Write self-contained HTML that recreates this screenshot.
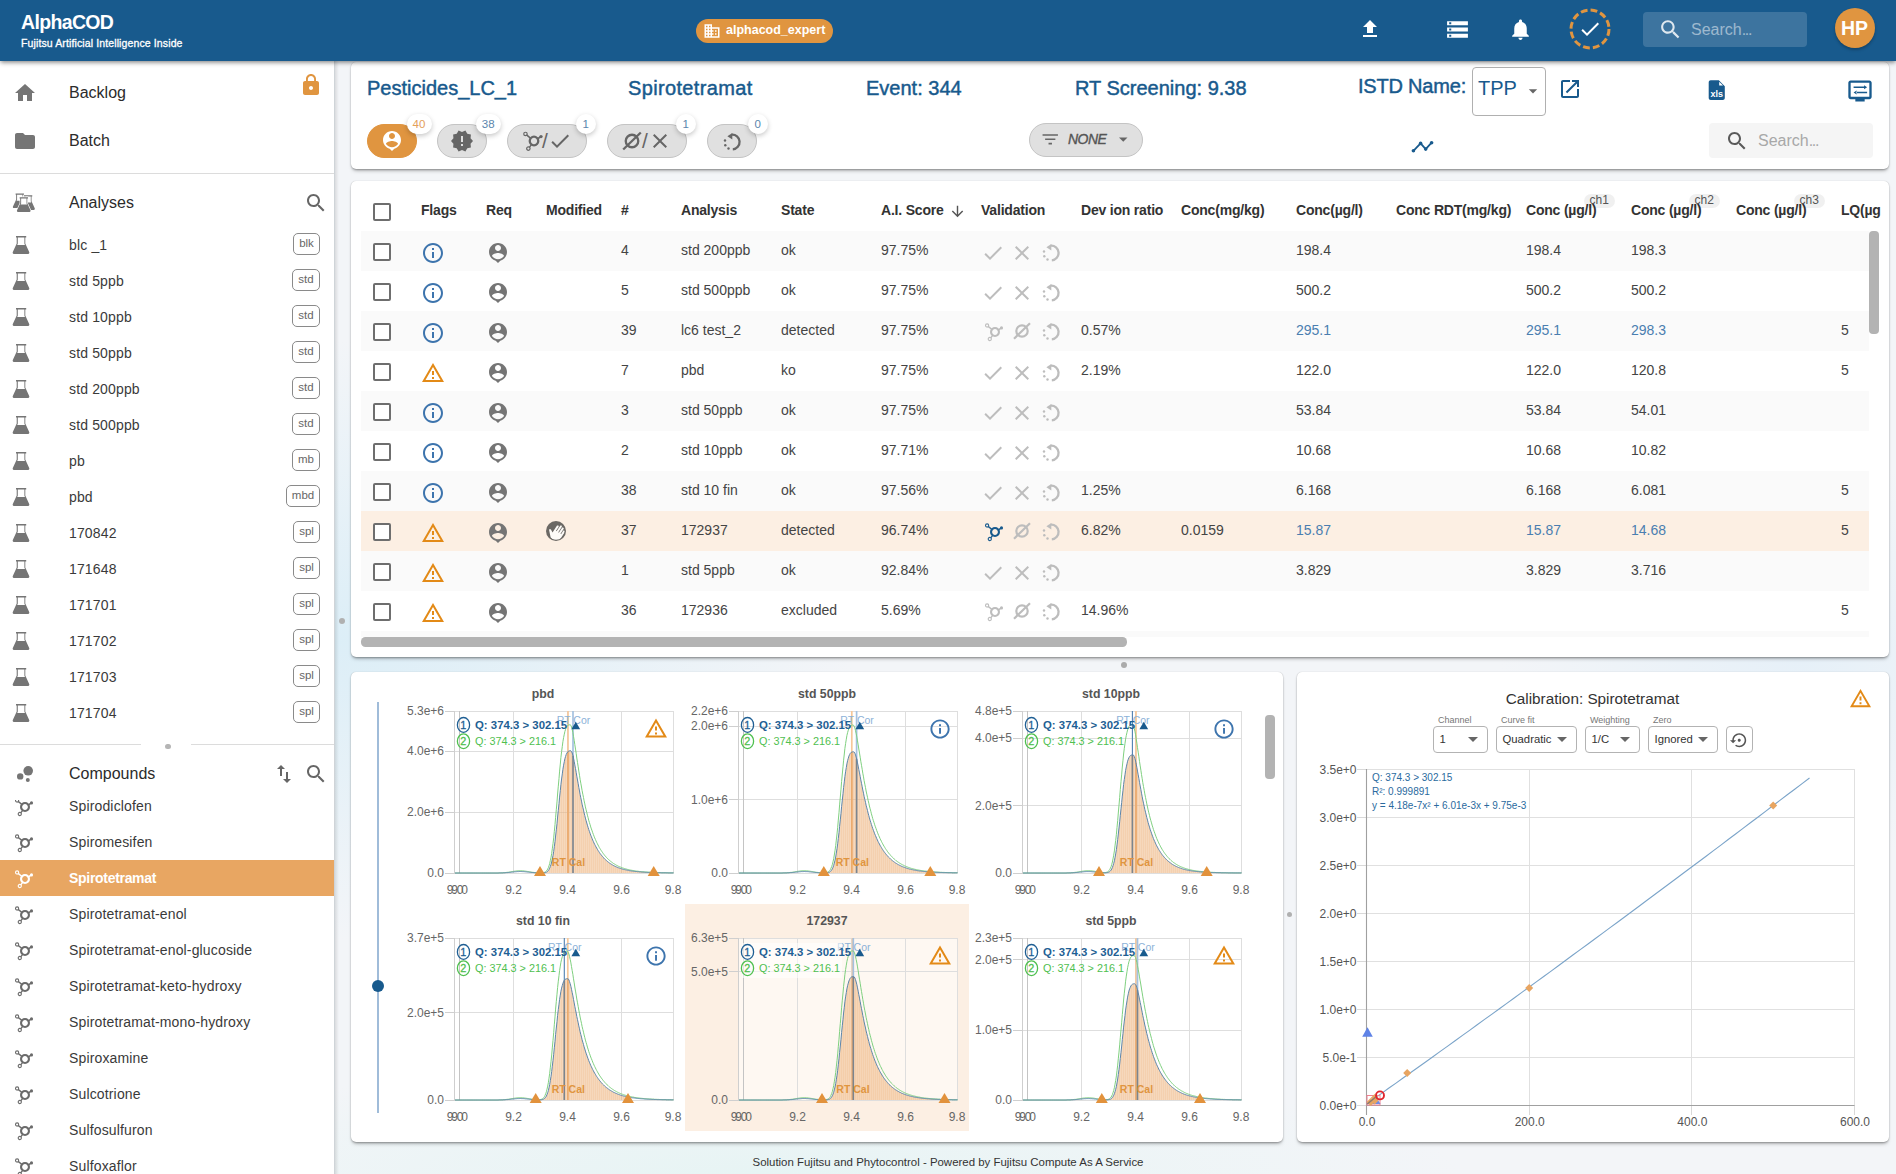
<!DOCTYPE html><html><head><meta charset="utf-8"><title>AlphaCOD</title><style>
*{box-sizing:border-box;margin:0;padding:0}
html,body{width:1896px;height:1174px;overflow:hidden}
body{position:relative;font-family:"Liberation Sans",sans-serif;color:#333;
 background:#f3f5f8;
 background-image:radial-gradient(ellipse 520px 300px at 335px 640px,#dceef7 0%,rgba(220,238,247,0) 100%),radial-gradient(ellipse 700px 110px at 760px 1174px,#e7f4f4 0%,rgba(231,244,244,0) 100%),radial-gradient(ellipse 300px 200px at 1800px 660px,#e6f0f8 0%,rgba(230,240,248,0) 100%)}
.abs,.t,.ic,.box{position:absolute}
.t{white-space:nowrap;line-height:20px;height:20px;margin-top:-10px}
.card{position:absolute;background:#fff;border-radius:5px;box-shadow:0 3px 4px -2px rgba(0,0,0,.38),0 1px 2px 0 rgba(0,0,0,.2),0 0 1px rgba(0,0,0,.22)}
#hdr{position:absolute;left:0;top:0;width:1896px;height:61px;background:#185a8d;box-shadow:0 2px 4px -1px rgba(0,0,0,.35),0 2px 5px 0 rgba(0,0,0,.2);z-index:5}
#side{position:absolute;left:0;top:60px;width:335px;height:1114px;background:#fff;border-right:1px solid #cfd4d8;overflow:hidden}
#grip{position:absolute;left:335px;top:60px;width:4px;height:1114px;background:linear-gradient(90deg,rgba(0,0,0,.10),rgba(0,0,0,0))}
.nav{font-size:16px;color:#2b2b2b;padding-top:1.2px}
.li{font-size:14px;color:#3a3a3a;letter-spacing:.15px}
.tag{position:absolute;height:22px;border:1px solid #8a8a8a;border-radius:5px;font-size:11.5px;color:#666;text-align:center;line-height:19px;background:#fff}
.h1{font-size:20px;color:#185a8d;font-weight:normal;-webkit-text-stroke:.45px #185a8d;line-height:28px;height:28px;margin-top:-14px}
.chip{position:absolute;height:33.5px;border-radius:17px;background:#e0e0e0;border:1px solid #c4c4c4}
.badge{position:absolute;width:20px;height:20px;border-radius:10px;background:#fff;box-shadow:0 2px 5px rgba(0,0,0,.22);font-size:11.5px;text-align:center;line-height:20px;color:#5b86ad}
.th{font-size:14px;font-weight:bold;color:#333;letter-spacing:-.2px}
.td{font-size:14px;color:#444}
.lnk{color:#4a7eb0}
.row{position:absolute;left:361px;width:1508px;height:40px}
.cb{position:absolute;width:18px;height:18px;border:2px solid #6e6e6e;border-radius:2px;background:#fff}
.sup{position:absolute;height:14px;border-radius:7px;background:rgba(0,0,0,.06);font-size:12px;line-height:13px;color:#555;padding:0 6px}
svg text{font-family:"Liberation Sans",sans-serif}
.sel{position:absolute;height:27px;border:1px solid #b3b3b3;border-radius:4px;background:#fff;font-size:11.3px;color:#333;line-height:25px;padding-left:5.5px}
.lbl{font-size:9px;color:#777}
</style></head><body>
<div id="hdr">
<div class="t " style="left:21px;top:22px;font-size:19.5px;font-weight:bold;color:#fff;letter-spacing:-.65px;line-height:24px;height:24px;margin-top:-12px;">AlphaCOD</div>
<div class="t " style="left:21px;top:42.6px;font-size:10.5px;color:#fff;-webkit-text-stroke:.3px #fff;letter-spacing:.12px;">Fujitsu Artificial Intelligence Inside</div>
<div class="abs" style="left:696px;top:18.5px;width:137px;height:24px;border-radius:12px;background:#e09540"></div>
<svg class="ic" style="left:703.30px;top:21.80px" width="18" height="18" viewBox="0 0 24 24" ><path fill="#fff" d="M12 7V3H2v18h20V7H12zM6 19H4v-2h2v2zm0-4H4v-2h2v2zm0-4H4V9h2v2zm0-4H4V5h2v2zm4 12H8v-2h2v2zm0-4H8v-2h2v2zm0-4H8V9h2v2zm0-4H8V5h2v2zm10 12h-8v-2h2v-2h-2v-2h2v-2h-2V9h8v10zm-2-8h-2v2h2v-2zm0 4h-2v2h2v-2z"/></svg>
<div class="t " style="left:726px;top:30px;font-size:12.5px;font-weight:bold;color:#fff;">alphacod_expert</div>
<svg class="ic" style="left:1358.00px;top:17.00px" width="24" height="24" viewBox="0 0 24 24" ><path fill="#fff" d="M9 16h6v-6h4l-7-7-7 7h4zm-4 2h14v2H5z"/></svg>
<svg class="ic" style="left:1445.00px;top:16.50px" width="25" height="25" viewBox="0 0 24 24" ><path fill="#fff" d="M2 20h20v-4H2v4zm2-3h2v2H4v-2zM2 4v4h20V4H2zm4 3H4V5h2v2zm-4 7h20v-4H2v4zm2-3h2v2H4v-2z"/></svg>
<svg class="ic" style="left:1508.00px;top:16.50px" width="25" height="25" viewBox="0 0 24 24" ><path fill="#fff" d="M12 22c1.1 0 2-.9 2-2h-4c0 1.1.89 2 2 2zm6-6v-5c0-3.07-1.64-5.64-4.5-6.32V4c0-.83-.67-1.5-1.5-1.5s-1.5.67-1.5 1.5v.68C7.63 5.36 6 7.92 6 11v5l-2 2v1h16v-1l-2-2z"/></svg>
<svg class="ic" style="left:1568px;top:7px" width="44" height="44" viewBox="0 0 44 44"><circle cx="22" cy="22" r="19" fill="none" stroke="#e09540" stroke-width="3" stroke-dasharray="6.8 3.15"/></svg>
<svg class="ic" style="left:1578.00px;top:17.00px" width="24" height="24" viewBox="0 0 24 24" ><path fill="#fff" d="M9 16.17L4.83 12l-1.42 1.41L9 19 21 7l-1.41-1.41z"/></svg>
<div class="abs" style="left:1643px;top:12px;width:164px;height:35px;border-radius:4px;background:rgba(255,255,255,.16)"></div>
<svg class="ic" style="left:1658.00px;top:16.50px" width="25" height="25" viewBox="0 0 24 24" ><path fill="#dfe8ef" d="M15.5 14h-.79l-.28-.27C15.41 12.59 16 11.11 16 9.5 16 5.91 13.09 3 9.5 3S3 5.91 3 9.5 5.91 16 9.5 16c1.61 0 3.09-.59 4.23-1.57l.27.28v.79l5 4.99L20.49 19l-4.99-5zm-6 0C7.01 14 5 11.99 5 9.5S7.01 5 9.5 5 14 7.01 14 9.5 11.99 14 9.5 14z"/></svg>
<div class="t " style="left:1691px;top:29.5px;font-size:16px;color:rgba(255,255,255,.5);">Search<span style="letter-spacing:-1.3px">...</span></div>
<div class="abs" style="left:1834.5px;top:7.5px;width:40.5px;height:40.5px;border-radius:21px;box-shadow:0 2px 3px rgba(0,0,0,.25);background:#e09540"></div>
<div class="t " style="left:1834px;top:27.5px;font-size:19.5px;font-weight:bold;color:#fff;width:41px;text-align:center;line-height:24px;height:24px;margin-top:-12px;">HP</div>
</div>
<div id="side"><div class="abs" style="left:0;top:-60px;width:335px;height:1174px">
<svg class="ic" style="left:13.00px;top:81.00px" width="24" height="24" viewBox="0 0 24 24" ><path fill="#757575" d="M10 20v-6h4v6h5v-8h3L12 3 2 12h3v8z"/></svg>
<div class="t nav" style="left:69px;top:92px;">Backlog</div>
<svg class="ic" style="left:299.00px;top:72.90px" width="24" height="24" viewBox="0 0 24 24" ><path fill="#e09540" d="M18 8h-1V6c0-2.76-2.24-5-5-5S7 3.24 7 6v2H6c-1.1 0-2 .9-2 2v10c0 1.1.9 2 2 2h12c1.1 0 2-.9 2-2V10c0-1.1-.9-2-2-2zm-6 9c-1.1 0-2-.9-2-2s.9-2 2-2 2 .9 2 2-.9 2-2 2zm3.1-9H8.9V6c0-1.71 1.39-3.1 3.1-3.1 1.71 0 3.1 1.39 3.1 3.1v2z"/></svg>
<svg class="ic" style="left:13.00px;top:128.50px" width="24" height="24" viewBox="0 0 24 24" ><path fill="#757575" d="M10 4H4c-1.1 0-1.99.9-1.99 2L2 18c0 1.1.9 2 2 2h16c1.1 0 2-.9 2-2V8c0-1.1-.9-2-2-2h-8l-2-2z"/></svg>
<div class="t nav" style="left:69px;top:140px;">Batch</div>
<div class="abs" style="left:0;top:173px;width:335px;height:1px;background:#dcdcdc"></div>
<svg class="ic" style="left:8px;top:188px" width="30" height="28" viewBox="0 0 30 28"><g stroke-linejoin="round"><path transform="translate(1.86,2.86) scale(.82)" fill="#757575" fill-rule="evenodd" d="M7 3.1h10.2v1.5h-.9v5.9l3.9 8.6c.4.9-.1 1.900-1 1.900H4.800c-.9 0-1.400-1-1-1.900l3.900-8.600V4.600H7zM8.800 4.600v6.100L8.200 12.100h7.800l-.6-1.400V4.600z"/><path transform="translate(10.16,4.66) scale(.82)" fill="#fff" stroke="#fff" stroke-width="1.3" d="M7 3.1h10.2v1.5h-.9v5.9l3.9 8.6c.4.9-.1 1.900-1 1.900H4.800c-.9 0-1.400-1-1-1.900l3.900-8.600V4.600H7z"/><path transform="translate(10.16,4.66) scale(.82)" fill="#757575" fill-rule="evenodd" d="M7 3.1h10.2v1.5h-.9v5.9l3.9 8.6c.4.9-.1 1.900-1 1.900H4.800c-.9 0-1.400-1-1-1.900l3.900-8.600V4.600H7zM8.800 4.600v6.100L8.200 12.100h7.800l-.6-1.400V4.600z"/><path transform="translate(5.91,6.66) scale(.82)" fill="#fff" stroke="#fff" stroke-width="1.5" d="M7 3.1h10.2v1.5h-.9v5.9l3.9 8.6c.4.9-.1 1.900-1 1.900H4.800c-.9 0-1.400-1-1-1.900l3.900-8.600V4.600H7z"/><path transform="translate(5.91,6.66) scale(.82)" fill="#757575" fill-rule="evenodd" d="M7 3.1h10.2v1.5h-.9v5.9l3.9 8.6c.4.9-.1 1.900-1 1.900H4.800c-.9 0-1.400-1-1-1.900l3.900-8.600V4.600H7zM8.800 4.600v6.100L8.200 12.100h7.800l-.6-1.400V4.600z"/></g></svg>
<div class="t nav" style="left:69px;top:202px;">Analyses</div>
<svg class="ic" style="left:303.80px;top:190.80px" width="24" height="24" viewBox="0 0 24 24" ><path fill="#666" d="M15.5 14h-.79l-.28-.27C15.41 12.59 16 11.11 16 9.5 16 5.91 13.09 3 9.5 3S3 5.91 3 9.5 5.91 16 9.5 16c1.61 0 3.09-.59 4.23-1.57l.27.28v.79l5 4.99L20.49 19l-4.99-5zm-6 0C7.01 14 5 11.99 5 9.5S7.01 5 9.5 5 14 7.01 14 9.5 11.99 14 9.5 14z"/></svg>
<svg class="ic" style="left:8.90px;top:233.10px" width="24" height="24" viewBox="0 0 24 24"><path fill="#757575" fill-rule="evenodd" d="M7 3.1h10.2v1.5h-.9v5.9l3.9 8.6c.4.9-.1 1.900-1 1.900H4.800c-.9 0-1.400-1-1-1.900l3.900-8.600V4.600H7zM8.800 4.600v6.100L8.200 12.100h7.800l-.6-1.400V4.600z"/></svg>
<div class="t li" style="left:69px;top:244.5px;">blc _1</div>
<div class="tag" style="left:293px;top:232.5px;width:27px">blk</div>
<svg class="ic" style="left:8.90px;top:269.10px" width="24" height="24" viewBox="0 0 24 24"><path fill="#757575" fill-rule="evenodd" d="M7 3.1h10.2v1.5h-.9v5.9l3.9 8.6c.4.9-.1 1.900-1 1.900H4.800c-.9 0-1.400-1-1-1.900l3.900-8.600V4.600H7zM8.800 4.600v6.100L8.200 12.100h7.800l-.6-1.400V4.600z"/></svg>
<div class="t li" style="left:69px;top:280.5px;">std 5ppb</div>
<div class="tag" style="left:292px;top:268.5px;width:28px">std</div>
<svg class="ic" style="left:8.90px;top:305.10px" width="24" height="24" viewBox="0 0 24 24"><path fill="#757575" fill-rule="evenodd" d="M7 3.1h10.2v1.5h-.9v5.9l3.9 8.6c.4.9-.1 1.900-1 1.900H4.800c-.9 0-1.400-1-1-1.900l3.900-8.600V4.600H7zM8.800 4.600v6.100L8.200 12.100h7.800l-.6-1.400V4.600z"/></svg>
<div class="t li" style="left:69px;top:316.5px;">std 10ppb</div>
<div class="tag" style="left:292px;top:304.5px;width:28px">std</div>
<svg class="ic" style="left:8.90px;top:341.10px" width="24" height="24" viewBox="0 0 24 24"><path fill="#757575" fill-rule="evenodd" d="M7 3.1h10.2v1.5h-.9v5.9l3.9 8.6c.4.9-.1 1.900-1 1.900H4.800c-.9 0-1.400-1-1-1.900l3.900-8.600V4.600H7zM8.800 4.600v6.100L8.200 12.100h7.800l-.6-1.400V4.600z"/></svg>
<div class="t li" style="left:69px;top:352.5px;">std 50ppb</div>
<div class="tag" style="left:292px;top:340.5px;width:28px">std</div>
<svg class="ic" style="left:8.90px;top:377.10px" width="24" height="24" viewBox="0 0 24 24"><path fill="#757575" fill-rule="evenodd" d="M7 3.1h10.2v1.5h-.9v5.9l3.9 8.6c.4.9-.1 1.900-1 1.900H4.800c-.9 0-1.400-1-1-1.900l3.900-8.600V4.600H7zM8.800 4.600v6.100L8.200 12.100h7.800l-.6-1.400V4.600z"/></svg>
<div class="t li" style="left:69px;top:388.5px;">std 200ppb</div>
<div class="tag" style="left:292px;top:376.5px;width:28px">std</div>
<svg class="ic" style="left:8.90px;top:413.10px" width="24" height="24" viewBox="0 0 24 24"><path fill="#757575" fill-rule="evenodd" d="M7 3.1h10.2v1.5h-.9v5.9l3.9 8.6c.4.9-.1 1.900-1 1.900H4.800c-.9 0-1.400-1-1-1.900l3.900-8.600V4.600H7zM8.800 4.600v6.100L8.200 12.100h7.800l-.6-1.400V4.600z"/></svg>
<div class="t li" style="left:69px;top:424.5px;">std 500ppb</div>
<div class="tag" style="left:292px;top:412.5px;width:28px">std</div>
<svg class="ic" style="left:8.90px;top:449.10px" width="24" height="24" viewBox="0 0 24 24"><path fill="#757575" fill-rule="evenodd" d="M7 3.1h10.2v1.5h-.9v5.9l3.9 8.6c.4.9-.1 1.900-1 1.900H4.800c-.9 0-1.400-1-1-1.900l3.900-8.600V4.600H7zM8.800 4.600v6.100L8.200 12.100h7.800l-.6-1.400V4.600z"/></svg>
<div class="t li" style="left:69px;top:460.5px;">pb</div>
<div class="tag" style="left:292px;top:448.5px;width:28px">mb</div>
<svg class="ic" style="left:8.90px;top:485.10px" width="24" height="24" viewBox="0 0 24 24"><path fill="#757575" fill-rule="evenodd" d="M7 3.1h10.2v1.5h-.9v5.9l3.9 8.6c.4.9-.1 1.900-1 1.900H4.800c-.9 0-1.400-1-1-1.900l3.900-8.600V4.600H7zM8.800 4.600v6.100L8.200 12.100h7.800l-.6-1.400V4.600z"/></svg>
<div class="t li" style="left:69px;top:496.5px;">pbd</div>
<div class="tag" style="left:286px;top:484.5px;width:34px">mbd</div>
<svg class="ic" style="left:8.90px;top:521.10px" width="24" height="24" viewBox="0 0 24 24"><path fill="#757575" fill-rule="evenodd" d="M7 3.1h10.2v1.5h-.9v5.9l3.9 8.6c.4.9-.1 1.900-1 1.900H4.800c-.9 0-1.400-1-1-1.900l3.900-8.600V4.600H7zM8.800 4.600v6.100L8.200 12.100h7.800l-.6-1.400V4.600z"/></svg>
<div class="t li" style="left:69px;top:532.5px;">170842</div>
<div class="tag" style="left:293px;top:520.5px;width:27px">spl</div>
<svg class="ic" style="left:8.90px;top:557.10px" width="24" height="24" viewBox="0 0 24 24"><path fill="#757575" fill-rule="evenodd" d="M7 3.1h10.2v1.5h-.9v5.9l3.9 8.6c.4.9-.1 1.900-1 1.900H4.800c-.9 0-1.400-1-1-1.900l3.900-8.600V4.600H7zM8.800 4.600v6.100L8.200 12.100h7.800l-.6-1.400V4.600z"/></svg>
<div class="t li" style="left:69px;top:568.5px;">171648</div>
<div class="tag" style="left:293px;top:556.5px;width:27px">spl</div>
<svg class="ic" style="left:8.90px;top:593.10px" width="24" height="24" viewBox="0 0 24 24"><path fill="#757575" fill-rule="evenodd" d="M7 3.1h10.2v1.5h-.9v5.9l3.9 8.6c.4.9-.1 1.900-1 1.900H4.800c-.9 0-1.400-1-1-1.900l3.900-8.600V4.600H7zM8.800 4.600v6.100L8.200 12.100h7.800l-.6-1.400V4.600z"/></svg>
<div class="t li" style="left:69px;top:604.5px;">171701</div>
<div class="tag" style="left:293px;top:592.5px;width:27px">spl</div>
<svg class="ic" style="left:8.90px;top:629.10px" width="24" height="24" viewBox="0 0 24 24"><path fill="#757575" fill-rule="evenodd" d="M7 3.1h10.2v1.5h-.9v5.9l3.9 8.6c.4.9-.1 1.900-1 1.900H4.800c-.9 0-1.400-1-1-1.900l3.900-8.600V4.600H7zM8.800 4.600v6.100L8.200 12.100h7.800l-.6-1.400V4.600z"/></svg>
<div class="t li" style="left:69px;top:640.5px;">171702</div>
<div class="tag" style="left:293px;top:628.5px;width:27px">spl</div>
<svg class="ic" style="left:8.90px;top:665.10px" width="24" height="24" viewBox="0 0 24 24"><path fill="#757575" fill-rule="evenodd" d="M7 3.1h10.2v1.5h-.9v5.9l3.9 8.6c.4.9-.1 1.900-1 1.900H4.800c-.9 0-1.400-1-1-1.900l3.900-8.600V4.600H7zM8.800 4.600v6.100L8.200 12.100h7.800l-.6-1.400V4.600z"/></svg>
<div class="t li" style="left:69px;top:676.5px;">171703</div>
<div class="tag" style="left:293px;top:664.5px;width:27px">spl</div>
<svg class="ic" style="left:8.90px;top:701.10px" width="24" height="24" viewBox="0 0 24 24"><path fill="#757575" fill-rule="evenodd" d="M7 3.1h10.2v1.5h-.9v5.9l3.9 8.6c.4.9-.1 1.900-1 1.900H4.800c-.9 0-1.400-1-1-1.900l3.900-8.600V4.600H7zM8.800 4.600v6.100L8.200 12.100h7.800l-.6-1.400V4.600z"/></svg>
<div class="t li" style="left:69px;top:712.5px;">171704</div>
<div class="tag" style="left:293px;top:700.5px;width:27px">spl</div>
<div class="abs" style="left:0;top:744px;width:335px;height:1px;background:#dcdcdc"></div>
<div class="abs" style="left:141px;top:740px;width:50px;height:12px;background:#fff"></div>
<div class="abs" style="left:165px;top:743.8px;width:5.5px;height:5.5px;border-radius:3px;background:#b5b5b5"></div>
<svg class="ic" style="left:13px;top:762px" width="24" height="24" viewBox="0 0 24 24" fill="#757575"><circle cx="7.200" cy="14.400" r="3.200"/><circle cx="14.800" cy="18" r="2"/><circle cx="15.200" cy="8.800" r="4.800"/></svg>
<div class="t nav" style="left:69px;top:773px;">Compounds</div>
<svg class="ic" style="left:272.00px;top:762.00px" width="24" height="24" viewBox="0 0 24 24" ><path fill="#666" d="M16 17.01V10h-2v7.01h-3L15 21l4-3.99h-3zM9 3L5 6.99h3V14h2V6.99h3L9 3z"/></svg>
<svg class="ic" style="left:303.85px;top:761.80px" width="24" height="24" viewBox="0 0 24 24" ><path fill="#666" d="M15.5 14h-.79l-.28-.27C15.41 12.59 16 11.11 16 9.5 16 5.91 13.09 3 9.5 3S3 5.91 3 9.5 5.91 16 9.5 16c1.61 0 3.09-.59 4.23-1.57l.27.28v.79l5 4.99L20.49 19l-4.99-5zm-6 0C7.01 14 5 11.99 5 9.5S7.01 5 9.5 5 14 7.01 14 9.5 11.99 14 9.5 14z"/></svg>
<svg class="ic" style="left:12.80px;top:794.90px;overflow:visible" width="24" height="24" viewBox="0 0 24 24" fill="none" stroke="#6b6b6b"><g transform="translate(12 12) scale(1)"><circle cx="0" cy="0" r="3.95" stroke-width="2.1"/><path d="M-6.9 -5.6L-3.3 -2.7M-4.3 5.9L-2.5 3.6" stroke-width="1.4"/><path d="M3.4 -2.1L6.5 -4.1" stroke-width="1.6"/><circle cx="-7.9" cy="-6.5" r="1.6" stroke-width="1.1"/><circle cx="6.5" cy="-4.1" r="1.55" fill="#6b6b6b" stroke="none"/><circle cx="-5.2" cy="7.0" r="1.6" stroke-width="1.1"/></g></svg>
<div class="t li" style="left:69px;top:806px;">Spirodiclofen</div>
<svg class="ic" style="left:12.80px;top:830.90px;overflow:visible" width="24" height="24" viewBox="0 0 24 24" fill="none" stroke="#6b6b6b"><g transform="translate(12 12) scale(1)"><circle cx="0" cy="0" r="3.95" stroke-width="2.1"/><path d="M-6.9 -5.6L-3.3 -2.7M-4.3 5.9L-2.5 3.6" stroke-width="1.4"/><path d="M3.4 -2.1L6.5 -4.1" stroke-width="1.6"/><circle cx="-7.9" cy="-6.5" r="1.6" stroke-width="1.1"/><circle cx="6.5" cy="-4.1" r="1.55" fill="#6b6b6b" stroke="none"/><circle cx="-5.2" cy="7.0" r="1.6" stroke-width="1.1"/></g></svg>
<div class="t li" style="left:69px;top:842px;">Spiromesifen</div>
<div class="abs" style="left:0;top:860px;width:335px;height:36px;background:#e8a662"></div>
<svg class="ic" style="left:12.80px;top:866.90px;overflow:visible" width="24" height="24" viewBox="0 0 24 24" fill="none" stroke="#fff"><g transform="translate(12 12) scale(1)"><circle cx="0" cy="0" r="3.95" stroke-width="2.1"/><path d="M-6.9 -5.6L-3.3 -2.7M-4.3 5.9L-2.5 3.6" stroke-width="1.4"/><path d="M3.4 -2.1L6.5 -4.1" stroke-width="1.6"/><circle cx="-7.9" cy="-6.5" r="1.6" stroke-width="1.1"/><circle cx="6.5" cy="-4.1" r="1.55" fill="#fff" stroke="none"/><circle cx="-5.2" cy="7.0" r="1.6" stroke-width="1.1"/></g></svg>
<div class="t li" style="left:69px;top:878px;color:#fff;font-weight:bold;letter-spacing:-.3px;">Spirotetramat</div>
<svg class="ic" style="left:12.80px;top:902.90px;overflow:visible" width="24" height="24" viewBox="0 0 24 24" fill="none" stroke="#6b6b6b"><g transform="translate(12 12) scale(1)"><circle cx="0" cy="0" r="3.95" stroke-width="2.1"/><path d="M-6.9 -5.6L-3.3 -2.7M-4.3 5.9L-2.5 3.6" stroke-width="1.4"/><path d="M3.4 -2.1L6.5 -4.1" stroke-width="1.6"/><circle cx="-7.9" cy="-6.5" r="1.6" stroke-width="1.1"/><circle cx="6.5" cy="-4.1" r="1.55" fill="#6b6b6b" stroke="none"/><circle cx="-5.2" cy="7.0" r="1.6" stroke-width="1.1"/></g></svg>
<div class="t li" style="left:69px;top:914px;">Spirotetramat-enol</div>
<svg class="ic" style="left:12.80px;top:938.90px;overflow:visible" width="24" height="24" viewBox="0 0 24 24" fill="none" stroke="#6b6b6b"><g transform="translate(12 12) scale(1)"><circle cx="0" cy="0" r="3.95" stroke-width="2.1"/><path d="M-6.9 -5.6L-3.3 -2.7M-4.3 5.9L-2.5 3.6" stroke-width="1.4"/><path d="M3.4 -2.1L6.5 -4.1" stroke-width="1.6"/><circle cx="-7.9" cy="-6.5" r="1.6" stroke-width="1.1"/><circle cx="6.5" cy="-4.1" r="1.55" fill="#6b6b6b" stroke="none"/><circle cx="-5.2" cy="7.0" r="1.6" stroke-width="1.1"/></g></svg>
<div class="t li" style="left:69px;top:950px;">Spirotetramat-enol-glucoside</div>
<svg class="ic" style="left:12.80px;top:974.90px;overflow:visible" width="24" height="24" viewBox="0 0 24 24" fill="none" stroke="#6b6b6b"><g transform="translate(12 12) scale(1)"><circle cx="0" cy="0" r="3.95" stroke-width="2.1"/><path d="M-6.9 -5.6L-3.3 -2.7M-4.3 5.9L-2.5 3.6" stroke-width="1.4"/><path d="M3.4 -2.1L6.5 -4.1" stroke-width="1.6"/><circle cx="-7.9" cy="-6.5" r="1.6" stroke-width="1.1"/><circle cx="6.5" cy="-4.1" r="1.55" fill="#6b6b6b" stroke="none"/><circle cx="-5.2" cy="7.0" r="1.6" stroke-width="1.1"/></g></svg>
<div class="t li" style="left:69px;top:986px;">Spirotetramat-keto-hydroxy</div>
<svg class="ic" style="left:12.80px;top:1010.90px;overflow:visible" width="24" height="24" viewBox="0 0 24 24" fill="none" stroke="#6b6b6b"><g transform="translate(12 12) scale(1)"><circle cx="0" cy="0" r="3.95" stroke-width="2.1"/><path d="M-6.9 -5.6L-3.3 -2.7M-4.3 5.9L-2.5 3.6" stroke-width="1.4"/><path d="M3.4 -2.1L6.5 -4.1" stroke-width="1.6"/><circle cx="-7.9" cy="-6.5" r="1.6" stroke-width="1.1"/><circle cx="6.5" cy="-4.1" r="1.55" fill="#6b6b6b" stroke="none"/><circle cx="-5.2" cy="7.0" r="1.6" stroke-width="1.1"/></g></svg>
<div class="t li" style="left:69px;top:1022px;">Spirotetramat-mono-hydroxy</div>
<svg class="ic" style="left:12.80px;top:1046.90px;overflow:visible" width="24" height="24" viewBox="0 0 24 24" fill="none" stroke="#6b6b6b"><g transform="translate(12 12) scale(1)"><circle cx="0" cy="0" r="3.95" stroke-width="2.1"/><path d="M-6.9 -5.6L-3.3 -2.7M-4.3 5.9L-2.5 3.6" stroke-width="1.4"/><path d="M3.4 -2.1L6.5 -4.1" stroke-width="1.6"/><circle cx="-7.9" cy="-6.5" r="1.6" stroke-width="1.1"/><circle cx="6.5" cy="-4.1" r="1.55" fill="#6b6b6b" stroke="none"/><circle cx="-5.2" cy="7.0" r="1.6" stroke-width="1.1"/></g></svg>
<div class="t li" style="left:69px;top:1058px;">Spiroxamine</div>
<svg class="ic" style="left:12.80px;top:1082.90px;overflow:visible" width="24" height="24" viewBox="0 0 24 24" fill="none" stroke="#6b6b6b"><g transform="translate(12 12) scale(1)"><circle cx="0" cy="0" r="3.95" stroke-width="2.1"/><path d="M-6.9 -5.6L-3.3 -2.7M-4.3 5.9L-2.5 3.6" stroke-width="1.4"/><path d="M3.4 -2.1L6.5 -4.1" stroke-width="1.6"/><circle cx="-7.9" cy="-6.5" r="1.6" stroke-width="1.1"/><circle cx="6.5" cy="-4.1" r="1.55" fill="#6b6b6b" stroke="none"/><circle cx="-5.2" cy="7.0" r="1.6" stroke-width="1.1"/></g></svg>
<div class="t li" style="left:69px;top:1094px;">Sulcotrione</div>
<svg class="ic" style="left:12.80px;top:1118.90px;overflow:visible" width="24" height="24" viewBox="0 0 24 24" fill="none" stroke="#6b6b6b"><g transform="translate(12 12) scale(1)"><circle cx="0" cy="0" r="3.95" stroke-width="2.1"/><path d="M-6.9 -5.6L-3.3 -2.7M-4.3 5.9L-2.5 3.6" stroke-width="1.4"/><path d="M3.4 -2.1L6.5 -4.1" stroke-width="1.6"/><circle cx="-7.9" cy="-6.5" r="1.6" stroke-width="1.1"/><circle cx="6.5" cy="-4.1" r="1.55" fill="#6b6b6b" stroke="none"/><circle cx="-5.2" cy="7.0" r="1.6" stroke-width="1.1"/></g></svg>
<div class="t li" style="left:69px;top:1130px;">Sulfosulfuron</div>
<svg class="ic" style="left:12.80px;top:1154.90px;overflow:visible" width="24" height="24" viewBox="0 0 24 24" fill="none" stroke="#6b6b6b"><g transform="translate(12 12) scale(1)"><circle cx="0" cy="0" r="3.95" stroke-width="2.1"/><path d="M-6.9 -5.6L-3.3 -2.7M-4.3 5.9L-2.5 3.6" stroke-width="1.4"/><path d="M3.4 -2.1L6.5 -4.1" stroke-width="1.6"/><circle cx="-7.9" cy="-6.5" r="1.6" stroke-width="1.1"/><circle cx="6.5" cy="-4.1" r="1.55" fill="#6b6b6b" stroke="none"/><circle cx="-5.2" cy="7.0" r="1.6" stroke-width="1.1"/></g></svg>
<div class="t li" style="left:69px;top:1166px;">Sulfoxaflor</div>
<div class="abs" style="left:0;top:788px;width:60px;height:12.4px;background:#fff"></div>
</div></div>
<div id="grip"></div>
<div class="abs" style="left:339px;top:618px;width:5.5px;height:5.5px;border-radius:3px;background:#b0b0b0"></div>
<div class="card" style="left:351px;top:62px;width:1538px;height:107px"></div>
<div class="t h1" style="left:367px;top:88px;">Pesticides_LC_1</div>
<div class="t h1" style="left:628px;top:88px;letter-spacing:.35px;">Spirotetramat</div>
<div class="t h1" style="left:866px;top:88px;">Event: 344</div>
<div class="t h1" style="left:1075px;top:88px;">RT Screening: 9.38</div>
<div class="t h1" style="left:1358px;top:86.4px;letter-spacing:-.2px;">ISTD Name:</div>
<div class="abs" style="left:1472px;top:67px;width:74px;height:49px;border:1px solid #b0b0b0;border-radius:4px;background:#fff"></div>
<div class="t h1" style="left:1478px;top:87.6px;-webkit-text-stroke:0;">TPP</div>
<svg class="ic" style="left:1522.50px;top:81.00px" width="20" height="20" viewBox="0 0 24 24" ><path fill="#666" d="M7 10l5 5 5-5z"/></svg>
<svg class="ic" style="left:1558.00px;top:76.80px" width="24" height="24" viewBox="0 0 24 24" ><path fill="#185a8d" d="M19 19H5V5h7V3H5c-1.11 0-2 .9-2 2v14c0 1.1.89 2 2 2h14c1.1 0 2-.9 2-2v-7h-2v7zM14 3v2h3.59l-9.83 9.83 1.41 1.41L19 6.41V10h2V3h-7z"/></svg>
<svg class="ic" style="left:1705px;top:78.100px" width="24" height="24" viewBox="0 0 24 24"><path fill="#185a8d" d="M5.700 2.200h8.100l6 6v11.800c0 1.100-.9 2-2 2H5.700c-1.100 0-2-.9-2-2V4.200c0-1.100.9-2 2-2z"/><path fill="#fff" d="M14.200 3.800v3.800H18z"/><text x="11.800" y="19" font-size="9" font-weight="bold" fill="#fff" text-anchor="middle">xls</text></svg>
<svg class="ic" style="left:1845.700px;top:76.700px" width="28" height="28" viewBox="0 0 24 24"><path fill="#185a8d" d="M20 3H4c-1.110 0-2 .89-2 2v12c0 1.100.89 2 2 2h4v2h8v-2h4c1.100 0 2-.9 2-2V5c0-1.110-.9-2-2-2zm0 14H4V5h16v12z"/><path fill="#185a8d" d="M6.500 8.100h9v1.300h-9zM15.500 7l2.600 1.750-2.600 1.750zM8.500 12.600h9.600v1.300H8.500zM9.100 11.500l-2.600 1.750 2.600 1.750z"/></svg>
<div class="chip" style="left:367px;top:124px;height:34px;width:50px;background:#e09540;border-color:#e09540;"></div>
<svg class="ic" style="left:380.00px;top:128.90px" width="24" height="24" viewBox="0 0 24 24" ><path fill="#fff" d="M12 2c-4.97 0-9 4.03-9 9 0 4.17 2.84 7.67 6.69 8.69L12 22l2.31-2.31C18.16 18.67 21 15.17 21 11c0-4.97-4.03-9-9-9zm0 2c1.66 0 3 1.34 3 3s-1.34 3-3 3-3-1.34-3-3 1.34-3 3-3zm0 14.3c-2.5 0-4.71-1.28-6-3.22.03-1.99 4-3.08 6-3.08 1.99 0 5.97 1.09 6 3.08-1.29 1.94-3.5 3.22-6 3.22z"/></svg>
<div class="badge" style="left:406.5px;top:114px;width:25px;color:#e3a05a">40</div>
<div class="chip" style="left:437px;top:124px;height:34px;width:50px;"></div>
<svg class="ic" style="left:450.00px;top:129.20px" width="24" height="24" viewBox="0 0 24 24" ><path fill="#666" d="M23 12l-2.44-2.78.34-3.68-3.61-.82-1.89-3.18L12 3 8.6 1.54 6.71 4.72l-3.61.81.34 3.68L1 12l2.44 2.78-.34 3.69 3.61.82 1.89 3.18L12 21l3.4 1.46 1.89-3.18 3.61-.82-.34-3.68L23 12zm-10 5h-2v-2h2v2zm0-4h-2V7h2v6z"/></svg>
<div class="badge" style="left:475.7px;top:114px;width:25px;color:#5b86ad">38</div>
<div class="chip" style="left:507px;top:124px;height:34px;width:80px;"></div>
<svg class="ic" style="left:521.90px;top:129.30px;overflow:visible" width="24" height="24" viewBox="0 0 24 24" fill="none" stroke="#666"><g transform="translate(12 12) scale(1.08)"><circle cx="0" cy="0" r="3.95" stroke-width="2.1"/><path d="M-6.9 -5.6L-3.3 -2.7M-4.3 5.9L-2.5 3.6" stroke-width="1.4"/><path d="M3.4 -2.1L6.5 -4.1" stroke-width="1.6"/><circle cx="-7.9" cy="-6.5" r="1.6" stroke-width="1.1"/><circle cx="6.5" cy="-4.1" r="1.55" fill="#666" stroke="none"/><circle cx="-5.2" cy="7.0" r="1.6" stroke-width="1.1"/></g></svg>
<div class="t " style="left:542px;top:141px;font-size:21px;color:#666;">/</div>
<svg class="ic" style="left:548.30px;top:128.70px" width="24" height="24" viewBox="0 0 24 24" ><path fill="#666" d="M9 16.17L4.83 12l-1.42 1.41L9 19 21 7l-1.41-1.41z"/></svg>
<div class="badge" style="left:575.7px;top:114px;width:20px;color:#5b86ad">1</div>
<div class="chip" style="left:607px;top:124px;height:34px;width:80px;"></div>
<svg class="ic" style="left:620.40px;top:129.30px;overflow:visible" width="24" height="24" viewBox="0 0 24 24" fill="none" stroke="#666" stroke-width="2.1"><g transform="translate(12 12) scale(1.1)"><circle cx="0" cy="0" r="5.7"/><path d="M-8 7.7L8 -7.7"/></g></svg>
<div class="t " style="left:642px;top:141px;font-size:21px;color:#666;">/</div>
<svg class="ic" style="left:648.00px;top:129.00px" width="24" height="24" viewBox="0 0 24 24" ><path fill="#666" d="M19 6.41L17.59 5 12 10.59 6.41 5 5 6.41 10.59 12 5 17.59 6.41 19 12 13.41 17.59 19 19 17.59 13.41 12z"/></svg>
<div class="badge" style="left:675.7px;top:114px;width:20px;color:#5b86ad">1</div>
<div class="chip" style="left:707px;top:124px;height:34px;width:50px;"></div>
<svg class="ic" style="left:720.10px;top:130.10px;overflow:visible" width="24" height="24" viewBox="0 0 24 24"><g transform="translate(12 12) scale(1)" fill="#666"><path d="M-0.3 -7.3A7.3 7.3 0 1 1 0.8 7.3" fill="none" stroke="#666" stroke-width="2.3"/><path d="M-4.6 -5.7L0.3 -9.0L0.3 -2.6Z"/><circle cx="-7.0" cy="-1.5" r="1.2"/><circle cx="-6.7" cy="3.3" r="1.2"/><circle cx="-3.5" cy="6.5" r="1.2"/></g></svg>
<div class="badge" style="left:747.7px;top:114px;width:20px;color:#5b86ad">0</div>
<div class="chip" style="left:1029px;top:123px;height:33.7px;width:114px;"></div>
<svg class="ic" style="left:1039.85px;top:129.35px" width="20.5" height="20.5" viewBox="0 0 24 24" ><path fill="#666" d="M10 18h4v-2h-4v2zM3 6v2h18V6H3zm3 7h12v-2H6v2z"/></svg>
<div class="t " style="left:1068px;top:138.6px;font-size:14px;font-style:italic;color:#555;-webkit-text-stroke:.35px #555;letter-spacing:-.55px;">NONE</div>
<svg class="ic" style="left:1113.45px;top:129.45px" width="20.5" height="20.5" viewBox="0 0 24 24" ><path fill="#666" d="M7 10l5 5 5-5z"/></svg>
<svg class="ic" style="left:1408px;top:136px" width="30" height="20" viewBox="1408 136 30 20"><path d="M1413.400 150.800L1420.600 143.400L1425.700 149.100L1431.600 142.700" fill="none" stroke="#185a8d" stroke-width="1.800"/><g fill="#185a8d"><circle cx="1413.400" cy="150.800" r="1.800"/><circle cx="1420.600" cy="143.400" r="1.800"/><circle cx="1425.700" cy="149.100" r="1.800"/><circle cx="1431.600" cy="142.700" r="1.800"/></g></svg>
<div class="abs" style="left:1709px;top:123px;width:164px;height:35px;border-radius:4px;background:#f5f5f5"></div>
<svg class="ic" style="left:1725.00px;top:128.50px" width="24" height="24" viewBox="0 0 24 24" ><path fill="#5a5a5a" d="M15.5 14h-.79l-.28-.27C15.41 12.59 16 11.11 16 9.5 16 5.91 13.09 3 9.5 3S3 5.91 3 9.5 5.91 16 9.5 16c1.61 0 3.09-.59 4.23-1.57l.27.28v.79l5 4.99L20.49 19l-4.99-5zm-6 0C7.01 14 5 11.99 5 9.5S7.01 5 9.5 5 14 7.01 14 9.5 11.99 14 9.5 14z"/></svg>
<div class="t " style="left:1758px;top:141px;font-size:16px;color:#a8a8a8;">Search<span style="letter-spacing:-1.3px">...</span></div>
<div class="card" style="left:351px;top:181px;width:1538px;height:476px;overflow:hidden"></div>
<div class="cb" style="left:373px;top:203px"></div>
<div class="t th" style="left:421px;top:210px;">Flags</div>
<div class="t th" style="left:486px;top:210px;">Req</div>
<div class="t th" style="left:546px;top:210px;">Modified</div>
<div class="t th" style="left:621px;top:210px;">#</div>
<div class="t th" style="left:681px;top:210px;">Analysis</div>
<div class="t th" style="left:781px;top:210px;">State</div>
<div class="t th" style="left:881px;top:210px;">A.I. Score</div>
<div class="t th" style="left:981px;top:210px;">Validation</div>
<div class="t th" style="left:1081px;top:210px;">Dev ion ratio</div>
<div class="t th" style="left:1181px;top:210px;">Conc(mg/kg)</div>
<div class="t th" style="left:1296px;top:210px;">Conc(µg/l)</div>
<div class="t th" style="left:1396px;top:210px;">Conc RDT(mg/kg)</div>
<div class="t th" style="left:1526px;top:210px;">Conc (µg/l)</div>
<div class="t th" style="left:1631px;top:210px;">Conc (µg/l)</div>
<div class="t th" style="left:1736px;top:210px;">Conc (µg/l)</div>
<div class="t th" style="left:1841px;top:210px;">LQ(µg</div>
<svg class="ic" style="left:948.50px;top:202.50px" width="17" height="17" viewBox="0 0 24 24" ><path fill="#555" d="M20 12l-1.41-1.41L13 16.17V4h-2v12.17l-5.58-5.59L4 12l8 8 8-8z"/></svg>
<div class="sup" style="left:1583.5px;top:194px">ch1</div>
<div class="sup" style="left:1688.5px;top:194px">ch2</div>
<div class="sup" style="left:1793.5px;top:194px">ch3</div>
<div class="row" style="top:231px;background:#fafafa"></div>
<div class="cb" style="left:373px;top:242.8px"></div>
<svg class="ic" style="left:421.00px;top:240.50px" width="24" height="24" viewBox="0 0 24 24" ><path fill="#3d74ad" d="M11 17h2v-6h-2v6zm1-15C6.48 2 2 6.48 2 12s4.48 10 10 10 10-4.48 10-10S17.52 2 12 2zm0 18c-4.41 0-8-3.59-8-8s3.59-8 8-8 8 3.59 8 8-3.59 8-8 8zM11 9h2V7h-2v2z"/></svg>
<svg class="ic" style="left:486.00px;top:240.95px" width="24" height="24" viewBox="0 0 24 24" ><path fill="#757575" d="M12 2c-4.97 0-9 4.03-9 9 0 4.17 2.84 7.67 6.69 8.69L12 22l2.31-2.31C18.16 18.67 21 15.17 21 11c0-4.97-4.03-9-9-9zm0 2c1.66 0 3 1.34 3 3s-1.34 3-3 3-3-1.34-3-3 1.34-3 3-3zm0 14.3c-2.5 0-4.71-1.28-6-3.22.03-1.99 4-3.08 6-3.08 1.99 0 5.97 1.09 6 3.08-1.29 1.94-3.5 3.22-6 3.22z"/></svg>
<div class="t td" style="left:621px;top:250px;">4</div>
<div class="t td" style="left:681px;top:250px;">std 200ppb</div>
<div class="t td" style="left:781px;top:250px;">ok</div>
<div class="t td" style="left:881px;top:250px;">97.75%</div>
<svg class="ic" style="left:981.00px;top:240.70px" width="24" height="24" viewBox="0 0 24 24" ><path fill="#bdbdbd" d="M9 16.17L4.83 12l-1.42 1.41L9 19 21 7l-1.41-1.41z"/></svg>
<svg class="ic" style="left:1010.00px;top:240.90px" width="24" height="24" viewBox="0 0 24 24" ><path fill="#bdbdbd" d="M19 6.41L17.59 5 12 10.59 6.41 5 5 6.41 10.59 12 5 17.59 6.41 19 12 13.41 17.59 19 19 17.59 13.41 12z"/></svg>
<svg class="ic" style="left:1039.40px;top:241.30px;overflow:visible" width="24" height="24" viewBox="0 0 24 24"><g transform="translate(12 12) scale(1)" fill="#bdbdbd"><path d="M-0.3 -7.3A7.3 7.3 0 1 1 0.8 7.3" fill="none" stroke="#bdbdbd" stroke-width="2.3"/><path d="M-4.6 -5.7L0.3 -9.0L0.3 -2.6Z"/><circle cx="-7.0" cy="-1.5" r="1.2"/><circle cx="-6.7" cy="3.3" r="1.2"/><circle cx="-3.5" cy="6.5" r="1.2"/></g></svg>
<div class="t td" style="left:1081px;top:250px;"></div>
<div class="t td" style="left:1181px;top:250px;"></div>
<div class="t td" style="left:1296px;top:250px;">198.4</div>
<div class="t td" style="left:1526px;top:250px;">198.4</div>
<div class="t td" style="left:1631px;top:250px;">198.3</div>
<div class="t td" style="left:1841px;top:250px;"></div>
<div class="row" style="top:271px;background:#fff"></div>
<div class="cb" style="left:373px;top:282.8px"></div>
<svg class="ic" style="left:421.00px;top:280.50px" width="24" height="24" viewBox="0 0 24 24" ><path fill="#3d74ad" d="M11 17h2v-6h-2v6zm1-15C6.48 2 2 6.48 2 12s4.48 10 10 10 10-4.48 10-10S17.52 2 12 2zm0 18c-4.41 0-8-3.59-8-8s3.59-8 8-8 8 3.59 8 8-3.59 8-8 8zM11 9h2V7h-2v2z"/></svg>
<svg class="ic" style="left:486.00px;top:280.95px" width="24" height="24" viewBox="0 0 24 24" ><path fill="#757575" d="M12 2c-4.97 0-9 4.03-9 9 0 4.17 2.84 7.67 6.69 8.69L12 22l2.31-2.31C18.16 18.67 21 15.17 21 11c0-4.97-4.03-9-9-9zm0 2c1.66 0 3 1.34 3 3s-1.34 3-3 3-3-1.34-3-3 1.34-3 3-3zm0 14.3c-2.5 0-4.71-1.28-6-3.22.03-1.99 4-3.08 6-3.08 1.99 0 5.97 1.09 6 3.08-1.29 1.94-3.5 3.22-6 3.22z"/></svg>
<div class="t td" style="left:621px;top:290px;">5</div>
<div class="t td" style="left:681px;top:290px;">std 500ppb</div>
<div class="t td" style="left:781px;top:290px;">ok</div>
<div class="t td" style="left:881px;top:290px;">97.75%</div>
<svg class="ic" style="left:981.00px;top:280.70px" width="24" height="24" viewBox="0 0 24 24" ><path fill="#bdbdbd" d="M9 16.17L4.83 12l-1.42 1.41L9 19 21 7l-1.41-1.41z"/></svg>
<svg class="ic" style="left:1010.00px;top:280.90px" width="24" height="24" viewBox="0 0 24 24" ><path fill="#bdbdbd" d="M19 6.41L17.59 5 12 10.59 6.41 5 5 6.41 10.59 12 5 17.59 6.41 19 12 13.41 17.59 19 19 17.59 13.41 12z"/></svg>
<svg class="ic" style="left:1039.40px;top:281.30px;overflow:visible" width="24" height="24" viewBox="0 0 24 24"><g transform="translate(12 12) scale(1)" fill="#bdbdbd"><path d="M-0.3 -7.3A7.3 7.3 0 1 1 0.8 7.3" fill="none" stroke="#bdbdbd" stroke-width="2.3"/><path d="M-4.6 -5.7L0.3 -9.0L0.3 -2.6Z"/><circle cx="-7.0" cy="-1.5" r="1.2"/><circle cx="-6.7" cy="3.3" r="1.2"/><circle cx="-3.5" cy="6.5" r="1.2"/></g></svg>
<div class="t td" style="left:1081px;top:290px;"></div>
<div class="t td" style="left:1181px;top:290px;"></div>
<div class="t td" style="left:1296px;top:290px;">500.2</div>
<div class="t td" style="left:1526px;top:290px;">500.2</div>
<div class="t td" style="left:1631px;top:290px;">500.2</div>
<div class="t td" style="left:1841px;top:290px;"></div>
<div class="row" style="top:311px;background:#fafafa"></div>
<div class="cb" style="left:373px;top:322.8px"></div>
<svg class="ic" style="left:421.00px;top:320.50px" width="24" height="24" viewBox="0 0 24 24" ><path fill="#3d74ad" d="M11 17h2v-6h-2v6zm1-15C6.48 2 2 6.48 2 12s4.48 10 10 10 10-4.48 10-10S17.52 2 12 2zm0 18c-4.41 0-8-3.59-8-8s3.59-8 8-8 8 3.59 8 8-3.59 8-8 8zM11 9h2V7h-2v2z"/></svg>
<svg class="ic" style="left:486.00px;top:320.95px" width="24" height="24" viewBox="0 0 24 24" ><path fill="#757575" d="M12 2c-4.97 0-9 4.03-9 9 0 4.17 2.84 7.67 6.69 8.69L12 22l2.31-2.31C18.16 18.67 21 15.17 21 11c0-4.97-4.03-9-9-9zm0 2c1.66 0 3 1.34 3 3s-1.34 3-3 3-3-1.34-3-3 1.34-3 3-3zm0 14.3c-2.5 0-4.71-1.28-6-3.22.03-1.99 4-3.08 6-3.08 1.99 0 5.97 1.09 6 3.08-1.29 1.94-3.5 3.22-6 3.22z"/></svg>
<div class="t td" style="left:621px;top:330px;">39</div>
<div class="t td" style="left:681px;top:330px;">lc6 test_2</div>
<div class="t td" style="left:781px;top:330px;">detected</div>
<div class="t td" style="left:881px;top:330px;">97.75%</div>
<svg class="ic" style="left:982.90px;top:319.70px;overflow:visible" width="24" height="24" viewBox="0 0 24 24" fill="none" stroke="#bdbdbd"><g transform="translate(12 12) scale(1)"><circle cx="0" cy="0" r="3.95" stroke-width="2.1"/><path d="M-6.9 -5.6L-3.3 -2.7M-4.3 5.9L-2.5 3.6" stroke-width="1.4"/><path d="M3.4 -2.1L6.5 -4.1" stroke-width="1.6"/><circle cx="-7.9" cy="-6.5" r="1.6" stroke-width="1.1"/><circle cx="6.5" cy="-4.1" r="1.55" fill="#bdbdbd" stroke="none"/><circle cx="-5.2" cy="7.0" r="1.6" stroke-width="1.1"/></g></svg>
<svg class="ic" style="left:1010.30px;top:319.30px;overflow:visible" width="24" height="24" viewBox="0 0 24 24" fill="none" stroke="#bdbdbd" stroke-width="2.2"><g transform="translate(12 12) scale(1)"><circle cx="0" cy="0" r="5.7"/><path d="M-8 7.7L8 -7.7"/></g></svg>
<svg class="ic" style="left:1039.40px;top:319.50px;overflow:visible" width="24" height="24" viewBox="0 0 24 24"><g transform="translate(12 12) scale(1)" fill="#bdbdbd"><path d="M-0.3 -7.3A7.3 7.3 0 1 1 0.8 7.3" fill="none" stroke="#bdbdbd" stroke-width="2.3"/><path d="M-4.6 -5.7L0.3 -9.0L0.3 -2.6Z"/><circle cx="-7.0" cy="-1.5" r="1.2"/><circle cx="-6.7" cy="3.3" r="1.2"/><circle cx="-3.5" cy="6.5" r="1.2"/></g></svg>
<div class="t td" style="left:1081px;top:330px;">0.57%</div>
<div class="t td" style="left:1181px;top:330px;"></div>
<div class="t td lnk" style="left:1296px;top:330px;">295.1</div>
<div class="t td lnk" style="left:1526px;top:330px;">295.1</div>
<div class="t td lnk" style="left:1631px;top:330px;">298.3</div>
<div class="t td" style="left:1841px;top:330px;">5</div>
<div class="row" style="top:351px;background:#fff"></div>
<div class="cb" style="left:373px;top:362.8px"></div>
<svg class="ic" style="left:421.00px;top:360.90px" width="24" height="24" viewBox="0 0 24 24" ><path fill="#e38a17" d="M12 5.99L19.53 19H4.47L12 5.99M12 2L1 21h22L12 2zm1 14h-2v2h2v-2zm0-6h-2v4h2v-4z"/></svg>
<svg class="ic" style="left:486.00px;top:360.95px" width="24" height="24" viewBox="0 0 24 24" ><path fill="#757575" d="M12 2c-4.97 0-9 4.03-9 9 0 4.17 2.84 7.67 6.69 8.69L12 22l2.31-2.31C18.16 18.67 21 15.17 21 11c0-4.97-4.03-9-9-9zm0 2c1.66 0 3 1.34 3 3s-1.34 3-3 3-3-1.34-3-3 1.34-3 3-3zm0 14.3c-2.5 0-4.71-1.28-6-3.22.03-1.99 4-3.08 6-3.08 1.99 0 5.97 1.09 6 3.08-1.29 1.94-3.5 3.22-6 3.22z"/></svg>
<div class="t td" style="left:621px;top:370px;">7</div>
<div class="t td" style="left:681px;top:370px;">pbd</div>
<div class="t td" style="left:781px;top:370px;">ko</div>
<div class="t td" style="left:881px;top:370px;">97.75%</div>
<svg class="ic" style="left:981.00px;top:360.70px" width="24" height="24" viewBox="0 0 24 24" ><path fill="#bdbdbd" d="M9 16.17L4.83 12l-1.42 1.41L9 19 21 7l-1.41-1.41z"/></svg>
<svg class="ic" style="left:1010.00px;top:360.90px" width="24" height="24" viewBox="0 0 24 24" ><path fill="#bdbdbd" d="M19 6.41L17.59 5 12 10.59 6.41 5 5 6.41 10.59 12 5 17.59 6.41 19 12 13.41 17.59 19 19 17.59 13.41 12z"/></svg>
<svg class="ic" style="left:1039.40px;top:361.30px;overflow:visible" width="24" height="24" viewBox="0 0 24 24"><g transform="translate(12 12) scale(1)" fill="#bdbdbd"><path d="M-0.3 -7.3A7.3 7.3 0 1 1 0.8 7.3" fill="none" stroke="#bdbdbd" stroke-width="2.3"/><path d="M-4.6 -5.7L0.3 -9.0L0.3 -2.6Z"/><circle cx="-7.0" cy="-1.5" r="1.2"/><circle cx="-6.7" cy="3.3" r="1.2"/><circle cx="-3.5" cy="6.5" r="1.2"/></g></svg>
<div class="t td" style="left:1081px;top:370px;">2.19%</div>
<div class="t td" style="left:1181px;top:370px;"></div>
<div class="t td" style="left:1296px;top:370px;">122.0</div>
<div class="t td" style="left:1526px;top:370px;">122.0</div>
<div class="t td" style="left:1631px;top:370px;">120.8</div>
<div class="t td" style="left:1841px;top:370px;">5</div>
<div class="row" style="top:391px;background:#fafafa"></div>
<div class="cb" style="left:373px;top:402.8px"></div>
<svg class="ic" style="left:421.00px;top:400.50px" width="24" height="24" viewBox="0 0 24 24" ><path fill="#3d74ad" d="M11 17h2v-6h-2v6zm1-15C6.48 2 2 6.48 2 12s4.48 10 10 10 10-4.48 10-10S17.52 2 12 2zm0 18c-4.41 0-8-3.59-8-8s3.59-8 8-8 8 3.59 8 8-3.59 8-8 8zM11 9h2V7h-2v2z"/></svg>
<svg class="ic" style="left:486.00px;top:400.95px" width="24" height="24" viewBox="0 0 24 24" ><path fill="#757575" d="M12 2c-4.97 0-9 4.03-9 9 0 4.17 2.84 7.67 6.69 8.69L12 22l2.31-2.31C18.16 18.67 21 15.17 21 11c0-4.97-4.03-9-9-9zm0 2c1.66 0 3 1.34 3 3s-1.34 3-3 3-3-1.34-3-3 1.34-3 3-3zm0 14.3c-2.5 0-4.71-1.28-6-3.22.03-1.99 4-3.08 6-3.08 1.99 0 5.97 1.09 6 3.08-1.29 1.94-3.5 3.22-6 3.22z"/></svg>
<div class="t td" style="left:621px;top:410px;">3</div>
<div class="t td" style="left:681px;top:410px;">std 50ppb</div>
<div class="t td" style="left:781px;top:410px;">ok</div>
<div class="t td" style="left:881px;top:410px;">97.75%</div>
<svg class="ic" style="left:981.00px;top:400.70px" width="24" height="24" viewBox="0 0 24 24" ><path fill="#bdbdbd" d="M9 16.17L4.83 12l-1.42 1.41L9 19 21 7l-1.41-1.41z"/></svg>
<svg class="ic" style="left:1010.00px;top:400.90px" width="24" height="24" viewBox="0 0 24 24" ><path fill="#bdbdbd" d="M19 6.41L17.59 5 12 10.59 6.41 5 5 6.41 10.59 12 5 17.59 6.41 19 12 13.41 17.59 19 19 17.59 13.41 12z"/></svg>
<svg class="ic" style="left:1039.40px;top:401.30px;overflow:visible" width="24" height="24" viewBox="0 0 24 24"><g transform="translate(12 12) scale(1)" fill="#bdbdbd"><path d="M-0.3 -7.3A7.3 7.3 0 1 1 0.8 7.3" fill="none" stroke="#bdbdbd" stroke-width="2.3"/><path d="M-4.6 -5.7L0.3 -9.0L0.3 -2.6Z"/><circle cx="-7.0" cy="-1.5" r="1.2"/><circle cx="-6.7" cy="3.3" r="1.2"/><circle cx="-3.5" cy="6.5" r="1.2"/></g></svg>
<div class="t td" style="left:1081px;top:410px;"></div>
<div class="t td" style="left:1181px;top:410px;"></div>
<div class="t td" style="left:1296px;top:410px;">53.84</div>
<div class="t td" style="left:1526px;top:410px;">53.84</div>
<div class="t td" style="left:1631px;top:410px;">54.01</div>
<div class="t td" style="left:1841px;top:410px;"></div>
<div class="row" style="top:431px;background:#fff"></div>
<div class="cb" style="left:373px;top:442.8px"></div>
<svg class="ic" style="left:421.00px;top:440.50px" width="24" height="24" viewBox="0 0 24 24" ><path fill="#3d74ad" d="M11 17h2v-6h-2v6zm1-15C6.48 2 2 6.48 2 12s4.48 10 10 10 10-4.48 10-10S17.52 2 12 2zm0 18c-4.41 0-8-3.59-8-8s3.59-8 8-8 8 3.59 8 8-3.59 8-8 8zM11 9h2V7h-2v2z"/></svg>
<svg class="ic" style="left:486.00px;top:440.95px" width="24" height="24" viewBox="0 0 24 24" ><path fill="#757575" d="M12 2c-4.97 0-9 4.03-9 9 0 4.17 2.84 7.67 6.69 8.69L12 22l2.31-2.31C18.16 18.67 21 15.17 21 11c0-4.97-4.03-9-9-9zm0 2c1.66 0 3 1.34 3 3s-1.34 3-3 3-3-1.34-3-3 1.34-3 3-3zm0 14.3c-2.5 0-4.71-1.28-6-3.22.03-1.99 4-3.08 6-3.08 1.99 0 5.97 1.09 6 3.08-1.29 1.94-3.5 3.22-6 3.22z"/></svg>
<div class="t td" style="left:621px;top:450px;">2</div>
<div class="t td" style="left:681px;top:450px;">std 10ppb</div>
<div class="t td" style="left:781px;top:450px;">ok</div>
<div class="t td" style="left:881px;top:450px;">97.71%</div>
<svg class="ic" style="left:981.00px;top:440.70px" width="24" height="24" viewBox="0 0 24 24" ><path fill="#bdbdbd" d="M9 16.17L4.83 12l-1.42 1.41L9 19 21 7l-1.41-1.41z"/></svg>
<svg class="ic" style="left:1010.00px;top:440.90px" width="24" height="24" viewBox="0 0 24 24" ><path fill="#bdbdbd" d="M19 6.41L17.59 5 12 10.59 6.41 5 5 6.41 10.59 12 5 17.59 6.41 19 12 13.41 17.59 19 19 17.59 13.41 12z"/></svg>
<svg class="ic" style="left:1039.40px;top:441.30px;overflow:visible" width="24" height="24" viewBox="0 0 24 24"><g transform="translate(12 12) scale(1)" fill="#bdbdbd"><path d="M-0.3 -7.3A7.3 7.3 0 1 1 0.8 7.3" fill="none" stroke="#bdbdbd" stroke-width="2.3"/><path d="M-4.6 -5.7L0.3 -9.0L0.3 -2.6Z"/><circle cx="-7.0" cy="-1.5" r="1.2"/><circle cx="-6.7" cy="3.3" r="1.2"/><circle cx="-3.5" cy="6.5" r="1.2"/></g></svg>
<div class="t td" style="left:1081px;top:450px;"></div>
<div class="t td" style="left:1181px;top:450px;"></div>
<div class="t td" style="left:1296px;top:450px;">10.68</div>
<div class="t td" style="left:1526px;top:450px;">10.68</div>
<div class="t td" style="left:1631px;top:450px;">10.82</div>
<div class="t td" style="left:1841px;top:450px;"></div>
<div class="row" style="top:471px;background:#fafafa"></div>
<div class="cb" style="left:373px;top:482.8px"></div>
<svg class="ic" style="left:421.00px;top:480.50px" width="24" height="24" viewBox="0 0 24 24" ><path fill="#3d74ad" d="M11 17h2v-6h-2v6zm1-15C6.48 2 2 6.48 2 12s4.48 10 10 10 10-4.48 10-10S17.52 2 12 2zm0 18c-4.41 0-8-3.59-8-8s3.59-8 8-8 8 3.59 8 8-3.59 8-8 8zM11 9h2V7h-2v2z"/></svg>
<svg class="ic" style="left:486.00px;top:480.95px" width="24" height="24" viewBox="0 0 24 24" ><path fill="#757575" d="M12 2c-4.97 0-9 4.03-9 9 0 4.17 2.84 7.67 6.69 8.69L12 22l2.31-2.31C18.16 18.67 21 15.17 21 11c0-4.97-4.03-9-9-9zm0 2c1.66 0 3 1.34 3 3s-1.34 3-3 3-3-1.34-3-3 1.34-3 3-3zm0 14.3c-2.5 0-4.71-1.28-6-3.22.03-1.99 4-3.08 6-3.08 1.99 0 5.97 1.09 6 3.08-1.29 1.94-3.5 3.22-6 3.22z"/></svg>
<div class="t td" style="left:621px;top:490px;">38</div>
<div class="t td" style="left:681px;top:490px;">std 10 fin</div>
<div class="t td" style="left:781px;top:490px;">ok</div>
<div class="t td" style="left:881px;top:490px;">97.56%</div>
<svg class="ic" style="left:981.00px;top:480.70px" width="24" height="24" viewBox="0 0 24 24" ><path fill="#bdbdbd" d="M9 16.17L4.83 12l-1.42 1.41L9 19 21 7l-1.41-1.41z"/></svg>
<svg class="ic" style="left:1010.00px;top:480.90px" width="24" height="24" viewBox="0 0 24 24" ><path fill="#bdbdbd" d="M19 6.41L17.59 5 12 10.59 6.41 5 5 6.41 10.59 12 5 17.59 6.41 19 12 13.41 17.59 19 19 17.59 13.41 12z"/></svg>
<svg class="ic" style="left:1039.40px;top:481.30px;overflow:visible" width="24" height="24" viewBox="0 0 24 24"><g transform="translate(12 12) scale(1)" fill="#bdbdbd"><path d="M-0.3 -7.3A7.3 7.3 0 1 1 0.8 7.3" fill="none" stroke="#bdbdbd" stroke-width="2.3"/><path d="M-4.6 -5.7L0.3 -9.0L0.3 -2.6Z"/><circle cx="-7.0" cy="-1.5" r="1.2"/><circle cx="-6.7" cy="3.3" r="1.2"/><circle cx="-3.5" cy="6.5" r="1.2"/></g></svg>
<div class="t td" style="left:1081px;top:490px;">1.25%</div>
<div class="t td" style="left:1181px;top:490px;"></div>
<div class="t td" style="left:1296px;top:490px;">6.168</div>
<div class="t td" style="left:1526px;top:490px;">6.168</div>
<div class="t td" style="left:1631px;top:490px;">6.081</div>
<div class="t td" style="left:1841px;top:490px;">5</div>
<div class="row" style="top:511px;background:#fcefe3"></div>
<div class="cb" style="left:373px;top:522.8px"></div>
<svg class="ic" style="left:421.00px;top:520.90px" width="24" height="24" viewBox="0 0 24 24" ><path fill="#e38a17" d="M12 5.99L19.53 19H4.47L12 5.99M12 2L1 21h22L12 2zm1 14h-2v2h2v-2zm0-6h-2v4h2v-4z"/></svg>
<svg class="ic" style="left:486.00px;top:520.95px" width="24" height="24" viewBox="0 0 24 24" ><path fill="#757575" d="M12 2c-4.97 0-9 4.03-9 9 0 4.17 2.84 7.67 6.69 8.69L12 22l2.31-2.31C18.16 18.67 21 15.17 21 11c0-4.97-4.03-9-9-9zm0 2c1.66 0 3 1.34 3 3s-1.34 3-3 3-3-1.34-3-3 1.34-3 3-3zm0 14.3c-2.5 0-4.71-1.28-6-3.22.03-1.99 4-3.08 6-3.08 1.99 0 5.97 1.09 6 3.08-1.29 1.94-3.5 3.22-6 3.22z"/></svg>
<div class="t td" style="left:621px;top:530px;">37</div>
<div class="t td" style="left:681px;top:530px;">172937</div>
<div class="t td" style="left:781px;top:530px;">detected</div>
<div class="t td" style="left:881px;top:530px;">96.74%</div>
<svg class="ic" style="left:982.90px;top:519.70px;overflow:visible" width="24" height="24" viewBox="0 0 24 24" fill="none" stroke="#185a8d"><g transform="translate(12 12) scale(1)"><circle cx="0" cy="0" r="3.95" stroke-width="2.1"/><path d="M-6.9 -5.6L-3.3 -2.7M-4.3 5.9L-2.5 3.6" stroke-width="1.4"/><path d="M3.4 -2.1L6.5 -4.1" stroke-width="1.6"/><circle cx="-7.9" cy="-6.5" r="1.6" stroke-width="1.1"/><circle cx="6.5" cy="-4.1" r="1.55" fill="#185a8d" stroke="none"/><circle cx="-5.2" cy="7.0" r="1.6" stroke-width="1.1"/></g></svg>
<svg class="ic" style="left:1010.30px;top:519.30px;overflow:visible" width="24" height="24" viewBox="0 0 24 24" fill="none" stroke="#bdbdbd" stroke-width="2.2"><g transform="translate(12 12) scale(1)"><circle cx="0" cy="0" r="5.7"/><path d="M-8 7.7L8 -7.7"/></g></svg>
<svg class="ic" style="left:1039.40px;top:519.50px;overflow:visible" width="24" height="24" viewBox="0 0 24 24"><g transform="translate(12 12) scale(1)" fill="#bdbdbd"><path d="M-0.3 -7.3A7.3 7.3 0 1 1 0.8 7.3" fill="none" stroke="#bdbdbd" stroke-width="2.3"/><path d="M-4.6 -5.7L0.3 -9.0L0.3 -2.6Z"/><circle cx="-7.0" cy="-1.5" r="1.2"/><circle cx="-6.7" cy="3.3" r="1.2"/><circle cx="-3.5" cy="6.5" r="1.2"/></g></svg>
<div class="t td" style="left:1081px;top:530px;">6.82%</div>
<div class="t td" style="left:1181px;top:530px;">0.0159</div>
<div class="t td lnk" style="left:1296px;top:530px;">15.87</div>
<div class="t td lnk" style="left:1526px;top:530px;">15.87</div>
<div class="t td lnk" style="left:1631px;top:530px;">14.68</div>
<div class="t td" style="left:1841px;top:530px;">5</div>
<div class="row" style="top:551px;background:#fafafa"></div>
<div class="cb" style="left:373px;top:562.8px"></div>
<svg class="ic" style="left:421.00px;top:560.90px" width="24" height="24" viewBox="0 0 24 24" ><path fill="#e38a17" d="M12 5.99L19.53 19H4.47L12 5.99M12 2L1 21h22L12 2zm1 14h-2v2h2v-2zm0-6h-2v4h2v-4z"/></svg>
<svg class="ic" style="left:486.00px;top:560.95px" width="24" height="24" viewBox="0 0 24 24" ><path fill="#757575" d="M12 2c-4.97 0-9 4.03-9 9 0 4.17 2.84 7.67 6.69 8.69L12 22l2.31-2.31C18.16 18.67 21 15.17 21 11c0-4.97-4.03-9-9-9zm0 2c1.66 0 3 1.34 3 3s-1.34 3-3 3-3-1.34-3-3 1.34-3 3-3zm0 14.3c-2.5 0-4.71-1.28-6-3.22.03-1.99 4-3.08 6-3.08 1.99 0 5.97 1.09 6 3.08-1.29 1.94-3.5 3.22-6 3.22z"/></svg>
<div class="t td" style="left:621px;top:570px;">1</div>
<div class="t td" style="left:681px;top:570px;">std 5ppb</div>
<div class="t td" style="left:781px;top:570px;">ok</div>
<div class="t td" style="left:881px;top:570px;">92.84%</div>
<svg class="ic" style="left:981.00px;top:560.70px" width="24" height="24" viewBox="0 0 24 24" ><path fill="#bdbdbd" d="M9 16.17L4.83 12l-1.42 1.41L9 19 21 7l-1.41-1.41z"/></svg>
<svg class="ic" style="left:1010.00px;top:560.90px" width="24" height="24" viewBox="0 0 24 24" ><path fill="#bdbdbd" d="M19 6.41L17.59 5 12 10.59 6.41 5 5 6.41 10.59 12 5 17.59 6.41 19 12 13.41 17.59 19 19 17.59 13.41 12z"/></svg>
<svg class="ic" style="left:1039.40px;top:561.30px;overflow:visible" width="24" height="24" viewBox="0 0 24 24"><g transform="translate(12 12) scale(1)" fill="#bdbdbd"><path d="M-0.3 -7.3A7.3 7.3 0 1 1 0.8 7.3" fill="none" stroke="#bdbdbd" stroke-width="2.3"/><path d="M-4.6 -5.7L0.3 -9.0L0.3 -2.6Z"/><circle cx="-7.0" cy="-1.5" r="1.2"/><circle cx="-6.7" cy="3.3" r="1.2"/><circle cx="-3.5" cy="6.5" r="1.2"/></g></svg>
<div class="t td" style="left:1081px;top:570px;"></div>
<div class="t td" style="left:1181px;top:570px;"></div>
<div class="t td" style="left:1296px;top:570px;">3.829</div>
<div class="t td" style="left:1526px;top:570px;">3.829</div>
<div class="t td" style="left:1631px;top:570px;">3.716</div>
<div class="t td" style="left:1841px;top:570px;"></div>
<div class="row" style="top:591px;background:#fff"></div>
<div class="cb" style="left:373px;top:602.8px"></div>
<svg class="ic" style="left:421.00px;top:600.90px" width="24" height="24" viewBox="0 0 24 24" ><path fill="#e38a17" d="M12 5.99L19.53 19H4.47L12 5.99M12 2L1 21h22L12 2zm1 14h-2v2h2v-2zm0-6h-2v4h2v-4z"/></svg>
<svg class="ic" style="left:486.00px;top:600.95px" width="24" height="24" viewBox="0 0 24 24" ><path fill="#757575" d="M12 2c-4.97 0-9 4.03-9 9 0 4.17 2.84 7.67 6.69 8.69L12 22l2.31-2.31C18.16 18.67 21 15.17 21 11c0-4.97-4.03-9-9-9zm0 2c1.66 0 3 1.34 3 3s-1.34 3-3 3-3-1.34-3-3 1.34-3 3-3zm0 14.3c-2.5 0-4.71-1.28-6-3.22.03-1.99 4-3.08 6-3.08 1.99 0 5.97 1.09 6 3.08-1.29 1.94-3.5 3.22-6 3.22z"/></svg>
<div class="t td" style="left:621px;top:610px;">36</div>
<div class="t td" style="left:681px;top:610px;">172936</div>
<div class="t td" style="left:781px;top:610px;">excluded</div>
<div class="t td" style="left:881px;top:610px;">5.69%</div>
<svg class="ic" style="left:982.90px;top:599.70px;overflow:visible" width="24" height="24" viewBox="0 0 24 24" fill="none" stroke="#bdbdbd"><g transform="translate(12 12) scale(1)"><circle cx="0" cy="0" r="3.95" stroke-width="2.1"/><path d="M-6.9 -5.6L-3.3 -2.7M-4.3 5.9L-2.5 3.6" stroke-width="1.4"/><path d="M3.4 -2.1L6.5 -4.1" stroke-width="1.6"/><circle cx="-7.9" cy="-6.5" r="1.6" stroke-width="1.1"/><circle cx="6.5" cy="-4.1" r="1.55" fill="#bdbdbd" stroke="none"/><circle cx="-5.2" cy="7.0" r="1.6" stroke-width="1.1"/></g></svg>
<svg class="ic" style="left:1010.30px;top:599.30px;overflow:visible" width="24" height="24" viewBox="0 0 24 24" fill="none" stroke="#bdbdbd" stroke-width="2.2"><g transform="translate(12 12) scale(1)"><circle cx="0" cy="0" r="5.7"/><path d="M-8 7.7L8 -7.7"/></g></svg>
<svg class="ic" style="left:1039.40px;top:599.50px;overflow:visible" width="24" height="24" viewBox="0 0 24 24"><g transform="translate(12 12) scale(1)" fill="#bdbdbd"><path d="M-0.3 -7.3A7.3 7.3 0 1 1 0.8 7.3" fill="none" stroke="#bdbdbd" stroke-width="2.3"/><path d="M-4.6 -5.7L0.3 -9.0L0.3 -2.6Z"/><circle cx="-7.0" cy="-1.5" r="1.2"/><circle cx="-6.7" cy="3.3" r="1.2"/><circle cx="-3.5" cy="6.5" r="1.2"/></g></svg>
<div class="t td" style="left:1081px;top:610px;">14.96%</div>
<div class="t td" style="left:1181px;top:610px;"></div>
<div class="t td" style="left:1296px;top:610px;"></div>
<div class="t td" style="left:1526px;top:610px;"></div>
<div class="t td" style="left:1631px;top:610px;"></div>
<div class="t td" style="left:1841px;top:610px;">5</div>
<svg class="ic" style="left:544px;top:518.800px" width="24" height="24" viewBox="-12 -12 24 24"><defs><clipPath id="hc"><circle r="8.700"/></clipPath></defs><circle r="10" fill="#6b6864"/><g clip-path="url(#hc)"><g transform="translate(.2 .8) rotate(33) scale(.67) translate(-12 -12)"><path fill="#fdfbf8" d="M23 5.500V20c0 2.200-1.800 4-4 4h-7.300c-1.080 0-2.100-.43-2.850-1.190L1 14.830s1.260-1.230 1.300-1.250c.22-.19.49-.29.79-.29.22 0 .42.060.6.16.040.010 4.310 2.460 4.310 2.460V4c0-.83.67-1.500 1.500-1.500S11 3.170 11 4v7h1V1.500c0-.83.67-1.500 1.500-1.500S15 .67 15 1.500V11h1V2.500c0-.83.67-1.500 1.500-1.500s1.500.67 1.500 1.500V11h1V5.500c0-.83.67-1.500 1.500-1.500s1.500.67 1.500 1.500z"/></g></g></svg>
<div class="abs" style="left:1869px;top:231px;width:19px;height:405px;background:#fff"></div>
<div class="abs" style="left:1869px;top:231px;width:10px;height:103px;border-radius:4px;background:#b3b3b3"></div>
<div class="abs" style="left:361px;top:631px;width:1508px;height:6px;background:#fafafa"></div>
<div class="abs" style="left:361px;top:637px;width:766px;height:10px;border-radius:4.500px;background:#b3b3b3"></div>
<div class="abs" style="left:1121.200px;top:662.100px;width:5.700px;height:5.700px;border-radius:3px;background:#ababab"></div>
<div class="abs" style="left:1287px;top:911.500px;width:5px;height:5px;border-radius:3px;background:#b0b0b0"></div>
<div class="card" style="left:351px;top:672px;width:932px;height:470px"></div>
<div class="abs" style="left:377.250px;top:702px;width:1.600px;height:411px;background:#a0bcd9"></div>
<div class="abs" style="left:372px;top:980px;width:12px;height:12px;border-radius:6px;background:#185a8d"></div>
<div class="abs" style="left:1265px;top:715px;width:10px;height:64px;border-radius:4px;background:#b3b3b3"></div>
<div class="abs" style="left:685px;top:904px;width:284px;height:227px;background:#fcefe3"></div>
<svg class="ic" width="0" height="0" style="left:0;top:0"><defs><pattern id="hatch" width="2" height="4" patternUnits="userSpaceOnUse"><rect x="0" y="0" width="1" height="4" fill="#e8a96e"/></pattern></defs></svg>
<svg class="ic" style="left:385px;top:677px;overflow:visible" width="284" height="227" viewBox="0 0 284 227"><path d="M74.5 34.0V196.0M128.5 34.0V196.0M182.5 34.0V196.0M236.5 34.0V196.0M288.5 34.0V196.0M70.0 34.5H288.5M70.0 74.5H288.5M70.0 135.5H288.5M70.0 196.5H288.5M70.0 34.5H288.5" stroke="#dedede" stroke-width="1" fill="none"/><path d="M69.5 34.0V196.0M60.0 34.5H70.0M60.0 74.5H70.0M60.0 135.5H70.0M60.0 196.5H70.0M60.0 34.5H70.0" stroke="#cfcfcf" stroke-width="1" fill="none"/><path d="M74.5 34.0V196.0" stroke="#c4c4c4" stroke-width="1" fill="none"/><g font-size="12" fill="#666" text-anchor="end"><text x="59.0" y="38.4">5.3e+6</text><text x="59.0" y="78.1">4.0e+6</text><text x="59.0" y="139.3">2.0e+6</text><text x="59.0" y="200.4">0.0</text></g><g font-size="12" fill="#666" text-anchor="middle"><text x="70.0" y="217.0">9.0</text><text x="74.5" y="217.0">9.0</text><text x="128.5" y="217.0">9.2</text><text x="182.5" y="217.0">9.4</text><text x="236.5" y="217.0">9.6</text><text x="288.0" y="217.0">9.8</text></g><text x="158.0" y="21.0" font-size="12.3" font-weight="bold" fill="#555" text-anchor="middle">pbd</text><path d="M183.0 34.0V196.0" stroke="#f6c79a" stroke-width="1.7"/><path d="M188.0 34.0V196.0" stroke="#a4c1e0" stroke-width="1.7"/><text x="188.5" y="46.5" font-size="10.5" fill="#8db2d8" text-anchor="middle">RT Cor</text><path d="M155.0 196.0L155.4 195.9 L156.1 195.9 L156.7 195.9 L157.4 195.9 L158.1 195.9 L158.7 195.9 L159.4 195.8 L160.0 195.7 L160.7 195.5 L161.4 195.2 L162.0 194.8 L162.7 194.3 L163.4 193.5 L164.0 192.5 L164.7 191.2 L165.3 189.6 L166.0 187.5 L166.7 185.0 L167.3 182.0 L168.0 178.5 L168.7 174.4 L169.3 169.7 L170.0 164.6 L170.6 159.0 L171.3 152.9 L172.0 146.6 L172.6 140.0 L173.3 133.3 L174.0 126.6 L174.6 120.1 L175.3 113.7 L175.9 107.7 L176.6 102.0 L177.3 96.9 L177.9 92.3 L178.6 88.2 L179.3 84.7 L179.9 81.7 L180.6 79.4 L181.2 77.5 L181.9 76.1 L182.6 75.0 L183.2 74.4 L183.9 74.0 L184.5 73.8 L185.2 73.7 L185.9 73.8 L186.5 74.5 L187.2 76.0 L187.9 78.3 L188.5 81.1 L189.2 84.4 L189.8 87.9 L190.5 91.6 L191.2 95.4 L191.8 99.2 L192.5 103.0 L193.2 106.7 L193.8 110.4 L194.5 114.0 L195.1 117.4 L195.8 120.8 L196.5 124.1 L197.1 127.2 L197.8 130.2 L198.5 133.1 L199.1 135.9 L199.8 138.6 L200.4 141.1 L201.1 143.6 L201.8 146.0 L202.4 148.2 L203.1 150.4 L203.7 152.4 L204.4 154.4 L205.1 156.3 L205.7 158.1 L206.4 159.8 L207.1 161.5 L207.7 163.1 L208.4 164.6 L209.0 166.0 L209.7 167.4 L210.4 168.7 L211.0 169.9 L211.7 171.1 L212.4 172.3 L213.0 173.4 L213.7 174.4 L214.3 175.4 L215.0 176.4 L215.7 177.3 L216.3 178.1 L217.0 178.9 L217.7 179.7 L218.3 180.5 L219.0 181.2 L219.6 181.9 L220.3 182.5 L221.0 183.2 L221.6 183.7 L222.3 184.3 L223.0 184.9 L223.6 185.4 L224.3 185.9 L224.9 186.3 L225.6 186.8 L226.3 187.2 L226.9 187.6 L227.6 188.0 L228.2 188.4 L228.9 188.7 L229.6 189.1 L230.2 189.4 L230.9 189.7 L231.6 190.0 L232.2 190.3 L232.9 190.5 L233.5 190.8 L234.2 191.0 L234.9 191.2 L235.5 191.5 L236.2 191.7 L236.9 191.9 L237.5 192.1 L238.2 192.3 L238.8 192.4 L239.5 192.6 L240.2 192.7 L240.8 192.9 L241.5 193.0 L242.2 193.2 L242.8 193.3 L243.5 193.4 L244.1 193.6 L244.8 193.7 L245.5 193.8 L246.1 193.9 L246.8 194.0 L247.4 194.1 L248.1 194.2 L248.8 194.2 L249.4 194.3 L250.1 194.4 L250.8 194.5 L251.4 194.5 L252.1 194.6 L252.7 194.7 L253.4 194.7 L254.1 194.8 L254.7 194.9 L255.4 194.9 L256.1 195.0 L256.7 195.0 L257.4 195.1 L258.0 195.1 L258.7 195.1 L259.4 195.2 L260.0 195.2 L260.7 195.3 L261.4 195.3 L262.0 195.3 L262.7 195.4 L263.3 195.4 L264.0 195.4 L264.7 195.4 L265.3 195.5 L266.0 195.5 L266.7 195.5 L267.3 195.5 L268.0 195.6 L268.6 195.6 L268.7 196.0Z" fill="#eeb27a" fill-opacity=".5"/><path d="M155.0 196.0L155.4 195.9 L156.1 195.9 L156.7 195.9 L157.4 195.9 L158.1 195.9 L158.7 195.9 L159.4 195.8 L160.0 195.7 L160.7 195.5 L161.4 195.2 L162.0 194.8 L162.7 194.3 L163.4 193.5 L164.0 192.5 L164.7 191.2 L165.3 189.6 L166.0 187.5 L166.7 185.0 L167.3 182.0 L168.0 178.5 L168.7 174.4 L169.3 169.7 L170.0 164.6 L170.6 159.0 L171.3 152.9 L172.0 146.6 L172.6 140.0 L173.3 133.3 L174.0 126.6 L174.6 120.1 L175.3 113.7 L175.9 107.7 L176.6 102.0 L177.3 96.9 L177.9 92.3 L178.6 88.2 L179.3 84.7 L179.9 81.7 L180.6 79.4 L181.2 77.5 L181.9 76.1 L182.6 75.0 L183.2 74.4 L183.9 74.0 L184.5 73.8 L185.2 73.7 L185.9 73.8 L186.5 74.5 L187.2 76.0 L187.9 78.3 L188.5 81.1 L189.2 84.4 L189.8 87.9 L190.5 91.6 L191.2 95.4 L191.8 99.2 L192.5 103.0 L193.2 106.7 L193.8 110.4 L194.5 114.0 L195.1 117.4 L195.8 120.8 L196.5 124.1 L197.1 127.2 L197.8 130.2 L198.5 133.1 L199.1 135.9 L199.8 138.6 L200.4 141.1 L201.1 143.6 L201.8 146.0 L202.4 148.2 L203.1 150.4 L203.7 152.4 L204.4 154.4 L205.1 156.3 L205.7 158.1 L206.4 159.8 L207.1 161.5 L207.7 163.1 L208.4 164.6 L209.0 166.0 L209.7 167.4 L210.4 168.7 L211.0 169.9 L211.7 171.1 L212.4 172.3 L213.0 173.4 L213.7 174.4 L214.3 175.4 L215.0 176.4 L215.7 177.3 L216.3 178.1 L217.0 178.9 L217.7 179.7 L218.3 180.5 L219.0 181.2 L219.6 181.9 L220.3 182.5 L221.0 183.2 L221.6 183.7 L222.3 184.3 L223.0 184.9 L223.6 185.4 L224.3 185.9 L224.9 186.3 L225.6 186.8 L226.3 187.2 L226.9 187.6 L227.6 188.0 L228.2 188.4 L228.9 188.7 L229.6 189.1 L230.2 189.4 L230.9 189.7 L231.6 190.0 L232.2 190.3 L232.9 190.5 L233.5 190.8 L234.2 191.0 L234.9 191.2 L235.5 191.5 L236.2 191.7 L236.9 191.9 L237.5 192.1 L238.2 192.3 L238.8 192.4 L239.5 192.6 L240.2 192.7 L240.8 192.9 L241.5 193.0 L242.2 193.2 L242.8 193.3 L243.5 193.4 L244.1 193.6 L244.8 193.7 L245.5 193.8 L246.1 193.9 L246.8 194.0 L247.4 194.1 L248.1 194.2 L248.8 194.2 L249.4 194.3 L250.1 194.4 L250.8 194.5 L251.4 194.5 L252.1 194.6 L252.7 194.7 L253.4 194.7 L254.1 194.8 L254.7 194.9 L255.4 194.9 L256.1 195.0 L256.7 195.0 L257.4 195.1 L258.0 195.1 L258.7 195.1 L259.4 195.2 L260.0 195.2 L260.7 195.3 L261.4 195.3 L262.0 195.3 L262.7 195.4 L263.3 195.4 L264.0 195.4 L264.7 195.4 L265.3 195.5 L266.0 195.5 L266.7 195.5 L267.3 195.5 L268.0 195.6 L268.6 195.6 L268.7 196.0Z" fill="url(#hatch)" fill-opacity=".16"/><path d="M183.0 74.6V196.0" stroke="#eaa96d" stroke-width="1.5"/><path d="M188.0 78.8V196.0" stroke="#7b858f" stroke-width="1.5"/><path d="M70.0 196.0 L70.7 196.0 L71.3 196.0 L72.0 196.0 L72.6 196.0 L73.3 196.0 L74.0 196.0 L74.6 196.0 L75.3 196.0 L76.0 196.0 L76.6 196.0 L77.3 196.0 L77.9 196.0 L78.6 196.0 L79.3 196.0 L79.9 196.0 L80.6 196.0 L81.3 196.0 L81.9 196.0 L82.6 196.0 L83.2 196.0 L83.9 196.0 L84.6 196.0 L85.2 196.0 L85.9 196.0 L86.6 196.0 L87.2 196.0 L87.9 196.0 L88.5 196.0 L89.2 196.0 L89.9 196.0 L90.5 196.0 L91.2 196.0 L91.9 196.0 L92.5 196.0 L93.2 196.0 L93.8 196.0 L94.5 196.0 L95.2 196.0 L95.8 196.0 L96.5 196.0 L97.1 196.0 L97.8 196.0 L98.5 196.0 L99.1 196.0 L99.8 196.0 L100.5 196.0 L101.1 196.0 L101.8 196.0 L102.4 196.0 L103.1 196.0 L103.8 196.0 L104.4 196.0 L105.1 196.0 L105.8 196.0 L106.4 196.0 L107.1 196.0 L107.7 196.0 L108.4 196.0 L109.1 196.0 L109.7 196.0 L110.4 196.0 L111.1 196.0 L111.7 196.0 L112.4 196.0 L113.0 195.9 L113.7 195.9 L114.4 195.9 L115.0 195.9 L115.7 195.9 L116.3 195.8 L117.0 195.8 L117.7 195.8 L118.3 195.7 L119.0 195.7 L119.7 195.6 L120.3 195.6 L121.0 195.5 L121.6 195.4 L122.3 195.3 L123.0 195.3 L123.6 195.2 L124.3 195.1 L125.0 195.0 L125.6 194.9 L126.3 194.7 L126.9 194.6 L127.6 194.5 L128.3 194.4 L128.9 194.3 L129.6 194.2 L130.3 194.1 L130.9 194.0 L131.6 193.9 L132.2 193.8 L132.9 193.8 L133.6 193.7 L134.2 193.7 L134.9 193.7 L135.6 193.7 L136.2 193.7 L136.9 193.7 L137.5 193.8 L138.2 193.8 L138.9 193.9 L139.5 194.0 L140.2 194.1 L140.8 194.2 L141.5 194.3 L142.2 194.4 L142.8 194.5 L143.5 194.6 L144.2 194.7 L144.8 194.9 L145.5 195.0 L146.1 195.1 L146.8 195.2 L147.5 195.3 L148.1 195.4 L148.8 195.4 L149.5 195.5 L150.1 195.6 L150.8 195.6 L151.4 195.7 L152.1 195.7 L152.8 195.8 L153.4 195.8 L154.1 195.8 L154.8 195.9 L155.4 195.9 L156.1 195.9 L156.7 195.8 L157.4 195.8 L158.1 195.7 L158.7 195.6 L159.4 195.4 L160.0 195.0 L160.7 194.6 L161.4 194.0 L162.0 193.2 L162.7 192.1 L163.4 190.6 L164.0 188.8 L164.7 186.5 L165.3 183.7 L166.0 180.4 L166.7 176.4 L167.3 171.8 L168.0 166.6 L168.7 160.9 L169.3 154.5 L170.0 147.6 L170.6 140.3 L171.3 132.7 L172.0 124.9 L172.6 117.0 L173.3 109.2 L174.0 101.5 L174.6 94.1 L175.3 87.1 L175.9 80.6 L176.6 74.7 L177.3 69.4 L177.9 64.7 L178.6 60.6 L179.3 57.2 L179.9 54.4 L180.6 52.3 L181.2 50.6 L181.9 49.4 L182.6 48.6 L183.2 48.1 L183.9 47.9 L184.5 47.8 L185.2 47.8 L185.9 48.4 L186.5 50.0 L187.2 52.4 L187.9 55.6 L188.5 59.3 L189.2 63.3 L189.8 67.6 L190.5 72.1 L191.2 76.5 L191.8 81.0 L192.5 85.5 L193.2 89.8 L193.8 94.1 L194.5 98.3 L195.1 102.3 L195.8 106.2 L196.5 110.0 L197.1 113.6 L197.8 117.2 L198.5 120.5 L199.1 123.8 L199.8 126.9 L200.4 129.9 L201.1 132.8 L201.8 135.6 L202.4 138.2 L203.1 140.7 L203.7 143.2 L204.4 145.5 L205.1 147.7 L205.7 149.9 L206.4 151.9 L207.1 153.9 L207.7 155.7 L208.4 157.5 L209.0 159.2 L209.7 160.9 L210.4 162.4 L211.0 163.9 L211.7 165.4 L212.4 166.7 L213.0 168.0 L213.7 169.3 L214.3 170.5 L215.0 171.6 L215.7 172.7 L216.3 173.7 L217.0 174.7 L217.7 175.7 L218.3 176.6 L219.0 177.5 L219.6 178.3 L220.3 179.1 L221.0 179.9 L221.6 180.6 L222.3 181.3 L223.0 181.9 L223.6 182.6 L224.3 183.2 L224.9 183.7 L225.6 184.3 L226.3 184.8 L226.9 185.3 L227.6 185.8 L228.2 186.3 L228.9 186.7 L229.6 187.1 L230.2 187.5 L230.9 187.9 L231.6 188.3 L232.2 188.6 L232.9 188.9 L233.5 189.3 L234.2 189.6 L234.9 189.9 L235.5 190.1 L236.2 190.4 L236.9 190.6 L237.5 190.9 L238.2 191.1 L238.8 191.3 L239.5 191.5 L240.2 191.7 L240.8 191.9 L241.5 192.1 L242.2 192.3 L242.8 192.5 L243.5 192.6 L244.1 192.8 L244.8 192.9 L245.5 193.1 L246.1 193.2 L246.8 193.3 L247.4 193.4 L248.1 193.6 L248.8 193.7 L249.4 193.8 L250.1 193.9 L250.8 194.0 L251.4 194.1 L252.1 194.1 L252.7 194.2 L253.4 194.3 L254.1 194.4 L254.7 194.5 L255.4 194.5 L256.1 194.6 L256.7 194.7 L257.4 194.7 L258.0 194.8 L258.7 194.8 L259.4 194.9 L260.0 194.9 L260.7 195.0 L261.4 195.0 L262.0 195.1 L262.7 195.1 L263.3 195.2 L264.0 195.2 L264.7 195.2 L265.3 195.3 L266.0 195.3 L266.7 195.3 L267.3 195.4 L268.0 195.4 L268.6 195.4 L269.3 195.4 L270.0 195.5 L270.6 195.5 L271.3 195.5 L271.9 195.5 L272.6 195.6 L273.3 195.6 L273.9 195.6 L274.6 195.6 L275.3 195.6 L275.9 195.6 L276.6 195.7 L277.2 195.7 L277.9 195.7 L278.6 195.7 L279.2 195.7 L279.9 195.7 L280.6 195.7 L281.2 195.8 L281.9 195.8 L282.5 195.8 L283.2 195.8 L283.9 195.8 L284.5 195.8 L285.2 195.8 L285.9 195.8 L286.5 195.8 L287.2 195.8 L287.8 195.8 L288.5 195.9" fill="none" stroke="#7fd07f" stroke-width="1"/><path d="M70.0 196.0 L70.7 196.0 L71.3 196.0 L72.0 196.0 L72.6 196.0 L73.3 196.0 L74.0 196.0 L74.6 196.0 L75.3 196.0 L76.0 196.0 L76.6 196.0 L77.3 196.0 L77.9 196.0 L78.6 196.0 L79.3 196.0 L79.9 196.0 L80.6 196.0 L81.3 196.0 L81.9 196.0 L82.6 196.0 L83.2 196.0 L83.9 196.0 L84.6 196.0 L85.2 196.0 L85.9 196.0 L86.6 196.0 L87.2 196.0 L87.9 196.0 L88.5 196.0 L89.2 196.0 L89.9 196.0 L90.5 196.0 L91.2 196.0 L91.9 196.0 L92.5 196.0 L93.2 196.0 L93.8 196.0 L94.5 196.0 L95.2 196.0 L95.8 196.0 L96.5 196.0 L97.1 196.0 L97.8 196.0 L98.5 196.0 L99.1 196.0 L99.8 196.0 L100.5 196.0 L101.1 196.0 L101.8 196.0 L102.4 196.0 L103.1 196.0 L103.8 196.0 L104.4 196.0 L105.1 196.0 L105.8 196.0 L106.4 196.0 L107.1 196.0 L107.7 196.0 L108.4 196.0 L109.1 196.0 L109.7 196.0 L110.4 196.0 L111.1 196.0 L111.7 196.0 L112.4 196.0 L113.0 196.0 L113.7 196.0 L114.4 195.9 L115.0 195.9 L115.7 195.9 L116.3 195.9 L117.0 195.9 L117.7 195.9 L118.3 195.8 L119.0 195.8 L119.7 195.8 L120.3 195.7 L121.0 195.7 L121.6 195.6 L122.3 195.6 L123.0 195.5 L123.6 195.5 L124.3 195.4 L125.0 195.3 L125.6 195.3 L126.3 195.2 L126.9 195.1 L127.6 195.1 L128.3 195.0 L128.9 194.9 L129.6 194.8 L130.3 194.8 L130.9 194.7 L131.6 194.7 L132.2 194.6 L132.9 194.6 L133.6 194.6 L134.2 194.5 L134.9 194.5 L135.6 194.5 L136.2 194.5 L136.9 194.6 L137.5 194.6 L138.2 194.6 L138.9 194.7 L139.5 194.7 L140.2 194.8 L140.8 194.8 L141.5 194.9 L142.2 195.0 L142.8 195.1 L143.5 195.1 L144.2 195.2 L144.8 195.3 L145.5 195.3 L146.1 195.4 L146.8 195.5 L147.5 195.5 L148.1 195.6 L148.8 195.6 L149.5 195.7 L150.1 195.7 L150.8 195.8 L151.4 195.8 L152.1 195.8 L152.8 195.9 L153.4 195.9 L154.1 195.9 L154.8 195.9 L155.4 195.9 L156.1 195.9 L156.7 195.9 L157.4 195.9 L158.1 195.9 L158.7 195.9 L159.4 195.8 L160.0 195.7 L160.7 195.5 L161.4 195.2 L162.0 194.8 L162.7 194.3 L163.4 193.5 L164.0 192.5 L164.7 191.2 L165.3 189.6 L166.0 187.5 L166.7 185.0 L167.3 182.0 L168.0 178.5 L168.7 174.4 L169.3 169.7 L170.0 164.6 L170.6 159.0 L171.3 152.9 L172.0 146.6 L172.6 140.0 L173.3 133.3 L174.0 126.6 L174.6 120.1 L175.3 113.7 L175.9 107.7 L176.6 102.0 L177.3 96.9 L177.9 92.3 L178.6 88.2 L179.3 84.7 L179.9 81.7 L180.6 79.4 L181.2 77.5 L181.9 76.1 L182.6 75.0 L183.2 74.4 L183.9 74.0 L184.5 73.8 L185.2 73.7 L185.9 73.8 L186.5 74.5 L187.2 76.0 L187.9 78.3 L188.5 81.1 L189.2 84.4 L189.8 87.9 L190.5 91.6 L191.2 95.4 L191.8 99.2 L192.5 103.0 L193.2 106.7 L193.8 110.4 L194.5 114.0 L195.1 117.4 L195.8 120.8 L196.5 124.1 L197.1 127.2 L197.8 130.2 L198.5 133.1 L199.1 135.9 L199.8 138.6 L200.4 141.1 L201.1 143.6 L201.8 146.0 L202.4 148.2 L203.1 150.4 L203.7 152.4 L204.4 154.4 L205.1 156.3 L205.7 158.1 L206.4 159.8 L207.1 161.5 L207.7 163.1 L208.4 164.6 L209.0 166.0 L209.7 167.4 L210.4 168.7 L211.0 169.9 L211.7 171.1 L212.4 172.3 L213.0 173.4 L213.7 174.4 L214.3 175.4 L215.0 176.4 L215.7 177.3 L216.3 178.1 L217.0 178.9 L217.7 179.7 L218.3 180.5 L219.0 181.2 L219.6 181.9 L220.3 182.5 L221.0 183.2 L221.6 183.7 L222.3 184.3 L223.0 184.9 L223.6 185.4 L224.3 185.9 L224.9 186.3 L225.6 186.8 L226.3 187.2 L226.9 187.6 L227.6 188.0 L228.2 188.4 L228.9 188.7 L229.6 189.1 L230.2 189.4 L230.9 189.7 L231.6 190.0 L232.2 190.3 L232.9 190.5 L233.5 190.8 L234.2 191.0 L234.9 191.2 L235.5 191.5 L236.2 191.7 L236.9 191.9 L237.5 192.1 L238.2 192.3 L238.8 192.4 L239.5 192.6 L240.2 192.7 L240.8 192.9 L241.5 193.0 L242.2 193.2 L242.8 193.3 L243.5 193.4 L244.1 193.6 L244.8 193.7 L245.5 193.8 L246.1 193.9 L246.8 194.0 L247.4 194.1 L248.1 194.2 L248.8 194.2 L249.4 194.3 L250.1 194.4 L250.8 194.5 L251.4 194.5 L252.1 194.6 L252.7 194.7 L253.4 194.7 L254.1 194.8 L254.7 194.9 L255.4 194.9 L256.1 195.0 L256.7 195.0 L257.4 195.1 L258.0 195.1 L258.7 195.1 L259.4 195.2 L260.0 195.2 L260.7 195.3 L261.4 195.3 L262.0 195.3 L262.7 195.4 L263.3 195.4 L264.0 195.4 L264.7 195.4 L265.3 195.5 L266.0 195.5 L266.7 195.5 L267.3 195.5 L268.0 195.6 L268.6 195.6 L269.3 195.6 L270.0 195.6 L270.6 195.6 L271.3 195.7 L271.9 195.7 L272.6 195.7 L273.3 195.7 L273.9 195.7 L274.6 195.7 L275.3 195.7 L275.9 195.8 L276.6 195.8 L277.2 195.8 L277.9 195.8 L278.6 195.8 L279.2 195.8 L279.9 195.8 L280.6 195.8 L281.2 195.8 L281.9 195.8 L282.5 195.8 L283.2 195.9 L283.9 195.9 L284.5 195.9 L285.2 195.9 L285.9 195.9 L286.5 195.9 L287.2 195.9 L287.8 195.9 L288.5 195.9" fill="none" stroke="#5d86ab" stroke-width="1"/><text x="183.5" y="188.5" font-size="10.5" font-weight="bold" fill="#e09540" text-anchor="middle">RT Cal</text><path d="M149.0 199.0L155.0 189.0L161.0 199.0Z" fill="#e2923c"/><path d="M262.7 199.0L268.7 189.0L274.7 199.0Z" fill="#e2923c"/><ellipse cx="78.5" cy="47.9" rx="6.1" ry="7.4" fill="none" stroke="#1f5f94" stroke-width="1.3"/><text x="78.3" y="51.8" font-size="10.8" fill="#1f5f94" stroke="#1f5f94" stroke-width=".3" text-anchor="middle">1</text><text x="90.0" y="52.0" font-size="11.4" font-weight="bold" fill="#1f5f94">Q: 374.3 &gt; 302.15</text><path d="M190.8 52.2l-4.4 0l4.4 -7.4l4.4 7.4z" fill="#185a8d"/><ellipse cx="78.5" cy="64.2" rx="6.1" ry="7.4" fill="none" stroke="#4fc04f" stroke-width="1.3"/><text x="78.3" y="68.1" font-size="10.8" fill="#4fc04f" stroke="#4fc04f" stroke-width=".3" text-anchor="middle">2</text><text x="90.0" y="68.0" font-size="10.85" fill="#4fc04f">Q: 374.3 &gt; 216.1</text><g transform="translate(259.0,39.5) scale(1)"><path fill="#e38a17" d="M12 5.99L19.53 19H4.47L12 5.99M12 2L1 21h22L12 2zm1 14h-2v2h2v-2zm0-6h-2v4h2v-4z"/></g></svg>
<svg class="ic" style="left:669px;top:677px;overflow:visible" width="284" height="227" viewBox="0 0 284 227"><path d="M74.5 34.0V196.0M128.5 34.0V196.0M182.5 34.0V196.0M236.5 34.0V196.0M288.5 34.0V196.0M70.0 34.5H288.5M70.0 49.5H288.5M70.0 122.5H288.5M70.0 196.5H288.5M70.0 34.5H288.5" stroke="#dedede" stroke-width="1" fill="none"/><path d="M69.5 34.0V196.0M60.0 34.5H70.0M60.0 49.5H70.0M60.0 122.5H70.0M60.0 196.5H70.0M60.0 34.5H70.0" stroke="#cfcfcf" stroke-width="1" fill="none"/><path d="M74.5 34.0V196.0" stroke="#c4c4c4" stroke-width="1" fill="none"/><g font-size="12" fill="#666" text-anchor="end"><text x="59.0" y="38.4">2.2e+6</text><text x="59.0" y="53.1">2.0e+6</text><text x="59.0" y="126.8">1.0e+6</text><text x="59.0" y="200.4">0.0</text></g><g font-size="12" fill="#666" text-anchor="middle"><text x="70.0" y="217.0">9.0</text><text x="74.5" y="217.0">9.0</text><text x="128.5" y="217.0">9.2</text><text x="182.5" y="217.0">9.4</text><text x="236.5" y="217.0">9.6</text><text x="288.0" y="217.0">9.8</text></g><text x="158.0" y="21.0" font-size="12.3" font-weight="bold" fill="#555" text-anchor="middle">std 50ppb</text><path d="M182.8 34.0V196.0" stroke="#f6c79a" stroke-width="1.7"/><path d="M187.6 34.0V196.0" stroke="#a4c1e0" stroke-width="1.7"/><text x="188.1" y="46.5" font-size="10.5" fill="#8db2d8" text-anchor="middle">RT Cor</text><path d="M154.8 196.0L155.4 195.9 L156.1 195.9 L156.7 195.9 L157.4 195.9 L158.1 195.8 L158.7 195.7 L159.4 195.5 L160.0 195.3 L160.7 195.0 L161.4 194.5 L162.0 193.8 L162.7 193.0 L163.4 191.8 L164.0 190.3 L164.7 188.4 L165.3 186.1 L166.0 183.3 L166.7 180.0 L167.3 176.1 L168.0 171.7 L168.7 166.8 L169.3 161.4 L170.0 155.6 L170.6 149.4 L171.3 142.9 L172.0 136.3 L172.6 129.7 L173.3 123.1 L174.0 116.7 L174.6 110.6 L175.3 104.9 L175.9 99.6 L176.6 94.8 L177.3 90.5 L177.9 86.9 L178.6 83.7 L179.3 81.2 L179.9 79.1 L180.6 77.6 L181.2 76.4 L181.9 75.6 L182.6 75.2 L183.2 74.9 L183.9 74.8 L184.5 74.8 L185.2 75.1 L185.9 76.2 L186.5 77.9 L187.2 80.1 L187.9 82.8 L188.5 85.9 L189.2 89.1 L189.8 92.5 L190.5 95.9 L191.2 99.4 L191.8 102.9 L192.5 106.3 L193.2 109.7 L193.8 113.0 L194.5 116.2 L195.1 119.3 L195.8 122.4 L196.5 125.3 L197.1 128.2 L197.8 130.9 L198.5 133.5 L199.1 136.1 L199.8 138.6 L200.4 140.9 L201.1 143.2 L201.8 145.4 L202.4 147.5 L203.1 149.5 L203.7 151.4 L204.4 153.3 L205.1 155.1 L205.7 156.8 L206.4 158.4 L207.1 160.0 L207.7 161.5 L208.4 163.0 L209.0 164.4 L209.7 165.7 L210.4 167.0 L211.0 168.2 L211.7 169.4 L212.4 170.5 L213.0 171.6 L213.7 172.6 L214.3 173.6 L215.0 174.6 L215.7 175.5 L216.3 176.3 L217.0 177.2 L217.7 178.0 L218.3 178.7 L219.0 179.5 L219.6 180.2 L220.3 180.8 L221.0 181.5 L221.6 182.1 L222.3 182.7 L223.0 183.3 L223.6 183.8 L224.3 184.3 L224.9 184.8 L225.6 185.3 L226.3 185.8 L226.9 186.2 L227.6 186.6 L228.2 187.0 L228.9 187.4 L229.6 187.8 L230.2 188.1 L230.9 188.4 L231.6 188.8 L232.2 189.1 L232.9 189.4 L233.5 189.7 L234.2 189.9 L234.9 190.2 L235.5 190.4 L236.2 190.7 L236.9 190.9 L237.5 191.1 L238.2 191.3 L238.8 191.5 L239.5 191.7 L240.2 191.9 L240.8 192.1 L241.5 192.2 L242.2 192.4 L242.8 192.6 L243.5 192.7 L244.1 192.8 L244.8 193.0 L245.5 193.1 L246.1 193.2 L246.8 193.3 L247.4 193.5 L248.1 193.6 L248.8 193.7 L249.4 193.8 L250.1 193.9 L250.8 194.0 L251.4 194.0 L252.1 194.1 L252.7 194.2 L253.4 194.3 L254.1 194.4 L254.7 194.4 L255.4 194.5 L256.1 194.6 L256.7 194.6 L257.4 194.7 L258.0 194.7 L258.7 194.8 L259.4 194.8 L260.0 194.9 L260.7 194.9 L261.3 196.0Z" fill="#eeb27a" fill-opacity=".5"/><path d="M154.8 196.0L155.4 195.9 L156.1 195.9 L156.7 195.9 L157.4 195.9 L158.1 195.8 L158.7 195.7 L159.4 195.5 L160.0 195.3 L160.7 195.0 L161.4 194.5 L162.0 193.8 L162.7 193.0 L163.4 191.8 L164.0 190.3 L164.7 188.4 L165.3 186.1 L166.0 183.3 L166.7 180.0 L167.3 176.1 L168.0 171.7 L168.7 166.8 L169.3 161.4 L170.0 155.6 L170.6 149.4 L171.3 142.9 L172.0 136.3 L172.6 129.7 L173.3 123.1 L174.0 116.7 L174.6 110.6 L175.3 104.9 L175.9 99.6 L176.6 94.8 L177.3 90.5 L177.9 86.9 L178.6 83.7 L179.3 81.2 L179.9 79.1 L180.6 77.6 L181.2 76.4 L181.9 75.6 L182.6 75.2 L183.2 74.9 L183.9 74.8 L184.5 74.8 L185.2 75.1 L185.9 76.2 L186.5 77.9 L187.2 80.1 L187.9 82.8 L188.5 85.9 L189.2 89.1 L189.8 92.5 L190.5 95.9 L191.2 99.4 L191.8 102.9 L192.5 106.3 L193.2 109.7 L193.8 113.0 L194.5 116.2 L195.1 119.3 L195.8 122.4 L196.5 125.3 L197.1 128.2 L197.8 130.9 L198.5 133.5 L199.1 136.1 L199.8 138.6 L200.4 140.9 L201.1 143.2 L201.8 145.4 L202.4 147.5 L203.1 149.5 L203.7 151.4 L204.4 153.3 L205.1 155.1 L205.7 156.8 L206.4 158.4 L207.1 160.0 L207.7 161.5 L208.4 163.0 L209.0 164.4 L209.7 165.7 L210.4 167.0 L211.0 168.2 L211.7 169.4 L212.4 170.5 L213.0 171.6 L213.7 172.6 L214.3 173.6 L215.0 174.6 L215.7 175.5 L216.3 176.3 L217.0 177.2 L217.7 178.0 L218.3 178.7 L219.0 179.5 L219.6 180.2 L220.3 180.8 L221.0 181.5 L221.6 182.1 L222.3 182.7 L223.0 183.3 L223.6 183.8 L224.3 184.3 L224.9 184.8 L225.6 185.3 L226.3 185.8 L226.9 186.2 L227.6 186.6 L228.2 187.0 L228.9 187.4 L229.6 187.8 L230.2 188.1 L230.9 188.4 L231.6 188.8 L232.2 189.1 L232.9 189.4 L233.5 189.7 L234.2 189.9 L234.9 190.2 L235.5 190.4 L236.2 190.7 L236.9 190.9 L237.5 191.1 L238.2 191.3 L238.8 191.5 L239.5 191.7 L240.2 191.9 L240.8 192.1 L241.5 192.2 L242.2 192.4 L242.8 192.6 L243.5 192.7 L244.1 192.8 L244.8 193.0 L245.5 193.1 L246.1 193.2 L246.8 193.3 L247.4 193.5 L248.1 193.6 L248.8 193.7 L249.4 193.8 L250.1 193.9 L250.8 194.0 L251.4 194.0 L252.1 194.1 L252.7 194.2 L253.4 194.3 L254.1 194.4 L254.7 194.4 L255.4 194.5 L256.1 194.6 L256.7 194.6 L257.4 194.7 L258.0 194.7 L258.7 194.8 L259.4 194.8 L260.0 194.9 L260.7 194.9 L261.3 196.0Z" fill="url(#hatch)" fill-opacity=".16"/><path d="M182.8 75.0V196.0" stroke="#eaa96d" stroke-width="1.5"/><path d="M187.6 81.8V196.0" stroke="#7b858f" stroke-width="1.5"/><path d="M70.0 196.0 L70.7 196.0 L71.3 196.0 L72.0 196.0 L72.6 196.0 L73.3 196.0 L74.0 196.0 L74.6 196.0 L75.3 196.0 L76.0 196.0 L76.6 196.0 L77.3 196.0 L77.9 196.0 L78.6 196.0 L79.3 196.0 L79.9 196.0 L80.6 196.0 L81.3 196.0 L81.9 196.0 L82.6 196.0 L83.2 196.0 L83.9 196.0 L84.6 196.0 L85.2 196.0 L85.9 196.0 L86.6 196.0 L87.2 196.0 L87.9 196.0 L88.5 196.0 L89.2 196.0 L89.9 196.0 L90.5 196.0 L91.2 196.0 L91.9 196.0 L92.5 196.0 L93.2 196.0 L93.8 196.0 L94.5 196.0 L95.2 196.0 L95.8 196.0 L96.5 196.0 L97.1 196.0 L97.8 196.0 L98.5 196.0 L99.1 196.0 L99.8 196.0 L100.5 196.0 L101.1 196.0 L101.8 196.0 L102.4 196.0 L103.1 196.0 L103.8 196.0 L104.4 196.0 L105.1 196.0 L105.8 196.0 L106.4 196.0 L107.1 196.0 L107.7 196.0 L108.4 196.0 L109.1 196.0 L109.7 196.0 L110.4 196.0 L111.1 196.0 L111.7 196.0 L112.4 196.0 L113.0 195.9 L113.7 195.9 L114.4 195.9 L115.0 195.9 L115.7 195.9 L116.3 195.8 L117.0 195.8 L117.7 195.8 L118.3 195.7 L119.0 195.7 L119.7 195.6 L120.3 195.6 L121.0 195.5 L121.6 195.4 L122.3 195.4 L123.0 195.3 L123.6 195.2 L124.3 195.1 L125.0 195.0 L125.6 194.9 L126.3 194.7 L126.9 194.6 L127.6 194.5 L128.3 194.4 L128.9 194.3 L129.6 194.2 L130.3 194.1 L130.9 194.0 L131.6 193.9 L132.2 193.8 L132.9 193.8 L133.6 193.7 L134.2 193.7 L134.9 193.7 L135.6 193.7 L136.2 193.7 L136.9 193.7 L137.5 193.8 L138.2 193.8 L138.9 193.9 L139.5 194.0 L140.2 194.1 L140.8 194.2 L141.5 194.3 L142.2 194.4 L142.8 194.5 L143.5 194.6 L144.2 194.7 L144.8 194.9 L145.5 195.0 L146.1 195.1 L146.8 195.2 L147.5 195.3 L148.1 195.4 L148.8 195.4 L149.5 195.5 L150.1 195.6 L150.8 195.6 L151.4 195.7 L152.1 195.7 L152.8 195.8 L153.4 195.8 L154.1 195.8 L154.8 195.8 L155.4 195.8 L156.1 195.8 L156.7 195.7 L157.4 195.6 L158.1 195.4 L158.7 195.2 L159.4 194.8 L160.0 194.2 L160.7 193.5 L161.4 192.5 L162.0 191.2 L162.7 189.5 L163.4 187.4 L164.0 184.8 L164.7 181.7 L165.3 178.0 L166.0 173.6 L166.7 168.7 L167.3 163.1 L168.0 157.0 L168.7 150.3 L169.3 143.1 L170.0 135.7 L170.6 127.9 L171.3 120.1 L172.0 112.2 L172.6 104.5 L173.3 97.0 L174.0 89.8 L174.6 83.2 L175.3 77.0 L175.9 71.4 L176.6 66.5 L177.3 62.2 L177.9 58.6 L178.6 55.6 L179.3 53.2 L179.9 51.4 L180.6 50.0 L181.2 49.1 L181.9 48.5 L182.6 48.2 L183.2 48.0 L183.9 48.0 L184.5 48.2 L185.2 49.3 L185.9 51.1 L186.5 53.7 L187.2 56.7 L187.9 60.2 L188.5 63.9 L189.2 67.9 L189.8 72.0 L190.5 76.1 L191.2 80.2 L191.8 84.3 L192.5 88.3 L193.2 92.3 L193.8 96.2 L194.5 99.9 L195.1 103.6 L195.8 107.2 L196.5 110.6 L197.1 114.0 L197.8 117.2 L198.5 120.3 L199.1 123.3 L199.8 126.2 L200.4 129.0 L201.1 131.7 L201.8 134.3 L202.4 136.8 L203.1 139.2 L203.7 141.5 L204.4 143.7 L205.1 145.8 L205.7 147.8 L206.4 149.8 L207.1 151.7 L207.7 153.5 L208.4 155.2 L209.0 156.9 L209.7 158.5 L210.4 160.0 L211.0 161.5 L211.7 162.9 L212.4 164.3 L213.0 165.6 L213.7 166.8 L214.3 168.0 L215.0 169.2 L215.7 170.3 L216.3 171.4 L217.0 172.4 L217.7 173.3 L218.3 174.3 L219.0 175.2 L219.6 176.0 L220.3 176.9 L221.0 177.6 L221.6 178.4 L222.3 179.1 L223.0 179.8 L223.6 180.5 L224.3 181.1 L224.9 181.8 L225.6 182.3 L226.3 182.9 L226.9 183.5 L227.6 184.0 L228.2 184.5 L228.9 184.9 L229.6 185.4 L230.2 185.8 L230.9 186.3 L231.6 186.7 L232.2 187.1 L232.9 187.4 L233.5 187.8 L234.2 188.1 L234.9 188.4 L235.5 188.8 L236.2 189.1 L236.9 189.3 L237.5 189.6 L238.2 189.9 L238.8 190.1 L239.5 190.4 L240.2 190.6 L240.8 190.8 L241.5 191.1 L242.2 191.3 L242.8 191.5 L243.5 191.6 L244.1 191.8 L244.8 192.0 L245.5 192.2 L246.1 192.3 L246.8 192.5 L247.4 192.6 L248.1 192.8 L248.8 192.9 L249.4 193.0 L250.1 193.1 L250.8 193.3 L251.4 193.4 L252.1 193.5 L252.7 193.6 L253.4 193.7 L254.1 193.8 L254.7 193.9 L255.4 194.0 L256.1 194.1 L256.7 194.1 L257.4 194.2 L258.0 194.3 L258.7 194.4 L259.4 194.4 L260.0 194.5 L260.7 194.6 L261.4 194.6 L262.0 194.7 L262.7 194.7 L263.3 194.8 L264.0 194.8 L264.7 194.9 L265.3 194.9 L266.0 195.0 L266.7 195.0 L267.3 195.1 L268.0 195.1 L268.6 195.1 L269.3 195.2 L270.0 195.2 L270.6 195.2 L271.3 195.3 L271.9 195.3 L272.6 195.3 L273.3 195.4 L273.9 195.4 L274.6 195.4 L275.3 195.4 L275.9 195.5 L276.6 195.5 L277.2 195.5 L277.9 195.5 L278.6 195.5 L279.2 195.6 L279.9 195.6 L280.6 195.6 L281.2 195.6 L281.9 195.6 L282.5 195.6 L283.2 195.7 L283.9 195.7 L284.5 195.7 L285.2 195.7 L285.9 195.7 L286.5 195.7 L287.2 195.7 L287.8 195.7 L288.5 195.8" fill="none" stroke="#7fd07f" stroke-width="1"/><path d="M70.0 196.0 L70.7 196.0 L71.3 196.0 L72.0 196.0 L72.6 196.0 L73.3 196.0 L74.0 196.0 L74.6 196.0 L75.3 196.0 L76.0 196.0 L76.6 196.0 L77.3 196.0 L77.9 196.0 L78.6 196.0 L79.3 196.0 L79.9 196.0 L80.6 196.0 L81.3 196.0 L81.9 196.0 L82.6 196.0 L83.2 196.0 L83.9 196.0 L84.6 196.0 L85.2 196.0 L85.9 196.0 L86.6 196.0 L87.2 196.0 L87.9 196.0 L88.5 196.0 L89.2 196.0 L89.9 196.0 L90.5 196.0 L91.2 196.0 L91.9 196.0 L92.5 196.0 L93.2 196.0 L93.8 196.0 L94.5 196.0 L95.2 196.0 L95.8 196.0 L96.5 196.0 L97.1 196.0 L97.8 196.0 L98.5 196.0 L99.1 196.0 L99.8 196.0 L100.5 196.0 L101.1 196.0 L101.8 196.0 L102.4 196.0 L103.1 196.0 L103.8 196.0 L104.4 196.0 L105.1 196.0 L105.8 196.0 L106.4 196.0 L107.1 196.0 L107.7 196.0 L108.4 196.0 L109.1 196.0 L109.7 196.0 L110.4 196.0 L111.1 196.0 L111.7 196.0 L112.4 196.0 L113.0 196.0 L113.7 196.0 L114.4 195.9 L115.0 195.9 L115.7 195.9 L116.3 195.9 L117.0 195.9 L117.7 195.9 L118.3 195.8 L119.0 195.8 L119.7 195.8 L120.3 195.7 L121.0 195.7 L121.6 195.6 L122.3 195.6 L123.0 195.5 L123.6 195.5 L124.3 195.4 L125.0 195.3 L125.6 195.3 L126.3 195.2 L126.9 195.1 L127.6 195.1 L128.3 195.0 L128.9 194.9 L129.6 194.9 L130.3 194.8 L130.9 194.7 L131.6 194.7 L132.2 194.6 L132.9 194.6 L133.6 194.6 L134.2 194.6 L134.9 194.5 L135.6 194.5 L136.2 194.6 L136.9 194.6 L137.5 194.6 L138.2 194.6 L138.9 194.7 L139.5 194.7 L140.2 194.8 L140.8 194.9 L141.5 194.9 L142.2 195.0 L142.8 195.1 L143.5 195.1 L144.2 195.2 L144.8 195.3 L145.5 195.3 L146.1 195.4 L146.8 195.5 L147.5 195.5 L148.1 195.6 L148.8 195.6 L149.5 195.7 L150.1 195.7 L150.8 195.8 L151.4 195.8 L152.1 195.8 L152.8 195.9 L153.4 195.9 L154.1 195.9 L154.8 195.9 L155.4 195.9 L156.1 195.9 L156.7 195.9 L157.4 195.9 L158.1 195.8 L158.7 195.7 L159.4 195.5 L160.0 195.3 L160.7 195.0 L161.4 194.5 L162.0 193.8 L162.7 193.0 L163.4 191.8 L164.0 190.3 L164.7 188.4 L165.3 186.1 L166.0 183.3 L166.7 180.0 L167.3 176.1 L168.0 171.7 L168.7 166.8 L169.3 161.4 L170.0 155.6 L170.6 149.4 L171.3 142.9 L172.0 136.3 L172.6 129.7 L173.3 123.1 L174.0 116.7 L174.6 110.6 L175.3 104.9 L175.9 99.6 L176.6 94.8 L177.3 90.5 L177.9 86.9 L178.6 83.7 L179.3 81.2 L179.9 79.1 L180.6 77.6 L181.2 76.4 L181.9 75.6 L182.6 75.2 L183.2 74.9 L183.9 74.8 L184.5 74.8 L185.2 75.1 L185.9 76.2 L186.5 77.9 L187.2 80.1 L187.9 82.8 L188.5 85.9 L189.2 89.1 L189.8 92.5 L190.5 95.9 L191.2 99.4 L191.8 102.9 L192.5 106.3 L193.2 109.7 L193.8 113.0 L194.5 116.2 L195.1 119.3 L195.8 122.4 L196.5 125.3 L197.1 128.2 L197.8 130.9 L198.5 133.5 L199.1 136.1 L199.8 138.6 L200.4 140.9 L201.1 143.2 L201.8 145.4 L202.4 147.5 L203.1 149.5 L203.7 151.4 L204.4 153.3 L205.1 155.1 L205.7 156.8 L206.4 158.4 L207.1 160.0 L207.7 161.5 L208.4 163.0 L209.0 164.4 L209.7 165.7 L210.4 167.0 L211.0 168.2 L211.7 169.4 L212.4 170.5 L213.0 171.6 L213.7 172.6 L214.3 173.6 L215.0 174.6 L215.7 175.5 L216.3 176.3 L217.0 177.2 L217.7 178.0 L218.3 178.7 L219.0 179.5 L219.6 180.2 L220.3 180.8 L221.0 181.5 L221.6 182.1 L222.3 182.7 L223.0 183.3 L223.6 183.8 L224.3 184.3 L224.9 184.8 L225.6 185.3 L226.3 185.8 L226.9 186.2 L227.6 186.6 L228.2 187.0 L228.9 187.4 L229.6 187.8 L230.2 188.1 L230.9 188.4 L231.6 188.8 L232.2 189.1 L232.9 189.4 L233.5 189.7 L234.2 189.9 L234.9 190.2 L235.5 190.4 L236.2 190.7 L236.9 190.9 L237.5 191.1 L238.2 191.3 L238.8 191.5 L239.5 191.7 L240.2 191.9 L240.8 192.1 L241.5 192.2 L242.2 192.4 L242.8 192.6 L243.5 192.7 L244.1 192.8 L244.8 193.0 L245.5 193.1 L246.1 193.2 L246.8 193.3 L247.4 193.5 L248.1 193.6 L248.8 193.7 L249.4 193.8 L250.1 193.9 L250.8 194.0 L251.4 194.0 L252.1 194.1 L252.7 194.2 L253.4 194.3 L254.1 194.4 L254.7 194.4 L255.4 194.5 L256.1 194.6 L256.7 194.6 L257.4 194.7 L258.0 194.7 L258.7 194.8 L259.4 194.8 L260.0 194.9 L260.7 194.9 L261.4 195.0 L262.0 195.0 L262.7 195.1 L263.3 195.1 L264.0 195.1 L264.7 195.2 L265.3 195.2 L266.0 195.3 L266.7 195.3 L267.3 195.3 L268.0 195.3 L268.6 195.4 L269.3 195.4 L270.0 195.4 L270.6 195.5 L271.3 195.5 L271.9 195.5 L272.6 195.5 L273.3 195.5 L273.9 195.6 L274.6 195.6 L275.3 195.6 L275.9 195.6 L276.6 195.6 L277.2 195.6 L277.9 195.7 L278.6 195.7 L279.2 195.7 L279.9 195.7 L280.6 195.7 L281.2 195.7 L281.9 195.7 L282.5 195.7 L283.2 195.8 L283.9 195.8 L284.5 195.8 L285.2 195.8 L285.9 195.8 L286.5 195.8 L287.2 195.8 L287.8 195.8 L288.5 195.8" fill="none" stroke="#5d86ab" stroke-width="1"/><text x="183.3" y="188.5" font-size="10.5" font-weight="bold" fill="#e09540" text-anchor="middle">RT Cal</text><path d="M148.8 199.0L154.8 189.0L160.8 199.0Z" fill="#e2923c"/><path d="M255.3 199.0L261.3 189.0L267.3 199.0Z" fill="#e2923c"/><ellipse cx="78.5" cy="47.9" rx="6.1" ry="7.4" fill="none" stroke="#1f5f94" stroke-width="1.3"/><text x="78.3" y="51.8" font-size="10.8" fill="#1f5f94" stroke="#1f5f94" stroke-width=".3" text-anchor="middle">1</text><text x="90.0" y="52.0" font-size="11.4" font-weight="bold" fill="#1f5f94">Q: 374.3 &gt; 302.15</text><path d="M190.8 52.2l-4.4 0l4.4 -7.4l4.4 7.4z" fill="#185a8d"/><ellipse cx="78.5" cy="64.2" rx="6.1" ry="7.4" fill="none" stroke="#4fc04f" stroke-width="1.3"/><text x="78.3" y="68.1" font-size="10.8" fill="#4fc04f" stroke="#4fc04f" stroke-width=".3" text-anchor="middle">2</text><text x="90.0" y="68.0" font-size="10.85" fill="#4fc04f">Q: 374.3 &gt; 216.1</text><g transform="translate(259.5,40.5) scale(.96)"><path fill="#3d74ad" d="M11 17h2v-6h-2v6zm1-15C6.48 2 2 6.48 2 12s4.48 10 10 10 10-4.48 10-10S17.52 2 12 2zm0 18c-4.41 0-8-3.59-8-8s3.59-8 8-8 8 3.59 8 8-3.59 8-8 8zM11 9h2V7h-2v2z"/></g></svg>
<svg class="ic" style="left:953px;top:677px;overflow:visible" width="284" height="227" viewBox="0 0 284 227"><path d="M74.5 34.0V196.0M128.5 34.0V196.0M182.5 34.0V196.0M236.5 34.0V196.0M288.5 34.0V196.0M70.0 34.5H288.5M70.0 61.5H288.5M70.0 128.5H288.5M70.0 196.5H288.5M70.0 34.5H288.5" stroke="#dedede" stroke-width="1" fill="none"/><path d="M69.5 34.0V196.0M60.0 34.5H70.0M60.0 61.5H70.0M60.0 128.5H70.0M60.0 196.5H70.0M60.0 34.5H70.0" stroke="#cfcfcf" stroke-width="1" fill="none"/><path d="M74.5 34.0V196.0" stroke="#c4c4c4" stroke-width="1" fill="none"/><g font-size="12" fill="#666" text-anchor="end"><text x="59.0" y="38.4">4.8e+5</text><text x="59.0" y="65.4">4.0e+5</text><text x="59.0" y="132.9">2.0e+5</text><text x="59.0" y="200.4">0.0</text></g><g font-size="12" fill="#666" text-anchor="middle"><text x="70.0" y="217.0">9.0</text><text x="74.5" y="217.0">9.0</text><text x="128.5" y="217.0">9.2</text><text x="182.5" y="217.0">9.4</text><text x="236.5" y="217.0">9.6</text><text x="288.0" y="217.0">9.8</text></g><text x="158.0" y="21.0" font-size="12.3" font-weight="bold" fill="#555" text-anchor="middle">std 10ppb</text><path d="M183.0 34.0V196.0" stroke="#f6c79a" stroke-width="1.7"/><path d="M179.4 34.0V196.0" stroke="#4f7fb0" stroke-width="1.1"/><text x="179.9" y="46.5" font-size="10.5" fill="#8db2d8" text-anchor="middle">RT Cor</text><path d="M146.0 196.0L146.1 195.4 L146.8 195.5 L147.5 195.5 L148.1 195.6 L148.8 195.7 L149.5 195.7 L150.1 195.7 L150.8 195.8 L151.4 195.8 L152.1 195.8 L152.8 195.8 L153.4 195.7 L154.1 195.6 L154.8 195.5 L155.4 195.3 L156.1 195.0 L156.7 194.5 L157.4 193.9 L158.1 193.1 L158.7 192.0 L159.4 190.5 L160.0 188.7 L160.7 186.5 L161.4 183.8 L162.0 180.6 L162.7 176.9 L163.4 172.6 L164.0 167.9 L164.7 162.6 L165.3 157.0 L166.0 151.0 L166.7 144.7 L167.3 138.3 L168.0 131.8 L168.7 125.4 L169.3 119.1 L170.0 113.2 L170.6 107.5 L171.3 102.4 L172.0 97.7 L172.6 93.5 L173.3 89.9 L174.0 86.8 L174.6 84.2 L175.3 82.2 L175.9 80.7 L176.6 79.5 L177.3 78.7 L177.9 78.3 L178.6 78.0 L179.3 77.9 L179.9 77.9 L180.6 78.2 L181.2 79.4 L181.9 81.4 L182.6 84.0 L183.2 87.1 L183.9 90.5 L184.5 94.1 L185.2 97.8 L185.9 101.6 L186.5 105.3 L187.2 109.0 L187.9 112.7 L188.5 116.2 L189.2 119.7 L189.8 123.0 L190.5 126.2 L191.2 129.3 L191.8 132.3 L192.5 135.2 L193.2 137.9 L193.8 140.6 L194.5 143.1 L195.1 145.5 L195.8 147.9 L196.5 150.1 L197.1 152.2 L197.8 154.2 L198.5 156.2 L199.1 158.0 L199.8 159.8 L200.4 161.5 L201.1 163.1 L201.8 164.6 L202.4 166.1 L203.1 167.5 L203.7 168.8 L204.4 170.1 L205.1 171.3 L205.7 172.5 L206.4 173.6 L207.1 174.6 L207.7 175.6 L208.4 176.6 L209.0 177.5 L209.7 178.4 L210.4 179.2 L211.0 180.0 L211.7 180.7 L212.4 181.5 L213.0 182.1 L213.7 182.8 L214.3 183.4 L215.0 184.0 L215.7 184.6 L216.3 185.1 L217.0 185.6 L217.7 186.1 L218.3 186.6 L219.0 187.0 L219.6 187.5 L220.3 187.9 L221.0 188.2 L221.6 188.6 L222.3 189.0 L223.0 189.3 L223.6 189.6 L224.3 189.9 L224.9 190.2 L225.6 190.5 L226.3 190.7 L226.9 191.0 L227.6 191.2 L228.2 191.4 L228.9 191.7 L229.6 191.9 L230.2 192.1 L230.9 192.3 L231.6 192.4 L232.2 192.6 L232.9 192.8 L233.5 192.9 L234.2 193.1 L234.9 193.2 L235.5 193.3 L236.2 193.5 L236.9 193.6 L237.5 193.7 L238.2 193.8 L238.8 193.9 L239.5 194.0 L240.2 194.1 L240.8 194.2 L241.5 194.3 L242.2 194.4 L242.8 194.4 L243.5 194.5 L244.1 194.6 L244.8 194.6 L245.5 194.7 L246.1 194.8 L246.8 194.8 L247.4 194.9 L248.1 194.9 L248.8 195.0 L249.4 195.0 L250.1 195.1 L250.8 195.1 L251.4 195.2 L252.1 195.2 L252.7 195.2 L253.4 195.3 L253.7 196.0Z" fill="#eeb27a" fill-opacity=".5"/><path d="M146.0 196.0L146.1 195.4 L146.8 195.5 L147.5 195.5 L148.1 195.6 L148.8 195.7 L149.5 195.7 L150.1 195.7 L150.8 195.8 L151.4 195.8 L152.1 195.8 L152.8 195.8 L153.4 195.7 L154.1 195.6 L154.8 195.5 L155.4 195.3 L156.1 195.0 L156.7 194.5 L157.4 193.9 L158.1 193.1 L158.7 192.0 L159.4 190.5 L160.0 188.7 L160.7 186.5 L161.4 183.8 L162.0 180.6 L162.7 176.9 L163.4 172.6 L164.0 167.9 L164.7 162.6 L165.3 157.0 L166.0 151.0 L166.7 144.7 L167.3 138.3 L168.0 131.8 L168.7 125.4 L169.3 119.1 L170.0 113.2 L170.6 107.5 L171.3 102.4 L172.0 97.7 L172.6 93.5 L173.3 89.9 L174.0 86.8 L174.6 84.2 L175.3 82.2 L175.9 80.7 L176.6 79.5 L177.3 78.7 L177.9 78.3 L178.6 78.0 L179.3 77.9 L179.9 77.9 L180.6 78.2 L181.2 79.4 L181.9 81.4 L182.6 84.0 L183.2 87.1 L183.9 90.5 L184.5 94.1 L185.2 97.8 L185.9 101.6 L186.5 105.3 L187.2 109.0 L187.9 112.7 L188.5 116.2 L189.2 119.7 L189.8 123.0 L190.5 126.2 L191.2 129.3 L191.8 132.3 L192.5 135.2 L193.2 137.9 L193.8 140.6 L194.5 143.1 L195.1 145.5 L195.8 147.9 L196.5 150.1 L197.1 152.2 L197.8 154.2 L198.5 156.2 L199.1 158.0 L199.8 159.8 L200.4 161.5 L201.1 163.1 L201.8 164.6 L202.4 166.1 L203.1 167.5 L203.7 168.8 L204.4 170.1 L205.1 171.3 L205.7 172.5 L206.4 173.6 L207.1 174.6 L207.7 175.6 L208.4 176.6 L209.0 177.5 L209.7 178.4 L210.4 179.2 L211.0 180.0 L211.7 180.7 L212.4 181.5 L213.0 182.1 L213.7 182.8 L214.3 183.4 L215.0 184.0 L215.7 184.6 L216.3 185.1 L217.0 185.6 L217.7 186.1 L218.3 186.6 L219.0 187.0 L219.6 187.5 L220.3 187.9 L221.0 188.2 L221.6 188.6 L222.3 189.0 L223.0 189.3 L223.6 189.6 L224.3 189.9 L224.9 190.2 L225.6 190.5 L226.3 190.7 L226.9 191.0 L227.6 191.2 L228.2 191.4 L228.9 191.7 L229.6 191.9 L230.2 192.1 L230.9 192.3 L231.6 192.4 L232.2 192.6 L232.9 192.8 L233.5 192.9 L234.2 193.1 L234.9 193.2 L235.5 193.3 L236.2 193.5 L236.9 193.6 L237.5 193.7 L238.2 193.8 L238.8 193.9 L239.5 194.0 L240.2 194.1 L240.8 194.2 L241.5 194.3 L242.2 194.4 L242.8 194.4 L243.5 194.5 L244.1 194.6 L244.8 194.6 L245.5 194.7 L246.1 194.8 L246.8 194.8 L247.4 194.9 L248.1 194.9 L248.8 195.0 L249.4 195.0 L250.1 195.1 L250.8 195.1 L251.4 195.2 L252.1 195.2 L252.7 195.2 L253.4 195.3 L253.7 196.0Z" fill="url(#hatch)" fill-opacity=".16"/><path d="M183.0 86.0V196.0" stroke="#eaa96d" stroke-width="1.5"/><path d="M179.4 77.9V196.0" stroke="#7b858f" stroke-width="1.5"/><path d="M70.0 196.0 L70.7 196.0 L71.3 196.0 L72.0 196.0 L72.6 196.0 L73.3 196.0 L74.0 196.0 L74.6 196.0 L75.3 196.0 L76.0 196.0 L76.6 196.0 L77.3 196.0 L77.9 196.0 L78.6 196.0 L79.3 196.0 L79.9 196.0 L80.6 196.0 L81.3 196.0 L81.9 196.0 L82.6 196.0 L83.2 196.0 L83.9 196.0 L84.6 196.0 L85.2 196.0 L85.9 196.0 L86.6 196.0 L87.2 196.0 L87.9 196.0 L88.5 196.0 L89.2 196.0 L89.9 196.0 L90.5 196.0 L91.2 196.0 L91.9 196.0 L92.5 196.0 L93.2 196.0 L93.8 196.0 L94.5 196.0 L95.2 196.0 L95.8 196.0 L96.5 196.0 L97.1 196.0 L97.8 196.0 L98.5 196.0 L99.1 196.0 L99.8 196.0 L100.5 196.0 L101.1 196.0 L101.8 196.0 L102.4 196.0 L103.1 196.0 L103.8 196.0 L104.4 196.0 L105.1 196.0 L105.8 196.0 L106.4 196.0 L107.1 196.0 L107.7 196.0 L108.4 196.0 L109.1 196.0 L109.7 196.0 L110.4 196.0 L111.1 196.0 L111.7 196.0 L112.4 196.0 L113.0 195.9 L113.7 195.9 L114.4 195.9 L115.0 195.9 L115.7 195.9 L116.3 195.8 L117.0 195.8 L117.7 195.8 L118.3 195.7 L119.0 195.7 L119.7 195.6 L120.3 195.6 L121.0 195.5 L121.6 195.4 L122.3 195.3 L123.0 195.3 L123.6 195.2 L124.3 195.1 L125.0 195.0 L125.6 194.9 L126.3 194.7 L126.9 194.6 L127.6 194.5 L128.3 194.4 L128.9 194.3 L129.6 194.2 L130.3 194.1 L130.9 194.0 L131.6 193.9 L132.2 193.8 L132.9 193.8 L133.6 193.7 L134.2 193.7 L134.9 193.7 L135.6 193.7 L136.2 193.7 L136.9 193.7 L137.5 193.8 L138.2 193.8 L138.9 193.9 L139.5 194.0 L140.2 194.1 L140.8 194.2 L141.5 194.3 L142.2 194.4 L142.8 194.5 L143.5 194.6 L144.2 194.7 L144.8 194.9 L145.5 195.0 L146.1 195.1 L146.8 195.2 L147.5 195.3 L148.1 195.3 L148.8 195.4 L149.5 195.5 L150.1 195.5 L150.8 195.6 L151.4 195.6 L152.1 195.5 L152.8 195.5 L153.4 195.3 L154.1 195.1 L154.8 194.7 L155.4 194.2 L156.1 193.5 L156.7 192.5 L157.4 191.2 L158.1 189.6 L158.7 187.5 L159.4 185.0 L160.0 181.9 L160.7 178.2 L161.4 173.9 L162.0 168.9 L162.7 163.4 L163.4 157.3 L164.0 150.6 L164.7 143.5 L165.3 136.0 L166.0 128.2 L166.7 120.3 L167.3 112.5 L168.0 104.7 L168.7 97.1 L169.3 90.0 L170.0 83.2 L170.6 77.0 L171.3 71.4 L172.0 66.4 L172.6 62.1 L173.3 58.4 L174.0 55.3 L174.6 52.9 L175.3 51.0 L175.9 49.6 L176.6 48.6 L177.3 48.0 L177.9 47.7 L178.6 47.5 L179.3 47.5 L179.9 47.7 L180.6 49.0 L181.2 51.2 L181.9 54.2 L182.6 57.8 L183.2 61.8 L183.9 66.2 L184.5 70.7 L185.2 75.2 L185.9 79.8 L186.5 84.4 L187.2 88.9 L187.9 93.3 L188.5 97.5 L189.2 101.7 L189.8 105.7 L190.5 109.6 L191.2 113.3 L191.8 116.9 L192.5 120.4 L193.2 123.7 L193.8 126.9 L194.5 130.0 L195.1 132.9 L195.8 135.8 L196.5 138.5 L197.1 141.0 L197.8 143.5 L198.5 145.9 L199.1 148.1 L199.8 150.3 L200.4 152.4 L201.1 154.3 L201.8 156.2 L202.4 158.0 L203.1 159.8 L203.7 161.4 L204.4 163.0 L205.1 164.5 L205.7 165.9 L206.4 167.3 L207.1 168.6 L207.7 169.9 L208.4 171.0 L209.0 172.2 L209.7 173.3 L210.4 174.3 L211.0 175.3 L211.7 176.3 L212.4 177.2 L213.0 178.0 L213.7 178.8 L214.3 179.6 L215.0 180.4 L215.7 181.1 L216.3 181.8 L217.0 182.4 L217.7 183.1 L218.3 183.6 L219.0 184.2 L219.6 184.8 L220.3 185.3 L221.0 185.8 L221.6 186.2 L222.3 186.7 L223.0 187.1 L223.6 187.5 L224.3 187.9 L224.9 188.3 L225.6 188.6 L226.3 189.0 L226.9 189.3 L227.6 189.6 L228.2 189.9 L228.9 190.2 L229.6 190.4 L230.2 190.7 L230.9 190.9 L231.6 191.2 L232.2 191.4 L232.9 191.6 L233.5 191.8 L234.2 192.0 L234.9 192.2 L235.5 192.4 L236.2 192.5 L236.9 192.7 L237.5 192.8 L238.2 193.0 L238.8 193.1 L239.5 193.3 L240.2 193.4 L240.8 193.5 L241.5 193.6 L242.2 193.7 L242.8 193.8 L243.5 193.9 L244.1 194.0 L244.8 194.1 L245.5 194.2 L246.1 194.3 L246.8 194.4 L247.4 194.4 L248.1 194.5 L248.8 194.6 L249.4 194.6 L250.1 194.7 L250.8 194.8 L251.4 194.8 L252.1 194.9 L252.7 194.9 L253.4 195.0 L254.1 195.0 L254.7 195.1 L255.4 195.1 L256.1 195.2 L256.7 195.2 L257.4 195.2 L258.0 195.3 L258.7 195.3 L259.4 195.3 L260.0 195.4 L260.7 195.4 L261.4 195.4 L262.0 195.4 L262.7 195.5 L263.3 195.5 L264.0 195.5 L264.7 195.5 L265.3 195.6 L266.0 195.6 L266.7 195.6 L267.3 195.6 L268.0 195.6 L268.6 195.7 L269.3 195.7 L270.0 195.7 L270.6 195.7 L271.3 195.7 L271.9 195.7 L272.6 195.7 L273.3 195.8 L273.9 195.8 L274.6 195.8 L275.3 195.8 L275.9 195.8 L276.6 195.8 L277.2 195.8 L277.9 195.8 L278.6 195.8 L279.2 195.8 L279.9 195.8 L280.6 195.9 L281.2 195.9 L281.9 195.9 L282.5 195.9 L283.2 195.9 L283.9 195.9 L284.5 195.9 L285.2 195.9 L285.9 195.9 L286.5 195.9 L287.2 195.9 L287.8 195.9 L288.5 195.9" fill="none" stroke="#7fd07f" stroke-width="1"/><path d="M70.0 196.0 L70.7 196.0 L71.3 196.0 L72.0 196.0 L72.6 196.0 L73.3 196.0 L74.0 196.0 L74.6 196.0 L75.3 196.0 L76.0 196.0 L76.6 196.0 L77.3 196.0 L77.9 196.0 L78.6 196.0 L79.3 196.0 L79.9 196.0 L80.6 196.0 L81.3 196.0 L81.9 196.0 L82.6 196.0 L83.2 196.0 L83.9 196.0 L84.6 196.0 L85.2 196.0 L85.9 196.0 L86.6 196.0 L87.2 196.0 L87.9 196.0 L88.5 196.0 L89.2 196.0 L89.9 196.0 L90.5 196.0 L91.2 196.0 L91.9 196.0 L92.5 196.0 L93.2 196.0 L93.8 196.0 L94.5 196.0 L95.2 196.0 L95.8 196.0 L96.5 196.0 L97.1 196.0 L97.8 196.0 L98.5 196.0 L99.1 196.0 L99.8 196.0 L100.5 196.0 L101.1 196.0 L101.8 196.0 L102.4 196.0 L103.1 196.0 L103.8 196.0 L104.4 196.0 L105.1 196.0 L105.8 196.0 L106.4 196.0 L107.1 196.0 L107.7 196.0 L108.4 196.0 L109.1 196.0 L109.7 196.0 L110.4 196.0 L111.1 196.0 L111.7 196.0 L112.4 196.0 L113.0 196.0 L113.7 196.0 L114.4 195.9 L115.0 195.9 L115.7 195.9 L116.3 195.9 L117.0 195.9 L117.7 195.9 L118.3 195.8 L119.0 195.8 L119.7 195.8 L120.3 195.7 L121.0 195.7 L121.6 195.7 L122.3 195.6 L123.0 195.5 L123.6 195.5 L124.3 195.4 L125.0 195.4 L125.6 195.3 L126.3 195.2 L126.9 195.2 L127.6 195.1 L128.3 195.0 L128.9 195.0 L129.6 194.9 L130.3 194.8 L130.9 194.8 L131.6 194.7 L132.2 194.7 L132.9 194.6 L133.6 194.6 L134.2 194.6 L134.9 194.6 L135.6 194.6 L136.2 194.6 L136.9 194.6 L137.5 194.6 L138.2 194.7 L138.9 194.7 L139.5 194.8 L140.2 194.8 L140.8 194.9 L141.5 195.0 L142.2 195.0 L142.8 195.1 L143.5 195.2 L144.2 195.2 L144.8 195.3 L145.5 195.4 L146.1 195.4 L146.8 195.5 L147.5 195.5 L148.1 195.6 L148.8 195.7 L149.5 195.7 L150.1 195.7 L150.8 195.8 L151.4 195.8 L152.1 195.8 L152.8 195.8 L153.4 195.7 L154.1 195.6 L154.8 195.5 L155.4 195.3 L156.1 195.0 L156.7 194.5 L157.4 193.9 L158.1 193.1 L158.7 192.0 L159.4 190.5 L160.0 188.7 L160.7 186.5 L161.4 183.8 L162.0 180.6 L162.7 176.9 L163.4 172.6 L164.0 167.9 L164.7 162.6 L165.3 157.0 L166.0 151.0 L166.7 144.7 L167.3 138.3 L168.0 131.8 L168.7 125.4 L169.3 119.1 L170.0 113.2 L170.6 107.5 L171.3 102.4 L172.0 97.7 L172.6 93.5 L173.3 89.9 L174.0 86.8 L174.6 84.2 L175.3 82.2 L175.9 80.7 L176.6 79.5 L177.3 78.7 L177.9 78.3 L178.6 78.0 L179.3 77.9 L179.9 77.9 L180.6 78.2 L181.2 79.4 L181.9 81.4 L182.6 84.0 L183.2 87.1 L183.9 90.5 L184.5 94.1 L185.2 97.8 L185.9 101.6 L186.5 105.3 L187.2 109.0 L187.9 112.7 L188.5 116.2 L189.2 119.7 L189.8 123.0 L190.5 126.2 L191.2 129.3 L191.8 132.3 L192.5 135.2 L193.2 137.9 L193.8 140.6 L194.5 143.1 L195.1 145.5 L195.8 147.9 L196.5 150.1 L197.1 152.2 L197.8 154.2 L198.5 156.2 L199.1 158.0 L199.8 159.8 L200.4 161.5 L201.1 163.1 L201.8 164.6 L202.4 166.1 L203.1 167.5 L203.7 168.8 L204.4 170.1 L205.1 171.3 L205.7 172.5 L206.4 173.6 L207.1 174.6 L207.7 175.6 L208.4 176.6 L209.0 177.5 L209.7 178.4 L210.4 179.2 L211.0 180.0 L211.7 180.7 L212.4 181.5 L213.0 182.1 L213.7 182.8 L214.3 183.4 L215.0 184.0 L215.7 184.6 L216.3 185.1 L217.0 185.6 L217.7 186.1 L218.3 186.6 L219.0 187.0 L219.6 187.5 L220.3 187.9 L221.0 188.2 L221.6 188.6 L222.3 189.0 L223.0 189.3 L223.6 189.6 L224.3 189.9 L224.9 190.2 L225.6 190.5 L226.3 190.7 L226.9 191.0 L227.6 191.2 L228.2 191.4 L228.9 191.7 L229.6 191.9 L230.2 192.1 L230.9 192.3 L231.6 192.4 L232.2 192.6 L232.9 192.8 L233.5 192.9 L234.2 193.1 L234.9 193.2 L235.5 193.3 L236.2 193.5 L236.9 193.6 L237.5 193.7 L238.2 193.8 L238.8 193.9 L239.5 194.0 L240.2 194.1 L240.8 194.2 L241.5 194.3 L242.2 194.4 L242.8 194.4 L243.5 194.5 L244.1 194.6 L244.8 194.6 L245.5 194.7 L246.1 194.8 L246.8 194.8 L247.4 194.9 L248.1 194.9 L248.8 195.0 L249.4 195.0 L250.1 195.1 L250.8 195.1 L251.4 195.2 L252.1 195.2 L252.7 195.2 L253.4 195.3 L254.1 195.3 L254.7 195.3 L255.4 195.4 L256.1 195.4 L256.7 195.4 L257.4 195.5 L258.0 195.5 L258.7 195.5 L259.4 195.5 L260.0 195.6 L260.7 195.6 L261.4 195.6 L262.0 195.6 L262.7 195.6 L263.3 195.7 L264.0 195.7 L264.7 195.7 L265.3 195.7 L266.0 195.7 L266.7 195.7 L267.3 195.7 L268.0 195.8 L268.6 195.8 L269.3 195.8 L270.0 195.8 L270.6 195.8 L271.3 195.8 L271.9 195.8 L272.6 195.8 L273.3 195.8 L273.9 195.8 L274.6 195.8 L275.3 195.9 L275.9 195.9 L276.6 195.9 L277.2 195.9 L277.9 195.9 L278.6 195.9 L279.2 195.9 L279.9 195.9 L280.6 195.9 L281.2 195.9 L281.9 195.9 L282.5 195.9 L283.2 195.9 L283.9 195.9 L284.5 195.9 L285.2 195.9 L285.9 195.9 L286.5 195.9 L287.2 195.9 L287.8 195.9 L288.5 195.9" fill="none" stroke="#5d86ab" stroke-width="1"/><text x="183.5" y="188.5" font-size="10.5" font-weight="bold" fill="#e09540" text-anchor="middle">RT Cal</text><path d="M140.0 199.0L146.0 189.0L152.0 199.0Z" fill="#e2923c"/><path d="M247.7 199.0L253.7 189.0L259.7 199.0Z" fill="#e2923c"/><ellipse cx="78.5" cy="47.9" rx="6.1" ry="7.4" fill="none" stroke="#1f5f94" stroke-width="1.3"/><text x="78.3" y="51.8" font-size="10.8" fill="#1f5f94" stroke="#1f5f94" stroke-width=".3" text-anchor="middle">1</text><text x="90.0" y="52.0" font-size="11.4" font-weight="bold" fill="#1f5f94">Q: 374.3 &gt; 302.15</text><path d="M190.8 52.2l-4.4 0l4.4 -7.4l4.4 7.4z" fill="#185a8d"/><ellipse cx="78.5" cy="64.2" rx="6.1" ry="7.4" fill="none" stroke="#4fc04f" stroke-width="1.3"/><text x="78.3" y="68.1" font-size="10.8" fill="#4fc04f" stroke="#4fc04f" stroke-width=".3" text-anchor="middle">2</text><text x="90.0" y="68.0" font-size="10.85" fill="#4fc04f">Q: 374.3 &gt; 216.1</text><g transform="translate(259.5,40.5) scale(.96)"><path fill="#3d74ad" d="M11 17h2v-6h-2v6zm1-15C6.48 2 2 6.48 2 12s4.48 10 10 10 10-4.48 10-10S17.52 2 12 2zm0 18c-4.41 0-8-3.59-8-8s3.59-8 8-8 8 3.59 8 8-3.59 8-8 8zM11 9h2V7h-2v2z"/></g></svg>
<svg class="ic" style="left:385px;top:904px;overflow:visible" width="284" height="227" viewBox="0 0 284 227"><path d="M74.5 34.0V196.0M128.5 34.0V196.0M182.5 34.0V196.0M236.5 34.0V196.0M288.5 34.0V196.0M70.0 34.5H288.5M70.0 108.5H288.5M70.0 196.5H288.5M70.0 34.5H288.5" stroke="#dedede" stroke-width="1" fill="none"/><path d="M69.5 34.0V196.0M60.0 34.5H70.0M60.0 108.5H70.0M60.0 196.5H70.0M60.0 34.5H70.0" stroke="#cfcfcf" stroke-width="1" fill="none"/><path d="M74.5 34.0V196.0" stroke="#c4c4c4" stroke-width="1" fill="none"/><g font-size="12" fill="#666" text-anchor="end"><text x="59.0" y="38.4">3.7e+5</text><text x="59.0" y="112.8">2.0e+5</text><text x="59.0" y="200.4">0.0</text></g><g font-size="12" fill="#666" text-anchor="middle"><text x="70.0" y="217.0">9.0</text><text x="74.5" y="217.0">9.0</text><text x="128.5" y="217.0">9.2</text><text x="182.5" y="217.0">9.4</text><text x="236.5" y="217.0">9.6</text><text x="288.0" y="217.0">9.8</text></g><text x="158.0" y="21.0" font-size="12.3" font-weight="bold" fill="#555" text-anchor="middle">std 10 fin</text><path d="M182.8 34.0V196.0" stroke="#f6c79a" stroke-width="1.7"/><path d="M179.3 34.0V196.0" stroke="#4f7fb0" stroke-width="1.1"/><text x="179.8" y="46.5" font-size="10.5" fill="#8db2d8" text-anchor="middle">RT Cor</text><path d="M150.7 196.0L150.8 195.8 L151.4 195.8 L152.1 195.8 L152.8 195.9 L153.4 195.9 L154.1 195.9 L154.8 195.9 L155.4 195.8 L156.1 195.8 L156.7 195.7 L157.4 195.6 L158.1 195.3 L158.7 195.0 L159.4 194.6 L160.0 193.9 L160.7 193.1 L161.4 192.0 L162.0 190.5 L162.7 188.7 L163.4 186.5 L164.0 183.7 L164.7 180.5 L165.3 176.7 L166.0 172.4 L166.7 167.5 L167.3 162.2 L168.0 156.4 L168.7 150.3 L169.3 143.8 L170.0 137.3 L170.6 130.6 L171.3 124.0 L172.0 117.6 L172.6 111.4 L173.3 105.6 L174.0 100.2 L174.6 95.4 L175.3 91.1 L175.9 87.3 L176.6 84.1 L177.3 81.4 L177.9 79.3 L178.6 77.7 L179.3 76.5 L179.9 75.7 L180.6 75.1 L181.2 74.9 L181.9 74.7 L182.6 74.7 L183.2 74.9 L183.9 75.9 L184.5 77.5 L185.2 79.7 L185.9 82.4 L186.5 85.3 L187.2 88.6 L187.9 91.9 L188.5 95.4 L189.2 98.9 L189.8 102.3 L190.5 105.8 L191.2 109.1 L191.8 112.5 L192.5 115.7 L193.2 118.8 L193.8 121.9 L194.5 124.8 L195.1 127.7 L195.8 130.5 L196.5 133.1 L197.1 135.7 L197.8 138.2 L198.5 140.5 L199.1 142.8 L199.8 145.0 L200.4 147.1 L201.1 149.2 L201.8 151.1 L202.4 153.0 L203.1 154.8 L203.7 156.5 L204.4 158.2 L205.1 159.8 L205.7 161.3 L206.4 162.8 L207.1 164.2 L207.7 165.5 L208.4 166.8 L209.0 168.0 L209.7 169.2 L210.4 170.3 L211.0 171.4 L211.7 172.5 L212.4 173.5 L213.0 174.4 L213.7 175.3 L214.3 176.2 L215.0 177.0 L215.7 177.8 L216.3 178.6 L217.0 179.4 L217.7 180.1 L218.3 180.7 L219.0 181.4 L219.6 182.0 L220.3 182.6 L221.0 183.2 L221.6 183.7 L222.3 184.2 L223.0 184.7 L223.6 185.2 L224.3 185.7 L224.9 186.1 L225.6 186.5 L226.3 186.9 L226.9 187.3 L227.6 187.7 L228.2 188.1 L228.9 188.4 L229.6 188.7 L230.2 189.0 L230.9 189.3 L231.6 189.6 L232.2 189.9 L232.9 190.1 L233.5 190.4 L234.2 190.6 L234.9 190.9 L235.5 191.1 L236.2 191.3 L236.9 191.5 L237.5 191.7 L238.2 191.9 L238.8 192.0 L239.5 192.2 L240.2 192.4 L240.8 192.5 L241.5 192.7 L242.2 192.8 L242.8 193.0 L243.0 196.0Z" fill="#eeb27a" fill-opacity=".5"/><path d="M150.7 196.0L150.8 195.8 L151.4 195.8 L152.1 195.8 L152.8 195.9 L153.4 195.9 L154.1 195.9 L154.8 195.9 L155.4 195.8 L156.1 195.8 L156.7 195.7 L157.4 195.6 L158.1 195.3 L158.7 195.0 L159.4 194.6 L160.0 193.9 L160.7 193.1 L161.4 192.0 L162.0 190.5 L162.7 188.7 L163.4 186.5 L164.0 183.7 L164.7 180.5 L165.3 176.7 L166.0 172.4 L166.7 167.5 L167.3 162.2 L168.0 156.4 L168.7 150.3 L169.3 143.8 L170.0 137.3 L170.6 130.6 L171.3 124.0 L172.0 117.6 L172.6 111.4 L173.3 105.6 L174.0 100.2 L174.6 95.4 L175.3 91.1 L175.9 87.3 L176.6 84.1 L177.3 81.4 L177.9 79.3 L178.6 77.7 L179.3 76.5 L179.9 75.7 L180.6 75.1 L181.2 74.9 L181.9 74.7 L182.6 74.7 L183.2 74.9 L183.9 75.9 L184.5 77.5 L185.2 79.7 L185.9 82.4 L186.5 85.3 L187.2 88.6 L187.9 91.9 L188.5 95.4 L189.2 98.9 L189.8 102.3 L190.5 105.8 L191.2 109.1 L191.8 112.5 L192.5 115.7 L193.2 118.8 L193.8 121.9 L194.5 124.8 L195.1 127.7 L195.8 130.5 L196.5 133.1 L197.1 135.7 L197.8 138.2 L198.5 140.5 L199.1 142.8 L199.8 145.0 L200.4 147.1 L201.1 149.2 L201.8 151.1 L202.4 153.0 L203.1 154.8 L203.7 156.5 L204.4 158.2 L205.1 159.8 L205.7 161.3 L206.4 162.8 L207.1 164.2 L207.7 165.5 L208.4 166.8 L209.0 168.0 L209.7 169.2 L210.4 170.3 L211.0 171.4 L211.7 172.5 L212.4 173.5 L213.0 174.4 L213.7 175.3 L214.3 176.2 L215.0 177.0 L215.7 177.8 L216.3 178.6 L217.0 179.4 L217.7 180.1 L218.3 180.7 L219.0 181.4 L219.6 182.0 L220.3 182.6 L221.0 183.2 L221.6 183.7 L222.3 184.2 L223.0 184.7 L223.6 185.2 L224.3 185.7 L224.9 186.1 L225.6 186.5 L226.3 186.9 L226.9 187.3 L227.6 187.7 L228.2 188.1 L228.9 188.4 L229.6 188.7 L230.2 189.0 L230.9 189.3 L231.6 189.6 L232.2 189.9 L232.9 190.1 L233.5 190.4 L234.2 190.6 L234.9 190.9 L235.5 191.1 L236.2 191.3 L236.9 191.5 L237.5 191.7 L238.2 191.9 L238.8 192.0 L239.5 192.2 L240.2 192.4 L240.8 192.5 L241.5 192.7 L242.2 192.8 L242.8 193.0 L243.0 196.0Z" fill="url(#hatch)" fill-opacity=".16"/><path d="M182.8 74.7V196.0" stroke="#eaa96d" stroke-width="1.5"/><path d="M179.3 76.4V196.0" stroke="#7b858f" stroke-width="1.5"/><path d="M70.0 196.0 L70.7 196.0 L71.3 196.0 L72.0 196.0 L72.6 196.0 L73.3 196.0 L74.0 196.0 L74.6 196.0 L75.3 196.0 L76.0 196.0 L76.6 196.0 L77.3 196.0 L77.9 196.0 L78.6 196.0 L79.3 196.0 L79.9 196.0 L80.6 196.0 L81.3 196.0 L81.9 196.0 L82.6 196.0 L83.2 196.0 L83.9 196.0 L84.6 196.0 L85.2 196.0 L85.9 196.0 L86.6 196.0 L87.2 196.0 L87.9 196.0 L88.5 196.0 L89.2 196.0 L89.9 196.0 L90.5 196.0 L91.2 196.0 L91.9 196.0 L92.5 196.0 L93.2 196.0 L93.8 196.0 L94.5 196.0 L95.2 196.0 L95.8 196.0 L96.5 196.0 L97.1 196.0 L97.8 196.0 L98.5 196.0 L99.1 196.0 L99.8 196.0 L100.5 196.0 L101.1 196.0 L101.8 196.0 L102.4 196.0 L103.1 196.0 L103.8 196.0 L104.4 196.0 L105.1 196.0 L105.8 196.0 L106.4 196.0 L107.1 196.0 L107.7 196.0 L108.4 196.0 L109.1 196.0 L109.7 196.0 L110.4 196.0 L111.1 196.0 L111.7 196.0 L112.4 196.0 L113.0 195.9 L113.7 195.9 L114.4 195.9 L115.0 195.9 L115.7 195.9 L116.3 195.8 L117.0 195.8 L117.7 195.8 L118.3 195.7 L119.0 195.7 L119.7 195.6 L120.3 195.6 L121.0 195.5 L121.6 195.4 L122.3 195.3 L123.0 195.3 L123.6 195.2 L124.3 195.1 L125.0 195.0 L125.6 194.8 L126.3 194.7 L126.9 194.6 L127.6 194.5 L128.3 194.4 L128.9 194.3 L129.6 194.2 L130.3 194.1 L130.9 194.0 L131.6 193.9 L132.2 193.8 L132.9 193.8 L133.6 193.7 L134.2 193.7 L134.9 193.7 L135.6 193.7 L136.2 193.7 L136.9 193.7 L137.5 193.8 L138.2 193.8 L138.9 193.9 L139.5 194.0 L140.2 194.1 L140.8 194.2 L141.5 194.3 L142.2 194.4 L142.8 194.5 L143.5 194.6 L144.2 194.7 L144.8 194.9 L145.5 195.0 L146.1 195.1 L146.8 195.2 L147.5 195.3 L148.1 195.3 L148.8 195.4 L149.5 195.5 L150.1 195.6 L150.8 195.6 L151.4 195.7 L152.1 195.7 L152.8 195.7 L153.4 195.7 L154.1 195.7 L154.8 195.7 L155.4 195.6 L156.1 195.4 L156.7 195.2 L157.4 194.8 L158.1 194.3 L158.7 193.6 L159.4 192.6 L160.0 191.4 L160.7 189.8 L161.4 187.7 L162.0 185.2 L162.7 182.1 L163.4 178.4 L164.0 174.2 L164.7 169.3 L165.3 163.8 L166.0 157.7 L166.7 151.0 L167.3 143.9 L168.0 136.4 L168.7 128.7 L169.3 120.8 L170.0 112.9 L170.6 105.1 L171.3 97.5 L172.0 90.2 L172.6 83.5 L173.3 77.2 L174.0 71.5 L174.6 66.5 L175.3 62.1 L175.9 58.3 L176.6 55.2 L177.3 52.7 L177.9 50.8 L178.6 49.3 L179.3 48.3 L179.9 47.7 L180.6 47.3 L181.2 47.2 L181.9 47.1 L182.6 47.3 L183.2 48.2 L183.9 50.0 L184.5 52.4 L185.2 55.4 L185.9 58.9 L186.5 62.6 L187.2 66.6 L187.9 70.6 L188.5 74.8 L189.2 78.9 L189.8 83.0 L190.5 87.1 L191.2 91.1 L191.8 95.0 L192.5 98.8 L193.2 102.5 L193.8 106.1 L194.5 109.6 L195.1 113.0 L195.8 116.3 L196.5 119.4 L197.1 122.5 L197.8 125.4 L198.5 128.2 L199.1 130.9 L199.8 133.6 L200.4 136.1 L201.1 138.5 L201.8 140.8 L202.4 143.1 L203.1 145.2 L203.7 147.3 L204.4 149.3 L205.1 151.2 L205.7 153.0 L206.4 154.7 L207.1 156.4 L207.7 158.1 L208.4 159.6 L209.0 161.1 L209.7 162.5 L210.4 163.9 L211.0 165.2 L211.7 166.5 L212.4 167.7 L213.0 168.9 L213.7 170.0 L214.3 171.1 L215.0 172.1 L215.7 173.1 L216.3 174.0 L217.0 174.9 L217.7 175.8 L218.3 176.6 L219.0 177.4 L219.6 178.2 L220.3 178.9 L221.0 179.6 L221.6 180.3 L222.3 181.0 L223.0 181.6 L223.6 182.2 L224.3 182.8 L224.9 183.3 L225.6 183.8 L226.3 184.3 L226.9 184.8 L227.6 185.3 L228.2 185.7 L228.9 186.1 L229.6 186.6 L230.2 186.9 L230.9 187.3 L231.6 187.7 L232.2 188.0 L232.9 188.4 L233.5 188.7 L234.2 189.0 L234.9 189.3 L235.5 189.5 L236.2 189.8 L236.9 190.1 L237.5 190.3 L238.2 190.6 L238.8 190.8 L239.5 191.0 L240.2 191.2 L240.8 191.4 L241.5 191.6 L242.2 191.8 L242.8 192.0 L243.5 192.1 L244.1 192.3 L244.8 192.4 L245.5 192.6 L246.1 192.7 L246.8 192.9 L247.4 193.0 L248.1 193.1 L248.8 193.2 L249.4 193.4 L250.1 193.5 L250.8 193.6 L251.4 193.7 L252.1 193.8 L252.7 193.9 L253.4 193.9 L254.1 194.0 L254.7 194.1 L255.4 194.2 L256.1 194.3 L256.7 194.3 L257.4 194.4 L258.0 194.5 L258.7 194.5 L259.4 194.6 L260.0 194.7 L260.7 194.7 L261.4 194.8 L262.0 194.8 L262.7 194.9 L263.3 194.9 L264.0 195.0 L264.7 195.0 L265.3 195.0 L266.0 195.1 L266.7 195.1 L267.3 195.2 L268.0 195.2 L268.6 195.2 L269.3 195.3 L270.0 195.3 L270.6 195.3 L271.3 195.3 L271.9 195.4 L272.6 195.4 L273.3 195.4 L273.9 195.4 L274.6 195.5 L275.3 195.5 L275.9 195.5 L276.6 195.5 L277.2 195.6 L277.9 195.6 L278.6 195.6 L279.2 195.6 L279.9 195.6 L280.6 195.6 L281.2 195.7 L281.9 195.7 L282.5 195.7 L283.2 195.7 L283.9 195.7 L284.5 195.7 L285.2 195.7 L285.9 195.7 L286.5 195.8 L287.2 195.8 L287.8 195.8 L288.5 195.8" fill="none" stroke="#7fd07f" stroke-width="1"/><path d="M70.0 196.0 L70.7 196.0 L71.3 196.0 L72.0 196.0 L72.6 196.0 L73.3 196.0 L74.0 196.0 L74.6 196.0 L75.3 196.0 L76.0 196.0 L76.6 196.0 L77.3 196.0 L77.9 196.0 L78.6 196.0 L79.3 196.0 L79.9 196.0 L80.6 196.0 L81.3 196.0 L81.9 196.0 L82.6 196.0 L83.2 196.0 L83.9 196.0 L84.6 196.0 L85.2 196.0 L85.9 196.0 L86.6 196.0 L87.2 196.0 L87.9 196.0 L88.5 196.0 L89.2 196.0 L89.9 196.0 L90.5 196.0 L91.2 196.0 L91.9 196.0 L92.5 196.0 L93.2 196.0 L93.8 196.0 L94.5 196.0 L95.2 196.0 L95.8 196.0 L96.5 196.0 L97.1 196.0 L97.8 196.0 L98.5 196.0 L99.1 196.0 L99.8 196.0 L100.5 196.0 L101.1 196.0 L101.8 196.0 L102.4 196.0 L103.1 196.0 L103.8 196.0 L104.4 196.0 L105.1 196.0 L105.8 196.0 L106.4 196.0 L107.1 196.0 L107.7 196.0 L108.4 196.0 L109.1 196.0 L109.7 196.0 L110.4 196.0 L111.1 196.0 L111.7 196.0 L112.4 196.0 L113.0 196.0 L113.7 196.0 L114.4 195.9 L115.0 195.9 L115.7 195.9 L116.3 195.9 L117.0 195.9 L117.7 195.9 L118.3 195.8 L119.0 195.8 L119.7 195.8 L120.3 195.7 L121.0 195.7 L121.6 195.6 L122.3 195.6 L123.0 195.5 L123.6 195.5 L124.3 195.4 L125.0 195.3 L125.6 195.3 L126.3 195.2 L126.9 195.1 L127.6 195.1 L128.3 195.0 L128.9 194.9 L129.6 194.9 L130.3 194.8 L130.9 194.7 L131.6 194.7 L132.2 194.6 L132.9 194.6 L133.6 194.6 L134.2 194.6 L134.9 194.5 L135.6 194.5 L136.2 194.6 L136.9 194.6 L137.5 194.6 L138.2 194.6 L138.9 194.7 L139.5 194.7 L140.2 194.8 L140.8 194.9 L141.5 194.9 L142.2 195.0 L142.8 195.1 L143.5 195.1 L144.2 195.2 L144.8 195.3 L145.5 195.3 L146.1 195.4 L146.8 195.5 L147.5 195.5 L148.1 195.6 L148.8 195.6 L149.5 195.7 L150.1 195.7 L150.8 195.8 L151.4 195.8 L152.1 195.8 L152.8 195.9 L153.4 195.9 L154.1 195.9 L154.8 195.9 L155.4 195.8 L156.1 195.8 L156.7 195.7 L157.4 195.6 L158.1 195.3 L158.7 195.0 L159.4 194.6 L160.0 193.9 L160.7 193.1 L161.4 192.0 L162.0 190.5 L162.7 188.7 L163.4 186.5 L164.0 183.7 L164.7 180.5 L165.3 176.7 L166.0 172.4 L166.7 167.5 L167.3 162.2 L168.0 156.4 L168.7 150.3 L169.3 143.8 L170.0 137.3 L170.6 130.6 L171.3 124.0 L172.0 117.6 L172.6 111.4 L173.3 105.6 L174.0 100.2 L174.6 95.4 L175.3 91.1 L175.9 87.3 L176.6 84.1 L177.3 81.4 L177.9 79.3 L178.6 77.7 L179.3 76.5 L179.9 75.7 L180.6 75.1 L181.2 74.9 L181.9 74.7 L182.6 74.7 L183.2 74.9 L183.9 75.9 L184.5 77.5 L185.2 79.7 L185.9 82.4 L186.5 85.3 L187.2 88.6 L187.9 91.9 L188.5 95.4 L189.2 98.9 L189.8 102.3 L190.5 105.8 L191.2 109.1 L191.8 112.5 L192.5 115.7 L193.2 118.8 L193.8 121.9 L194.5 124.8 L195.1 127.7 L195.8 130.5 L196.5 133.1 L197.1 135.7 L197.8 138.2 L198.5 140.5 L199.1 142.8 L199.8 145.0 L200.4 147.1 L201.1 149.2 L201.8 151.1 L202.4 153.0 L203.1 154.8 L203.7 156.5 L204.4 158.2 L205.1 159.8 L205.7 161.3 L206.4 162.8 L207.1 164.2 L207.7 165.5 L208.4 166.8 L209.0 168.0 L209.7 169.2 L210.4 170.3 L211.0 171.4 L211.7 172.5 L212.4 173.5 L213.0 174.4 L213.7 175.3 L214.3 176.2 L215.0 177.0 L215.7 177.8 L216.3 178.6 L217.0 179.4 L217.7 180.1 L218.3 180.7 L219.0 181.4 L219.6 182.0 L220.3 182.6 L221.0 183.2 L221.6 183.7 L222.3 184.2 L223.0 184.7 L223.6 185.2 L224.3 185.7 L224.9 186.1 L225.6 186.5 L226.3 186.9 L226.9 187.3 L227.6 187.7 L228.2 188.1 L228.9 188.4 L229.6 188.7 L230.2 189.0 L230.9 189.3 L231.6 189.6 L232.2 189.9 L232.9 190.1 L233.5 190.4 L234.2 190.6 L234.9 190.9 L235.5 191.1 L236.2 191.3 L236.9 191.5 L237.5 191.7 L238.2 191.9 L238.8 192.0 L239.5 192.2 L240.2 192.4 L240.8 192.5 L241.5 192.7 L242.2 192.8 L242.8 193.0 L243.5 193.1 L244.1 193.2 L244.8 193.3 L245.5 193.4 L246.1 193.6 L246.8 193.7 L247.4 193.8 L248.1 193.9 L248.8 193.9 L249.4 194.0 L250.1 194.1 L250.8 194.2 L251.4 194.3 L252.1 194.3 L252.7 194.4 L253.4 194.5 L254.1 194.6 L254.7 194.6 L255.4 194.7 L256.1 194.7 L256.7 194.8 L257.4 194.8 L258.0 194.9 L258.7 194.9 L259.4 195.0 L260.0 195.0 L260.7 195.1 L261.4 195.1 L262.0 195.1 L262.7 195.2 L263.3 195.2 L264.0 195.2 L264.7 195.3 L265.3 195.3 L266.0 195.3 L266.7 195.4 L267.3 195.4 L268.0 195.4 L268.6 195.4 L269.3 195.5 L270.0 195.5 L270.6 195.5 L271.3 195.5 L271.9 195.6 L272.6 195.6 L273.3 195.6 L273.9 195.6 L274.6 195.6 L275.3 195.6 L275.9 195.7 L276.6 195.7 L277.2 195.7 L277.9 195.7 L278.6 195.7 L279.2 195.7 L279.9 195.7 L280.6 195.7 L281.2 195.8 L281.9 195.8 L282.5 195.8 L283.2 195.8 L283.9 195.8 L284.5 195.8 L285.2 195.8 L285.9 195.8 L286.5 195.8 L287.2 195.8 L287.8 195.8 L288.5 195.9" fill="none" stroke="#5d86ab" stroke-width="1"/><text x="183.3" y="188.5" font-size="10.5" font-weight="bold" fill="#e09540" text-anchor="middle">RT Cal</text><path d="M144.7 199.0L150.7 189.0L156.7 199.0Z" fill="#e2923c"/><path d="M237.0 199.0L243.0 189.0L249.0 199.0Z" fill="#e2923c"/><ellipse cx="78.5" cy="47.9" rx="6.1" ry="7.4" fill="none" stroke="#1f5f94" stroke-width="1.3"/><text x="78.3" y="51.8" font-size="10.8" fill="#1f5f94" stroke="#1f5f94" stroke-width=".3" text-anchor="middle">1</text><text x="90.0" y="52.0" font-size="11.4" font-weight="bold" fill="#1f5f94">Q: 374.3 &gt; 302.15</text><path d="M190.8 52.2l-4.4 0l4.4 -7.4l4.4 7.4z" fill="#185a8d"/><ellipse cx="78.5" cy="64.2" rx="6.1" ry="7.4" fill="none" stroke="#4fc04f" stroke-width="1.3"/><text x="78.3" y="68.1" font-size="10.8" fill="#4fc04f" stroke="#4fc04f" stroke-width=".3" text-anchor="middle">2</text><text x="90.0" y="68.0" font-size="10.85" fill="#4fc04f">Q: 374.3 &gt; 216.1</text><g transform="translate(259.5,40.5) scale(.96)"><path fill="#3d74ad" d="M11 17h2v-6h-2v6zm1-15C6.48 2 2 6.48 2 12s4.48 10 10 10 10-4.48 10-10S17.52 2 12 2zm0 18c-4.41 0-8-3.59-8-8s3.59-8 8-8 8 3.59 8 8-3.59 8-8 8zM11 9h2V7h-2v2z"/></g></svg>
<svg class="ic" style="left:669px;top:904px;overflow:visible" width="284" height="227" viewBox="0 0 284 227"><rect x="70" y="34" width="218.5" height="162" fill="#fff" opacity=".55"/><path d="M74.5 34.0V196.0M128.5 34.0V196.0M182.5 34.0V196.0M236.5 34.0V196.0M288.5 34.0V196.0M70.0 34.5H288.5M70.0 67.5H288.5M70.0 196.5H288.5M70.0 34.5H288.5" stroke="#dedede" stroke-width="1" fill="none"/><path d="M69.5 34.0V196.0M60.0 34.5H70.0M60.0 67.5H70.0M60.0 196.5H70.0M60.0 34.5H70.0" stroke="#cfcfcf" stroke-width="1" fill="none"/><path d="M74.5 34.0V196.0" stroke="#c4c4c4" stroke-width="1" fill="none"/><g font-size="12" fill="#666" text-anchor="end"><text x="59.0" y="38.4">6.3e+5</text><text x="59.0" y="71.8">5.0e+5</text><text x="59.0" y="200.4">0.0</text></g><g font-size="12" fill="#666" text-anchor="middle"><text x="70.0" y="217.0">9.0</text><text x="74.5" y="217.0">9.0</text><text x="128.5" y="217.0">9.2</text><text x="182.5" y="217.0">9.4</text><text x="236.5" y="217.0">9.6</text><text x="288.0" y="217.0">9.8</text></g><text x="158.0" y="21.0" font-size="12.3" font-weight="bold" fill="#555" text-anchor="middle">172937</text><path d="M183.5 34.0V196.0" stroke="#f6c79a" stroke-width="1.7"/><path d="M184.3 34.0V196.0" stroke="#a4c1e0" stroke-width="1.7"/><text x="184.8" y="46.5" font-size="10.5" fill="#8db2d8" text-anchor="middle">RT Cor</text><path d="M153.0 196.0L153.4 195.9 L154.1 195.9 L154.8 195.9 L155.4 195.9 L156.1 195.9 L156.7 195.9 L157.4 195.9 L158.1 195.8 L158.7 195.7 L159.4 195.5 L160.0 195.3 L160.7 195.0 L161.4 194.5 L162.0 193.8 L162.7 192.9 L163.4 191.7 L164.0 190.2 L164.7 188.3 L165.3 185.9 L166.0 183.1 L166.7 179.7 L167.3 175.8 L168.0 171.3 L168.7 166.3 L169.3 160.8 L170.0 154.8 L170.6 148.5 L171.3 142.0 L172.0 135.2 L172.6 128.5 L173.3 121.8 L174.0 115.3 L174.6 109.0 L175.3 103.2 L175.9 97.8 L176.6 92.9 L177.3 88.6 L177.9 84.9 L178.6 81.7 L179.3 79.1 L179.9 77.0 L180.6 75.4 L181.2 74.2 L181.9 73.4 L182.6 72.9 L183.2 72.7 L183.9 72.6 L184.5 72.6 L185.2 72.9 L185.9 74.0 L186.5 75.7 L187.2 78.0 L187.9 80.8 L188.5 83.9 L189.2 87.2 L189.8 90.6 L190.5 94.1 L191.2 97.6 L191.8 101.2 L192.5 104.7 L193.2 108.1 L193.8 111.5 L194.5 114.7 L195.1 117.9 L195.8 121.0 L196.5 124.0 L197.1 126.9 L197.8 129.7 L198.5 132.4 L199.1 135.0 L199.8 137.5 L200.4 139.9 L201.1 142.2 L201.8 144.4 L202.4 146.6 L203.1 148.6 L203.7 150.6 L204.4 152.5 L205.1 154.3 L205.7 156.1 L206.4 157.7 L207.1 159.4 L207.7 160.9 L208.4 162.4 L209.0 163.8 L209.7 165.1 L210.4 166.4 L211.0 167.7 L211.7 168.9 L212.4 170.0 L213.0 171.1 L213.7 172.2 L214.3 173.2 L215.0 174.2 L215.7 175.1 L216.3 176.0 L217.0 176.8 L217.7 177.6 L218.3 178.4 L219.0 179.2 L219.6 179.9 L220.3 180.6 L221.0 181.2 L221.6 181.9 L222.3 182.5 L223.0 183.0 L223.6 183.6 L224.3 184.1 L224.9 184.6 L225.6 185.1 L226.3 185.6 L226.9 186.0 L227.6 186.4 L228.2 186.8 L228.9 187.2 L229.6 187.6 L230.2 188.0 L230.9 188.3 L231.6 188.6 L232.2 189.0 L232.9 189.3 L233.5 189.5 L234.2 189.8 L234.9 190.1 L235.5 190.3 L236.2 190.6 L236.9 190.8 L237.5 191.0 L238.2 191.2 L238.8 191.4 L239.5 191.6 L240.2 191.8 L240.8 192.0 L241.5 192.2 L242.2 192.3 L242.8 192.5 L243.5 192.6 L244.1 192.8 L244.8 192.9 L245.5 193.1 L246.1 193.2 L246.8 193.3 L247.4 193.4 L248.1 193.5 L248.8 193.6 L249.4 193.7 L250.1 193.8 L250.8 193.9 L251.4 194.0 L252.1 194.1 L252.7 194.2 L253.4 194.3 L254.1 194.3 L254.7 194.4 L255.4 194.5 L256.1 194.5 L256.7 194.6 L257.4 194.7 L258.0 194.7 L258.7 194.8 L259.4 194.8 L260.0 194.9 L260.7 194.9 L261.4 195.0 L262.0 195.0 L262.7 195.1 L263.3 195.1 L264.0 195.1 L264.7 195.2 L265.3 195.2 L266.0 195.2 L266.7 195.3 L267.3 195.3 L268.0 195.3 L268.6 195.4 L269.3 195.4 L270.0 195.4 L270.6 195.4 L271.3 195.5 L271.9 195.5 L272.6 195.5 L273.3 195.5 L273.9 195.6 L274.6 195.6 L275.3 195.6 L275.5 196.0Z" fill="#eeb27a" fill-opacity=".5"/><path d="M153.0 196.0L153.4 195.9 L154.1 195.9 L154.8 195.9 L155.4 195.9 L156.1 195.9 L156.7 195.9 L157.4 195.9 L158.1 195.8 L158.7 195.7 L159.4 195.5 L160.0 195.3 L160.7 195.0 L161.4 194.5 L162.0 193.8 L162.7 192.9 L163.4 191.7 L164.0 190.2 L164.7 188.3 L165.3 185.9 L166.0 183.1 L166.7 179.7 L167.3 175.8 L168.0 171.3 L168.7 166.3 L169.3 160.8 L170.0 154.8 L170.6 148.5 L171.3 142.0 L172.0 135.2 L172.6 128.5 L173.3 121.8 L174.0 115.3 L174.6 109.0 L175.3 103.2 L175.9 97.8 L176.6 92.9 L177.3 88.6 L177.9 84.9 L178.6 81.7 L179.3 79.1 L179.9 77.0 L180.6 75.4 L181.2 74.2 L181.9 73.4 L182.6 72.9 L183.2 72.7 L183.9 72.6 L184.5 72.6 L185.2 72.9 L185.9 74.0 L186.5 75.7 L187.2 78.0 L187.9 80.8 L188.5 83.9 L189.2 87.2 L189.8 90.6 L190.5 94.1 L191.2 97.6 L191.8 101.2 L192.5 104.7 L193.2 108.1 L193.8 111.5 L194.5 114.7 L195.1 117.9 L195.8 121.0 L196.5 124.0 L197.1 126.9 L197.8 129.7 L198.5 132.4 L199.1 135.0 L199.8 137.5 L200.4 139.9 L201.1 142.2 L201.8 144.4 L202.4 146.6 L203.1 148.6 L203.7 150.6 L204.4 152.5 L205.1 154.3 L205.7 156.1 L206.4 157.7 L207.1 159.4 L207.7 160.9 L208.4 162.4 L209.0 163.8 L209.7 165.1 L210.4 166.4 L211.0 167.7 L211.7 168.9 L212.4 170.0 L213.0 171.1 L213.7 172.2 L214.3 173.2 L215.0 174.2 L215.7 175.1 L216.3 176.0 L217.0 176.8 L217.7 177.6 L218.3 178.4 L219.0 179.2 L219.6 179.9 L220.3 180.6 L221.0 181.2 L221.6 181.9 L222.3 182.5 L223.0 183.0 L223.6 183.6 L224.3 184.1 L224.9 184.6 L225.6 185.1 L226.3 185.6 L226.9 186.0 L227.6 186.4 L228.2 186.8 L228.9 187.2 L229.6 187.6 L230.2 188.0 L230.9 188.3 L231.6 188.6 L232.2 189.0 L232.9 189.3 L233.5 189.5 L234.2 189.8 L234.9 190.1 L235.5 190.3 L236.2 190.6 L236.9 190.8 L237.5 191.0 L238.2 191.2 L238.8 191.4 L239.5 191.6 L240.2 191.8 L240.8 192.0 L241.5 192.2 L242.2 192.3 L242.8 192.5 L243.5 192.6 L244.1 192.8 L244.8 192.9 L245.5 193.1 L246.1 193.2 L246.8 193.3 L247.4 193.4 L248.1 193.5 L248.8 193.6 L249.4 193.7 L250.1 193.8 L250.8 193.9 L251.4 194.0 L252.1 194.1 L252.7 194.2 L253.4 194.3 L254.1 194.3 L254.7 194.4 L255.4 194.5 L256.1 194.5 L256.7 194.6 L257.4 194.7 L258.0 194.7 L258.7 194.8 L259.4 194.8 L260.0 194.9 L260.7 194.9 L261.4 195.0 L262.0 195.0 L262.7 195.1 L263.3 195.1 L264.0 195.1 L264.7 195.2 L265.3 195.2 L266.0 195.2 L266.7 195.3 L267.3 195.3 L268.0 195.3 L268.6 195.4 L269.3 195.4 L270.0 195.4 L270.6 195.4 L271.3 195.5 L271.9 195.5 L272.6 195.5 L273.3 195.5 L273.9 195.6 L274.6 195.6 L275.3 195.6 L275.5 196.0Z" fill="url(#hatch)" fill-opacity=".16"/><path d="M183.5 72.6V196.0" stroke="#eaa96d" stroke-width="1.5"/><path d="M184.3 72.6V196.0" stroke="#7b858f" stroke-width="1.5"/><path d="M70.0 196.0 L70.7 196.0 L71.3 196.0 L72.0 196.0 L72.6 196.0 L73.3 196.0 L74.0 196.0 L74.6 196.0 L75.3 196.0 L76.0 196.0 L76.6 196.0 L77.3 196.0 L77.9 196.0 L78.6 196.0 L79.3 196.0 L79.9 196.0 L80.6 196.0 L81.3 196.0 L81.9 196.0 L82.6 196.0 L83.2 196.0 L83.9 196.0 L84.6 196.0 L85.2 196.0 L85.9 196.0 L86.6 196.0 L87.2 196.0 L87.9 196.0 L88.5 196.0 L89.2 196.0 L89.9 196.0 L90.5 196.0 L91.2 196.0 L91.9 196.0 L92.5 196.0 L93.2 196.0 L93.8 196.0 L94.5 196.0 L95.2 196.0 L95.8 196.0 L96.5 196.0 L97.1 196.0 L97.8 196.0 L98.5 196.0 L99.1 196.0 L99.8 196.0 L100.5 196.0 L101.1 196.0 L101.8 196.0 L102.4 196.0 L103.1 196.0 L103.8 196.0 L104.4 196.0 L105.1 196.0 L105.8 196.0 L106.4 196.0 L107.1 196.0 L107.7 196.0 L108.4 196.0 L109.1 196.0 L109.7 196.0 L110.4 196.0 L111.1 196.0 L111.7 196.0 L112.4 196.0 L113.0 195.9 L113.7 195.9 L114.4 195.9 L115.0 195.9 L115.7 195.9 L116.3 195.8 L117.0 195.8 L117.7 195.8 L118.3 195.7 L119.0 195.7 L119.7 195.6 L120.3 195.6 L121.0 195.5 L121.6 195.4 L122.3 195.3 L123.0 195.3 L123.6 195.2 L124.3 195.1 L125.0 195.0 L125.6 194.8 L126.3 194.7 L126.9 194.6 L127.6 194.5 L128.3 194.4 L128.9 194.3 L129.6 194.2 L130.3 194.1 L130.9 194.0 L131.6 193.9 L132.2 193.8 L132.9 193.8 L133.6 193.7 L134.2 193.7 L134.9 193.7 L135.6 193.7 L136.2 193.7 L136.9 193.7 L137.5 193.8 L138.2 193.8 L138.9 193.9 L139.5 194.0 L140.2 194.1 L140.8 194.2 L141.5 194.3 L142.2 194.4 L142.8 194.5 L143.5 194.6 L144.2 194.7 L144.8 194.8 L145.5 195.0 L146.1 195.1 L146.8 195.2 L147.5 195.3 L148.1 195.3 L148.8 195.4 L149.5 195.5 L150.1 195.6 L150.8 195.6 L151.4 195.7 L152.1 195.7 L152.8 195.8 L153.4 195.8 L154.1 195.8 L154.8 195.8 L155.4 195.8 L156.1 195.8 L156.7 195.7 L157.4 195.6 L158.1 195.4 L158.7 195.2 L159.4 194.8 L160.0 194.2 L160.7 193.5 L161.4 192.5 L162.0 191.2 L162.7 189.5 L163.4 187.4 L164.0 184.7 L164.7 181.6 L165.3 177.8 L166.0 173.5 L166.7 168.5 L167.3 162.9 L168.0 156.7 L168.7 149.9 L169.3 142.7 L170.0 135.2 L170.6 127.4 L171.3 119.5 L172.0 111.6 L172.6 103.8 L173.3 96.2 L174.0 89.0 L174.6 82.3 L175.3 76.1 L175.9 70.5 L176.6 65.5 L177.3 61.2 L177.9 57.6 L178.6 54.5 L179.3 52.1 L179.9 50.3 L180.6 48.9 L181.2 47.9 L181.9 47.3 L182.6 47.0 L183.2 46.9 L183.9 46.9 L184.5 47.1 L185.2 48.2 L185.9 50.0 L186.5 52.6 L187.2 55.6 L187.9 59.1 L188.5 62.9 L189.2 66.9 L189.8 71.0 L190.5 75.2 L191.2 79.3 L191.8 83.4 L192.5 87.5 L193.2 91.5 L193.8 95.4 L194.5 99.2 L195.1 102.9 L195.8 106.5 L196.5 110.0 L197.1 113.3 L197.8 116.6 L198.5 119.7 L199.1 122.8 L199.8 125.7 L200.4 128.5 L201.1 131.2 L201.8 133.8 L202.4 136.3 L203.1 138.7 L203.7 141.0 L204.4 143.3 L205.1 145.4 L205.7 147.5 L206.4 149.5 L207.1 151.3 L207.7 153.2 L208.4 154.9 L209.0 156.6 L209.7 158.2 L210.4 159.8 L211.0 161.3 L211.7 162.7 L212.4 164.0 L213.0 165.4 L213.7 166.6 L214.3 167.8 L215.0 169.0 L215.7 170.1 L216.3 171.2 L217.0 172.2 L217.7 173.2 L218.3 174.1 L219.0 175.0 L219.6 175.9 L220.3 176.7 L221.0 177.5 L221.6 178.3 L222.3 179.0 L223.0 179.7 L223.6 180.4 L224.3 181.0 L224.9 181.6 L225.6 182.2 L226.3 182.8 L226.9 183.4 L227.6 183.9 L228.2 184.4 L228.9 184.9 L229.6 185.3 L230.2 185.8 L230.9 186.2 L231.6 186.6 L232.2 187.0 L232.9 187.4 L233.5 187.7 L234.2 188.1 L234.9 188.4 L235.5 188.7 L236.2 189.0 L236.9 189.3 L237.5 189.6 L238.2 189.8 L238.8 190.1 L239.5 190.3 L240.2 190.6 L240.8 190.8 L241.5 191.0 L242.2 191.2 L242.8 191.4 L243.5 191.6 L244.1 191.8 L244.8 192.0 L245.5 192.1 L246.1 192.3 L246.8 192.4 L247.4 192.6 L248.1 192.7 L248.8 192.9 L249.4 193.0 L250.1 193.1 L250.8 193.2 L251.4 193.4 L252.1 193.5 L252.7 193.6 L253.4 193.7 L254.1 193.8 L254.7 193.9 L255.4 194.0 L256.1 194.0 L256.7 194.1 L257.4 194.2 L258.0 194.3 L258.7 194.3 L259.4 194.4 L260.0 194.5 L260.7 194.5 L261.4 194.6 L262.0 194.7 L262.7 194.7 L263.3 194.8 L264.0 194.8 L264.7 194.9 L265.3 194.9 L266.0 195.0 L266.7 195.0 L267.3 195.0 L268.0 195.1 L268.6 195.1 L269.3 195.2 L270.0 195.2 L270.6 195.2 L271.3 195.3 L271.9 195.3 L272.6 195.3 L273.3 195.3 L273.9 195.4 L274.6 195.4 L275.3 195.4 L275.9 195.5 L276.6 195.5 L277.2 195.5 L277.9 195.5 L278.6 195.5 L279.2 195.6 L279.9 195.6 L280.6 195.6 L281.2 195.6 L281.9 195.6 L282.5 195.6 L283.2 195.7 L283.9 195.7 L284.5 195.7 L285.2 195.7 L285.9 195.7 L286.5 195.7 L287.2 195.7 L287.8 195.7 L288.5 195.8" fill="none" stroke="#7fd07f" stroke-width="1"/><path d="M70.0 196.0 L70.7 196.0 L71.3 196.0 L72.0 196.0 L72.6 196.0 L73.3 196.0 L74.0 196.0 L74.6 196.0 L75.3 196.0 L76.0 196.0 L76.6 196.0 L77.3 196.0 L77.9 196.0 L78.6 196.0 L79.3 196.0 L79.9 196.0 L80.6 196.0 L81.3 196.0 L81.9 196.0 L82.6 196.0 L83.2 196.0 L83.9 196.0 L84.6 196.0 L85.2 196.0 L85.9 196.0 L86.6 196.0 L87.2 196.0 L87.9 196.0 L88.5 196.0 L89.2 196.0 L89.9 196.0 L90.5 196.0 L91.2 196.0 L91.9 196.0 L92.5 196.0 L93.2 196.0 L93.8 196.0 L94.5 196.0 L95.2 196.0 L95.8 196.0 L96.5 196.0 L97.1 196.0 L97.8 196.0 L98.5 196.0 L99.1 196.0 L99.8 196.0 L100.5 196.0 L101.1 196.0 L101.8 196.0 L102.4 196.0 L103.1 196.0 L103.8 196.0 L104.4 196.0 L105.1 196.0 L105.8 196.0 L106.4 196.0 L107.1 196.0 L107.7 196.0 L108.4 196.0 L109.1 196.0 L109.7 196.0 L110.4 196.0 L111.1 196.0 L111.7 196.0 L112.4 196.0 L113.0 196.0 L113.7 196.0 L114.4 195.9 L115.0 195.9 L115.7 195.9 L116.3 195.9 L117.0 195.9 L117.7 195.9 L118.3 195.8 L119.0 195.8 L119.7 195.8 L120.3 195.7 L121.0 195.7 L121.6 195.6 L122.3 195.6 L123.0 195.5 L123.6 195.5 L124.3 195.4 L125.0 195.3 L125.6 195.3 L126.3 195.2 L126.9 195.1 L127.6 195.0 L128.3 195.0 L128.9 194.9 L129.6 194.8 L130.3 194.8 L130.9 194.7 L131.6 194.7 L132.2 194.6 L132.9 194.6 L133.6 194.5 L134.2 194.5 L134.9 194.5 L135.6 194.5 L136.2 194.5 L136.9 194.5 L137.5 194.6 L138.2 194.6 L138.9 194.7 L139.5 194.7 L140.2 194.8 L140.8 194.8 L141.5 194.9 L142.2 195.0 L142.8 195.0 L143.5 195.1 L144.2 195.2 L144.8 195.3 L145.5 195.3 L146.1 195.4 L146.8 195.5 L147.5 195.5 L148.1 195.6 L148.8 195.6 L149.5 195.7 L150.1 195.7 L150.8 195.8 L151.4 195.8 L152.1 195.8 L152.8 195.9 L153.4 195.9 L154.1 195.9 L154.8 195.9 L155.4 195.9 L156.1 195.9 L156.7 195.9 L157.4 195.9 L158.1 195.8 L158.7 195.7 L159.4 195.5 L160.0 195.3 L160.7 195.0 L161.4 194.5 L162.0 193.8 L162.7 192.9 L163.4 191.7 L164.0 190.2 L164.7 188.3 L165.3 185.9 L166.0 183.1 L166.7 179.7 L167.3 175.8 L168.0 171.3 L168.7 166.3 L169.3 160.8 L170.0 154.8 L170.6 148.5 L171.3 142.0 L172.0 135.2 L172.6 128.5 L173.3 121.8 L174.0 115.3 L174.6 109.0 L175.3 103.2 L175.9 97.8 L176.6 92.9 L177.3 88.6 L177.9 84.9 L178.6 81.7 L179.3 79.1 L179.9 77.0 L180.6 75.4 L181.2 74.2 L181.9 73.4 L182.6 72.9 L183.2 72.7 L183.9 72.6 L184.5 72.6 L185.2 72.9 L185.9 74.0 L186.5 75.7 L187.2 78.0 L187.9 80.8 L188.5 83.9 L189.2 87.2 L189.8 90.6 L190.5 94.1 L191.2 97.6 L191.8 101.2 L192.5 104.7 L193.2 108.1 L193.8 111.5 L194.5 114.7 L195.1 117.9 L195.8 121.0 L196.5 124.0 L197.1 126.9 L197.8 129.7 L198.5 132.4 L199.1 135.0 L199.8 137.5 L200.4 139.9 L201.1 142.2 L201.8 144.4 L202.4 146.6 L203.1 148.6 L203.7 150.6 L204.4 152.5 L205.1 154.3 L205.7 156.1 L206.4 157.7 L207.1 159.4 L207.7 160.9 L208.4 162.4 L209.0 163.8 L209.7 165.1 L210.4 166.4 L211.0 167.7 L211.7 168.9 L212.4 170.0 L213.0 171.1 L213.7 172.2 L214.3 173.2 L215.0 174.2 L215.7 175.1 L216.3 176.0 L217.0 176.8 L217.7 177.6 L218.3 178.4 L219.0 179.2 L219.6 179.9 L220.3 180.6 L221.0 181.2 L221.6 181.9 L222.3 182.5 L223.0 183.0 L223.6 183.6 L224.3 184.1 L224.9 184.6 L225.6 185.1 L226.3 185.6 L226.9 186.0 L227.6 186.4 L228.2 186.8 L228.9 187.2 L229.6 187.6 L230.2 188.0 L230.9 188.3 L231.6 188.6 L232.2 189.0 L232.9 189.3 L233.5 189.5 L234.2 189.8 L234.9 190.1 L235.5 190.3 L236.2 190.6 L236.9 190.8 L237.5 191.0 L238.2 191.2 L238.8 191.4 L239.5 191.6 L240.2 191.8 L240.8 192.0 L241.5 192.2 L242.2 192.3 L242.8 192.5 L243.5 192.6 L244.1 192.8 L244.8 192.9 L245.5 193.1 L246.1 193.2 L246.8 193.3 L247.4 193.4 L248.1 193.5 L248.8 193.6 L249.4 193.7 L250.1 193.8 L250.8 193.9 L251.4 194.0 L252.1 194.1 L252.7 194.2 L253.4 194.3 L254.1 194.3 L254.7 194.4 L255.4 194.5 L256.1 194.5 L256.7 194.6 L257.4 194.7 L258.0 194.7 L258.7 194.8 L259.4 194.8 L260.0 194.9 L260.7 194.9 L261.4 195.0 L262.0 195.0 L262.7 195.1 L263.3 195.1 L264.0 195.1 L264.7 195.2 L265.3 195.2 L266.0 195.2 L266.7 195.3 L267.3 195.3 L268.0 195.3 L268.6 195.4 L269.3 195.4 L270.0 195.4 L270.6 195.4 L271.3 195.5 L271.9 195.5 L272.6 195.5 L273.3 195.5 L273.9 195.6 L274.6 195.6 L275.3 195.6 L275.9 195.6 L276.6 195.6 L277.2 195.6 L277.9 195.7 L278.6 195.7 L279.2 195.7 L279.9 195.7 L280.6 195.7 L281.2 195.7 L281.9 195.7 L282.5 195.7 L283.2 195.8 L283.9 195.8 L284.5 195.8 L285.2 195.8 L285.9 195.8 L286.5 195.8 L287.2 195.8 L287.8 195.8 L288.5 195.8" fill="none" stroke="#5d86ab" stroke-width="1"/><text x="184.0" y="188.5" font-size="10.5" font-weight="bold" fill="#e09540" text-anchor="middle">RT Cal</text><path d="M147.0 199.0L153.0 189.0L159.0 199.0Z" fill="#e2923c"/><path d="M269.5 199.0L275.5 189.0L281.5 199.0Z" fill="#e2923c"/><rect x="73.0" y="39.0" width="100" height="35" fill="#fff" opacity=".55"/><ellipse cx="78.5" cy="47.9" rx="6.1" ry="7.4" fill="none" stroke="#1f5f94" stroke-width="1.3"/><text x="78.3" y="51.8" font-size="10.8" fill="#1f5f94" stroke="#1f5f94" stroke-width=".3" text-anchor="middle">1</text><text x="90.0" y="52.0" font-size="11.4" font-weight="bold" fill="#1f5f94">Q: 374.3 &gt; 302.15</text><path d="M190.8 52.2l-4.4 0l4.4 -7.4l4.4 7.4z" fill="#185a8d"/><ellipse cx="78.5" cy="64.2" rx="6.1" ry="7.4" fill="none" stroke="#4fc04f" stroke-width="1.3"/><text x="78.3" y="68.1" font-size="10.8" fill="#4fc04f" stroke="#4fc04f" stroke-width=".3" text-anchor="middle">2</text><text x="90.0" y="68.0" font-size="10.85" fill="#4fc04f">Q: 374.3 &gt; 216.1</text><g transform="translate(259.0,39.5) scale(1)"><path fill="#e38a17" d="M12 5.99L19.53 19H4.47L12 5.99M12 2L1 21h22L12 2zm1 14h-2v2h2v-2zm0-6h-2v4h2v-4z"/></g></svg>
<svg class="ic" style="left:953px;top:904px;overflow:visible" width="284" height="227" viewBox="0 0 284 227"><path d="M74.5 34.0V196.0M128.5 34.0V196.0M182.5 34.0V196.0M236.5 34.0V196.0M288.5 34.0V196.0M70.0 34.5H288.5M70.0 55.5H288.5M70.0 126.5H288.5M70.0 196.5H288.5M70.0 34.5H288.5" stroke="#dedede" stroke-width="1" fill="none"/><path d="M69.5 34.0V196.0M60.0 34.5H70.0M60.0 55.5H70.0M60.0 126.5H70.0M60.0 196.5H70.0M60.0 34.5H70.0" stroke="#cfcfcf" stroke-width="1" fill="none"/><path d="M74.5 34.0V196.0" stroke="#c4c4c4" stroke-width="1" fill="none"/><g font-size="12" fill="#666" text-anchor="end"><text x="59.0" y="38.4">2.3e+5</text><text x="59.0" y="59.5">2.0e+5</text><text x="59.0" y="130.0">1.0e+5</text><text x="59.0" y="200.4">0.0</text></g><g font-size="12" fill="#666" text-anchor="middle"><text x="70.0" y="217.0">9.0</text><text x="74.5" y="217.0">9.0</text><text x="128.5" y="217.0">9.2</text><text x="182.5" y="217.0">9.4</text><text x="236.5" y="217.0">9.6</text><text x="288.0" y="217.0">9.8</text></g><text x="158.0" y="21.0" font-size="12.3" font-weight="bold" fill="#555" text-anchor="middle">std 5ppb</text><path d="M183.0 34.0V196.0" stroke="#f6c79a" stroke-width="1.7"/><path d="M184.5 34.0V196.0" stroke="#a4c1e0" stroke-width="1.7"/><text x="185.0" y="46.5" font-size="10.5" fill="#8db2d8" text-anchor="middle">RT Cor</text><path d="M148.8 196.0L149.5 195.7 L150.1 195.7 L150.8 195.8 L151.4 195.8 L152.1 195.8 L152.8 195.8 L153.4 195.8 L154.1 195.8 L154.8 195.8 L155.4 195.7 L156.1 195.6 L156.7 195.4 L157.4 195.2 L158.1 194.8 L158.7 194.3 L159.4 193.5 L160.0 192.6 L160.7 191.3 L161.4 189.7 L162.0 187.7 L162.7 185.3 L163.4 182.3 L164.0 178.9 L164.7 175.0 L165.3 170.5 L166.0 165.5 L166.7 160.1 L167.3 154.4 L168.0 148.3 L168.7 142.0 L169.3 135.7 L170.0 129.3 L170.6 123.1 L171.3 117.1 L172.0 111.4 L172.6 106.1 L173.3 101.2 L174.0 96.9 L174.6 93.1 L175.3 89.8 L175.9 87.1 L176.6 84.9 L177.3 83.2 L177.9 81.9 L178.6 80.9 L179.3 80.3 L179.9 80.0 L180.6 79.8 L181.2 79.8 L181.9 79.8 L182.6 80.5 L183.2 81.8 L183.9 83.7 L184.5 86.1 L185.2 88.9 L185.9 91.9 L186.5 95.1 L187.2 98.4 L187.9 101.7 L188.5 105.0 L189.2 108.3 L189.8 111.6 L190.5 114.8 L191.2 117.9 L191.8 121.0 L192.5 123.9 L193.2 126.8 L193.8 129.6 L194.5 132.2 L195.1 134.8 L195.8 137.3 L196.5 139.7 L197.1 142.0 L197.8 144.3 L198.5 146.4 L199.1 148.4 L199.8 150.4 L200.4 152.3 L201.1 154.1 L201.8 155.9 L202.4 157.6 L203.1 159.2 L203.7 160.7 L204.4 162.2 L205.1 163.6 L205.7 165.0 L206.4 166.3 L207.1 167.6 L207.7 168.8 L208.4 169.9 L209.0 171.0 L209.7 172.1 L210.4 173.1 L211.0 174.0 L211.7 175.0 L212.4 175.9 L213.0 176.7 L213.7 177.5 L214.3 178.3 L215.0 179.1 L215.7 179.8 L216.3 180.5 L217.0 181.1 L217.7 181.8 L218.3 182.4 L219.0 183.0 L219.6 183.5 L220.3 184.0 L221.0 184.6 L221.6 185.0 L222.3 185.5 L223.0 186.0 L223.6 186.4 L224.3 186.8 L224.9 187.2 L225.6 187.6 L226.3 187.9 L226.9 188.3 L227.6 188.6 L228.2 188.9 L228.9 189.2 L229.6 189.5 L230.2 189.8 L230.9 190.0 L231.6 190.3 L232.2 190.5 L232.9 190.8 L233.5 191.0 L234.2 191.2 L234.9 191.4 L235.5 191.6 L236.2 191.8 L236.9 192.0 L237.5 192.1 L238.2 192.3 L238.8 192.5 L239.5 192.6 L240.2 192.8 L240.8 192.9 L241.5 193.0 L242.2 193.2 L242.8 193.3 L243.5 193.4 L244.1 193.5 L244.8 193.6 L245.5 193.7 L246.1 193.8 L246.8 193.9 L247.0 196.0Z" fill="#eeb27a" fill-opacity=".5"/><path d="M148.8 196.0L149.5 195.7 L150.1 195.7 L150.8 195.8 L151.4 195.8 L152.1 195.8 L152.8 195.8 L153.4 195.8 L154.1 195.8 L154.8 195.8 L155.4 195.7 L156.1 195.6 L156.7 195.4 L157.4 195.2 L158.1 194.8 L158.7 194.3 L159.4 193.5 L160.0 192.6 L160.7 191.3 L161.4 189.7 L162.0 187.7 L162.7 185.3 L163.4 182.3 L164.0 178.9 L164.7 175.0 L165.3 170.5 L166.0 165.5 L166.7 160.1 L167.3 154.4 L168.0 148.3 L168.7 142.0 L169.3 135.7 L170.0 129.3 L170.6 123.1 L171.3 117.1 L172.0 111.4 L172.6 106.1 L173.3 101.2 L174.0 96.9 L174.6 93.1 L175.3 89.8 L175.9 87.1 L176.6 84.9 L177.3 83.2 L177.9 81.9 L178.6 80.9 L179.3 80.3 L179.9 80.0 L180.6 79.8 L181.2 79.8 L181.9 79.8 L182.6 80.5 L183.2 81.8 L183.9 83.7 L184.5 86.1 L185.2 88.9 L185.9 91.9 L186.5 95.1 L187.2 98.4 L187.9 101.7 L188.5 105.0 L189.2 108.3 L189.8 111.6 L190.5 114.8 L191.2 117.9 L191.8 121.0 L192.5 123.9 L193.2 126.8 L193.8 129.6 L194.5 132.2 L195.1 134.8 L195.8 137.3 L196.5 139.7 L197.1 142.0 L197.8 144.3 L198.5 146.4 L199.1 148.4 L199.8 150.4 L200.4 152.3 L201.1 154.1 L201.8 155.9 L202.4 157.6 L203.1 159.2 L203.7 160.7 L204.4 162.2 L205.1 163.6 L205.7 165.0 L206.4 166.3 L207.1 167.6 L207.7 168.8 L208.4 169.9 L209.0 171.0 L209.7 172.1 L210.4 173.1 L211.0 174.0 L211.7 175.0 L212.4 175.9 L213.0 176.7 L213.7 177.5 L214.3 178.3 L215.0 179.1 L215.7 179.8 L216.3 180.5 L217.0 181.1 L217.7 181.8 L218.3 182.4 L219.0 183.0 L219.6 183.5 L220.3 184.0 L221.0 184.6 L221.6 185.0 L222.3 185.5 L223.0 186.0 L223.6 186.4 L224.3 186.8 L224.9 187.2 L225.6 187.6 L226.3 187.9 L226.9 188.3 L227.6 188.6 L228.2 188.9 L228.9 189.2 L229.6 189.5 L230.2 189.8 L230.9 190.0 L231.6 190.3 L232.2 190.5 L232.9 190.8 L233.5 191.0 L234.2 191.2 L234.9 191.4 L235.5 191.6 L236.2 191.8 L236.9 192.0 L237.5 192.1 L238.2 192.3 L238.8 192.5 L239.5 192.6 L240.2 192.8 L240.8 192.9 L241.5 193.0 L242.2 193.2 L242.8 193.3 L243.5 193.4 L244.1 193.5 L244.8 193.6 L245.5 193.7 L246.1 193.8 L246.8 193.9 L247.0 196.0Z" fill="url(#hatch)" fill-opacity=".16"/><path d="M183.0 81.3V196.0" stroke="#eaa96d" stroke-width="1.5"/><path d="M184.5 85.9V196.0" stroke="#7b858f" stroke-width="1.5"/><path d="M70.0 196.0 L70.7 196.0 L71.3 196.0 L72.0 196.0 L72.6 196.0 L73.3 196.0 L74.0 196.0 L74.6 196.0 L75.3 196.0 L76.0 196.0 L76.6 196.0 L77.3 196.0 L77.9 196.0 L78.6 196.0 L79.3 196.0 L79.9 196.0 L80.6 196.0 L81.3 196.0 L81.9 196.0 L82.6 196.0 L83.2 196.0 L83.9 196.0 L84.6 196.0 L85.2 196.0 L85.9 196.0 L86.6 196.0 L87.2 196.0 L87.9 196.0 L88.5 196.0 L89.2 196.0 L89.9 196.0 L90.5 196.0 L91.2 196.0 L91.9 196.0 L92.5 196.0 L93.2 196.0 L93.8 196.0 L94.5 196.0 L95.2 196.0 L95.8 196.0 L96.5 196.0 L97.1 196.0 L97.8 196.0 L98.5 196.0 L99.1 196.0 L99.8 196.0 L100.5 196.0 L101.1 196.0 L101.8 196.0 L102.4 196.0 L103.1 196.0 L103.8 196.0 L104.4 196.0 L105.1 196.0 L105.8 196.0 L106.4 196.0 L107.1 196.0 L107.7 196.0 L108.4 196.0 L109.1 196.0 L109.7 196.0 L110.4 196.0 L111.1 196.0 L111.7 196.0 L112.4 196.0 L113.0 195.9 L113.7 195.9 L114.4 195.9 L115.0 195.9 L115.7 195.9 L116.3 195.9 L117.0 195.8 L117.7 195.8 L118.3 195.7 L119.0 195.7 L119.7 195.6 L120.3 195.6 L121.0 195.5 L121.6 195.4 L122.3 195.4 L123.0 195.3 L123.6 195.2 L124.3 195.1 L125.0 195.0 L125.6 194.9 L126.3 194.8 L126.9 194.7 L127.6 194.5 L128.3 194.4 L128.9 194.3 L129.6 194.2 L130.3 194.1 L130.9 194.0 L131.6 194.0 L132.2 193.9 L132.9 193.8 L133.6 193.8 L134.2 193.8 L134.9 193.7 L135.6 193.7 L136.2 193.8 L136.9 193.8 L137.5 193.8 L138.2 193.9 L138.9 194.0 L139.5 194.0 L140.2 194.1 L140.8 194.2 L141.5 194.3 L142.2 194.4 L142.8 194.6 L143.5 194.7 L144.2 194.8 L144.8 194.9 L145.5 195.0 L146.1 195.1 L146.8 195.2 L147.5 195.3 L148.1 195.4 L148.8 195.4 L149.5 195.5 L150.1 195.6 L150.8 195.6 L151.4 195.7 L152.1 195.7 L152.8 195.7 L153.4 195.7 L154.1 195.6 L154.8 195.5 L155.4 195.3 L156.1 195.0 L156.7 194.5 L157.4 193.9 L158.1 193.1 L158.7 192.0 L159.4 190.6 L160.0 188.7 L160.7 186.5 L161.4 183.7 L162.0 180.3 L162.7 176.4 L163.4 171.9 L164.0 166.8 L164.7 161.1 L165.3 154.8 L166.0 148.1 L166.7 140.9 L167.3 133.5 L168.0 125.9 L168.7 118.2 L169.3 110.6 L170.0 103.1 L170.6 96.0 L171.3 89.2 L172.0 82.9 L172.6 77.2 L173.3 72.1 L174.0 67.6 L174.6 63.7 L175.3 60.5 L175.9 57.8 L176.6 55.8 L177.3 54.2 L177.9 53.1 L178.6 52.3 L179.3 51.9 L179.9 51.7 L180.6 51.6 L181.2 51.6 L181.9 52.2 L182.6 53.6 L183.2 55.8 L183.9 58.5 L184.5 61.7 L185.2 65.3 L185.9 69.0 L186.5 72.9 L187.2 76.9 L187.9 81.0 L188.5 85.0 L189.2 88.9 L189.8 92.8 L190.5 96.7 L191.2 100.4 L191.8 104.0 L192.5 107.6 L193.2 111.0 L193.8 114.3 L194.5 117.5 L195.1 120.6 L195.8 123.6 L196.5 126.5 L197.1 129.3 L197.8 131.9 L198.5 134.5 L199.1 137.0 L199.8 139.4 L200.4 141.7 L201.1 143.9 L201.8 146.0 L202.4 148.0 L203.1 150.0 L203.7 151.8 L204.4 153.6 L205.1 155.4 L205.7 157.0 L206.4 158.6 L207.1 160.2 L207.7 161.6 L208.4 163.0 L209.0 164.4 L209.7 165.7 L210.4 166.9 L211.0 168.1 L211.7 169.3 L212.4 170.4 L213.0 171.4 L213.7 172.4 L214.3 173.4 L215.0 174.3 L215.7 175.2 L216.3 176.1 L217.0 176.9 L217.7 177.7 L218.3 178.5 L219.0 179.2 L219.6 179.9 L220.3 180.5 L221.0 181.2 L221.6 181.8 L222.3 182.4 L223.0 182.9 L223.6 183.5 L224.3 184.0 L224.9 184.5 L225.6 185.0 L226.3 185.4 L226.9 185.9 L227.6 186.3 L228.2 186.7 L228.9 187.1 L229.6 187.4 L230.2 187.8 L230.9 188.1 L231.6 188.5 L232.2 188.8 L232.9 189.1 L233.5 189.4 L234.2 189.6 L234.9 189.9 L235.5 190.2 L236.2 190.4 L236.9 190.6 L237.5 190.9 L238.2 191.1 L238.8 191.3 L239.5 191.5 L240.2 191.7 L240.8 191.8 L241.5 192.0 L242.2 192.2 L242.8 192.3 L243.5 192.5 L244.1 192.6 L244.8 192.8 L245.5 192.9 L246.1 193.0 L246.8 193.2 L247.4 193.3 L248.1 193.4 L248.8 193.5 L249.4 193.6 L250.1 193.7 L250.8 193.8 L251.4 193.9 L252.1 194.0 L252.7 194.1 L253.4 194.1 L254.1 194.2 L254.7 194.3 L255.4 194.4 L256.1 194.4 L256.7 194.5 L257.4 194.6 L258.0 194.6 L258.7 194.7 L259.4 194.7 L260.0 194.8 L260.7 194.8 L261.4 194.9 L262.0 194.9 L262.7 195.0 L263.3 195.0 L264.0 195.1 L264.7 195.1 L265.3 195.1 L266.0 195.2 L266.7 195.2 L267.3 195.2 L268.0 195.3 L268.6 195.3 L269.3 195.3 L270.0 195.4 L270.6 195.4 L271.3 195.4 L271.9 195.4 L272.6 195.5 L273.3 195.5 L273.9 195.5 L274.6 195.5 L275.3 195.5 L275.9 195.6 L276.6 195.6 L277.2 195.6 L277.9 195.6 L278.6 195.6 L279.2 195.6 L279.9 195.7 L280.6 195.7 L281.2 195.7 L281.9 195.7 L282.5 195.7 L283.2 195.7 L283.9 195.7 L284.5 195.7 L285.2 195.8 L285.9 195.8 L286.5 195.8 L287.2 195.8 L287.8 195.8 L288.5 195.8" fill="none" stroke="#7fd07f" stroke-width="1"/><path d="M70.0 196.0 L70.7 196.0 L71.3 196.0 L72.0 196.0 L72.6 196.0 L73.3 196.0 L74.0 196.0 L74.6 196.0 L75.3 196.0 L76.0 196.0 L76.6 196.0 L77.3 196.0 L77.9 196.0 L78.6 196.0 L79.3 196.0 L79.9 196.0 L80.6 196.0 L81.3 196.0 L81.9 196.0 L82.6 196.0 L83.2 196.0 L83.9 196.0 L84.6 196.0 L85.2 196.0 L85.9 196.0 L86.6 196.0 L87.2 196.0 L87.9 196.0 L88.5 196.0 L89.2 196.0 L89.9 196.0 L90.5 196.0 L91.2 196.0 L91.9 196.0 L92.5 196.0 L93.2 196.0 L93.8 196.0 L94.5 196.0 L95.2 196.0 L95.8 196.0 L96.5 196.0 L97.1 196.0 L97.8 196.0 L98.5 196.0 L99.1 196.0 L99.8 196.0 L100.5 196.0 L101.1 196.0 L101.8 196.0 L102.4 196.0 L103.1 196.0 L103.8 196.0 L104.4 196.0 L105.1 196.0 L105.8 196.0 L106.4 196.0 L107.1 196.0 L107.7 196.0 L108.4 196.0 L109.1 196.0 L109.7 196.0 L110.4 196.0 L111.1 196.0 L111.7 196.0 L112.4 196.0 L113.0 196.0 L113.7 196.0 L114.4 195.9 L115.0 195.9 L115.7 195.9 L116.3 195.9 L117.0 195.9 L117.7 195.9 L118.3 195.8 L119.0 195.8 L119.7 195.8 L120.3 195.7 L121.0 195.7 L121.6 195.7 L122.3 195.6 L123.0 195.6 L123.6 195.5 L124.3 195.4 L125.0 195.4 L125.6 195.3 L126.3 195.2 L126.9 195.2 L127.6 195.1 L128.3 195.0 L128.9 195.0 L129.6 194.9 L130.3 194.8 L130.9 194.8 L131.6 194.7 L132.2 194.7 L132.9 194.7 L133.6 194.6 L134.2 194.6 L134.9 194.6 L135.6 194.6 L136.2 194.6 L136.9 194.6 L137.5 194.7 L138.2 194.7 L138.9 194.7 L139.5 194.8 L140.2 194.8 L140.8 194.9 L141.5 195.0 L142.2 195.0 L142.8 195.1 L143.5 195.2 L144.2 195.2 L144.8 195.3 L145.5 195.4 L146.1 195.4 L146.8 195.5 L147.5 195.6 L148.1 195.6 L148.8 195.7 L149.5 195.7 L150.1 195.7 L150.8 195.8 L151.4 195.8 L152.1 195.8 L152.8 195.8 L153.4 195.8 L154.1 195.8 L154.8 195.8 L155.4 195.7 L156.1 195.6 L156.7 195.4 L157.4 195.2 L158.1 194.8 L158.7 194.3 L159.4 193.5 L160.0 192.6 L160.7 191.3 L161.4 189.7 L162.0 187.7 L162.7 185.3 L163.4 182.3 L164.0 178.9 L164.7 175.0 L165.3 170.5 L166.0 165.5 L166.7 160.1 L167.3 154.4 L168.0 148.3 L168.7 142.0 L169.3 135.7 L170.0 129.3 L170.6 123.1 L171.3 117.1 L172.0 111.4 L172.6 106.1 L173.3 101.2 L174.0 96.9 L174.6 93.1 L175.3 89.8 L175.9 87.1 L176.6 84.9 L177.3 83.2 L177.9 81.9 L178.6 80.9 L179.3 80.3 L179.9 80.0 L180.6 79.8 L181.2 79.8 L181.9 79.8 L182.6 80.5 L183.2 81.8 L183.9 83.7 L184.5 86.1 L185.2 88.9 L185.9 91.9 L186.5 95.1 L187.2 98.4 L187.9 101.7 L188.5 105.0 L189.2 108.3 L189.8 111.6 L190.5 114.8 L191.2 117.9 L191.8 121.0 L192.5 123.9 L193.2 126.8 L193.8 129.6 L194.5 132.2 L195.1 134.8 L195.8 137.3 L196.5 139.7 L197.1 142.0 L197.8 144.3 L198.5 146.4 L199.1 148.4 L199.8 150.4 L200.4 152.3 L201.1 154.1 L201.8 155.9 L202.4 157.6 L203.1 159.2 L203.7 160.7 L204.4 162.2 L205.1 163.6 L205.7 165.0 L206.4 166.3 L207.1 167.6 L207.7 168.8 L208.4 169.9 L209.0 171.0 L209.7 172.1 L210.4 173.1 L211.0 174.0 L211.7 175.0 L212.4 175.9 L213.0 176.7 L213.7 177.5 L214.3 178.3 L215.0 179.1 L215.7 179.8 L216.3 180.5 L217.0 181.1 L217.7 181.8 L218.3 182.4 L219.0 183.0 L219.6 183.5 L220.3 184.0 L221.0 184.6 L221.6 185.0 L222.3 185.5 L223.0 186.0 L223.6 186.4 L224.3 186.8 L224.9 187.2 L225.6 187.6 L226.3 187.9 L226.9 188.3 L227.6 188.6 L228.2 188.9 L228.9 189.2 L229.6 189.5 L230.2 189.8 L230.9 190.0 L231.6 190.3 L232.2 190.5 L232.9 190.8 L233.5 191.0 L234.2 191.2 L234.9 191.4 L235.5 191.6 L236.2 191.8 L236.9 192.0 L237.5 192.1 L238.2 192.3 L238.8 192.5 L239.5 192.6 L240.2 192.8 L240.8 192.9 L241.5 193.0 L242.2 193.2 L242.8 193.3 L243.5 193.4 L244.1 193.5 L244.8 193.6 L245.5 193.7 L246.1 193.8 L246.8 193.9 L247.4 194.0 L248.1 194.1 L248.8 194.2 L249.4 194.2 L250.1 194.3 L250.8 194.4 L251.4 194.5 L252.1 194.5 L252.7 194.6 L253.4 194.7 L254.1 194.7 L254.7 194.8 L255.4 194.8 L256.1 194.9 L256.7 194.9 L257.4 195.0 L258.0 195.0 L258.7 195.0 L259.4 195.1 L260.0 195.1 L260.7 195.2 L261.4 195.2 L262.0 195.2 L262.7 195.3 L263.3 195.3 L264.0 195.3 L264.7 195.4 L265.3 195.4 L266.0 195.4 L266.7 195.4 L267.3 195.5 L268.0 195.5 L268.6 195.5 L269.3 195.5 L270.0 195.5 L270.6 195.6 L271.3 195.6 L271.9 195.6 L272.6 195.6 L273.3 195.6 L273.9 195.7 L274.6 195.7 L275.3 195.7 L275.9 195.7 L276.6 195.7 L277.2 195.7 L277.9 195.7 L278.6 195.7 L279.2 195.8 L279.9 195.8 L280.6 195.8 L281.2 195.8 L281.9 195.8 L282.5 195.8 L283.2 195.8 L283.9 195.8 L284.5 195.8 L285.2 195.8 L285.9 195.8 L286.5 195.8 L287.2 195.9 L287.8 195.9 L288.5 195.9" fill="none" stroke="#5d86ab" stroke-width="1"/><text x="183.5" y="188.5" font-size="10.5" font-weight="bold" fill="#e09540" text-anchor="middle">RT Cal</text><path d="M142.8 199.0L148.8 189.0L154.8 199.0Z" fill="#e2923c"/><path d="M241.0 199.0L247.0 189.0L253.0 199.0Z" fill="#e2923c"/><ellipse cx="78.5" cy="47.9" rx="6.1" ry="7.4" fill="none" stroke="#1f5f94" stroke-width="1.3"/><text x="78.3" y="51.8" font-size="10.8" fill="#1f5f94" stroke="#1f5f94" stroke-width=".3" text-anchor="middle">1</text><text x="90.0" y="52.0" font-size="11.4" font-weight="bold" fill="#1f5f94">Q: 374.3 &gt; 302.15</text><path d="M190.8 52.2l-4.4 0l4.4 -7.4l4.4 7.4z" fill="#185a8d"/><ellipse cx="78.5" cy="64.2" rx="6.1" ry="7.4" fill="none" stroke="#4fc04f" stroke-width="1.3"/><text x="78.3" y="68.1" font-size="10.8" fill="#4fc04f" stroke="#4fc04f" stroke-width=".3" text-anchor="middle">2</text><text x="90.0" y="68.0" font-size="10.85" fill="#4fc04f">Q: 374.3 &gt; 216.1</text><g transform="translate(259.0,39.5) scale(1)"><path fill="#e38a17" d="M12 5.99L19.53 19H4.47L12 5.99M12 2L1 21h22L12 2zm1 14h-2v2h2v-2zm0-6h-2v4h2v-4z"/></g></svg>
<div class="card" style="left:1297px;top:672px;width:592px;height:470px"></div>
<div class="t " style="left:1297px;top:699px;font-size:15.3px;color:#333;width:591px;text-align:center;">Calibration: Spirotetramat</div>
<svg class="ic" style="left:1848.50px;top:686.50px" width="23" height="23" viewBox="0 0 24 24" ><path fill="#e38a17" d="M12 5.99L19.53 19H4.47L12 5.99M12 2L1 21h22L12 2zm1 14h-2v2h2v-2zm0-6h-2v4h2v-4z"/></svg>
<div class="sel" style="left:1433px;top:726px;width:55px">1</div>
<div class="t lbl" style="left:1438px;top:720px;">Channel</div>
<svg class="ic" style="left:1461.00px;top:727.30px" width="24" height="24" viewBox="0 0 24 24" ><path fill="#666" d="M7 10l5 5 5-5z"/></svg>
<div class="sel" style="left:1496px;top:726px;width:81px">Quadratic</div>
<div class="t lbl" style="left:1501px;top:720px;">Curve fit</div>
<svg class="ic" style="left:1550.00px;top:727.30px" width="24" height="24" viewBox="0 0 24 24" ><path fill="#666" d="M7 10l5 5 5-5z"/></svg>
<div class="sel" style="left:1585px;top:726px;width:55px">1/C</div>
<div class="t lbl" style="left:1590px;top:720px;">Weighting</div>
<svg class="ic" style="left:1613.00px;top:727.30px" width="24" height="24" viewBox="0 0 24 24" ><path fill="#666" d="M7 10l5 5 5-5z"/></svg>
<div class="sel" style="left:1648px;top:726px;width:70px">Ignored</div>
<div class="t lbl" style="left:1653px;top:720px;">Zero</div>
<svg class="ic" style="left:1691.00px;top:727.30px" width="24" height="24" viewBox="0 0 24 24" ><path fill="#666" d="M7 10l5 5 5-5z"/></svg>
<div class="sel" style="left:1726px;top:726px;width:27px;padding:0"></div>
<svg class="ic" style="left:1729.55px;top:730.75px" width="18.5" height="18.5" viewBox="0 0 24 24" ><path fill="#555" d="M14 12c0-1.1-.9-2-2-2s-2 .9-2 2 .9 2 2 2 2-.9 2-2zm-2-9c-4.97 0-9 4.03-9 9H0l4 4 4-4H5c0-3.87 3.13-7 7-7s7 3.13 7 7-3.13 7-7 7c-1.51 0-2.91-.49-4.06-1.3l-1.42 1.44C8.04 20.3 9.94 21 12 21c4.97 0 9-4.03 9-9s-4.03-9-9-9z"/></svg>
<svg class="ic" style="left:1297px;top:755px;overflow:visible" width="591" height="387" viewBox="0 0 591 387"><path d="M69.5 302.5H557.5M69.5 254.5H557.5M69.5 206.5H557.5M69.5 158.5H557.5M69.5 110.5H557.5M69.5 62.5H557.5M69.5 14.5H557.5M232.5 14.0V350.0M394.5 14.0V350.0M557.5 14.0V350.0" stroke="#e0e0e0" fill="none"/><path d="M60.0 350.5H69.5M60.0 302.5H69.5M60.0 254.5H69.5M60.0 206.5H69.5M60.0 158.5H69.5M60.0 110.5H69.5M60.0 62.5H69.5M60.0 14.5H69.5M69.5 350.0V360.0M232.5 350.0V360.0M394.5 350.0V360.0M557.5 350.0V360.0" stroke="#d9d9d9" fill="none"/><path d="M69.5 14.0V360.0M69.0 350.5H557.5" stroke="#a0a0a0" stroke-width="1.1" fill="none"/><g font-size="12" fill="#555" text-anchor="end"><text x="59.5" y="354.6">0.0e+0</text><text x="59.5" y="306.6">5.0e-1</text><text x="59.5" y="258.6">1.0e+0</text><text x="59.5" y="210.6">1.5e+0</text><text x="59.5" y="162.6">2.0e+0</text><text x="59.5" y="114.6">2.5e+0</text><text x="59.5" y="66.6">3.0e+0</text><text x="59.5" y="18.6">3.5e+0</text></g><g font-size="12" fill="#555" text-anchor="middle"><text x="70.0" y="371.0">0.0</text><text x="232.7" y="371.0">200.0</text><text x="395.3" y="371.0">400.0</text><text x="558.0" y="371.0">600.0</text></g><path d="M69.5 349.1 L76.9 343.8 L84.3 338.6 L91.6 333.3 L99.0 328.1 L106.4 322.8 L113.8 317.5 L121.2 312.2 L128.6 307.0 L135.9 301.7 L143.3 296.4 L150.7 291.1 L158.1 285.7 L165.5 280.4 L172.9 275.1 L180.2 269.8 L187.6 264.4 L195.0 259.1 L202.4 253.7 L209.8 248.4 L217.2 243.0 L224.5 237.6 L231.9 232.3 L239.3 226.9 L246.7 221.5 L254.1 216.1 L261.4 210.7 L268.8 205.3 L276.2 199.8 L283.6 194.4 L291.0 189.0 L298.4 183.5 L305.7 178.1 L313.1 172.6 L320.5 167.2 L327.9 161.7 L335.3 156.3 L342.7 150.8 L350.0 145.3 L357.4 139.8 L364.8 134.3 L372.2 128.8 L379.6 123.3 L386.9 117.8 L394.3 112.2 L401.7 106.7 L409.1 101.2 L416.5 95.6 L423.9 90.1 L431.2 84.5 L438.6 79.0 L446.0 73.4 L453.4 67.8 L460.8 62.2 L468.2 56.6 L475.5 51.0 L482.9 45.4 L490.3 39.8 L497.7 34.2 L505.1 28.6 L512.5 23.0" stroke="#7ba4c9" stroke-width="1.1" fill="none"/><rect x="70.0" y="340.5" width="13" height="9.5" fill="none" stroke="#ee8090" stroke-width="1"/><path d="M78.5 349.0l-5 0l5 -8l5 8z" fill="#6c8ce6"/><path d="M472.2 50.4l4 -4l4 4l-4 4z" fill="#e8a561"/><path d="M228.2 233.0l4 -4l4 4l-4 4z" fill="#e8a561"/><path d="M106.2 317.9l4 -4l4 4l-4 4z" fill="#e8a561"/><path d="M73.6 342.9l4 -4l4 4l-4 4z" fill="#e8a561"/><path d="M73.6 345.5l4 -4l4 4l-4 4z" fill="#e8a561"/><path d="M69.6 346.9l4 -4l4 4l-4 4z" fill="#e8a561"/><path d="M70.3 349.0L78.4 342.2" stroke="#8a7a70" stroke-width="1.5"/><circle cx="83.0" cy="340.4" r="4" fill="none" stroke="#e0262e" stroke-width="1.9"/><path d="M70.5 281.7l-5.3 0l5.3 -9.4l5.3 9.4z" fill="#5f83e6"/><g font-size="10" fill="#2a6a9e"><text x="75.0" y="25.5">Q: 374.3 &gt; 302.15</text><text x="75.0" y="39.5">R²: 0.999891</text><text x="75.0" y="53.5">y = 4.18e-7x² + 6.01e-3x + 9.75e-3</text></g></svg>
<div class="t " style="left:0px;top:1162px;font-size:11.45px;color:#333;width:1896px;text-align:center;">Solution Fujitsu and Phytocontrol - Powered by Fujitsu Compute As A Service</div>
</body></html>
